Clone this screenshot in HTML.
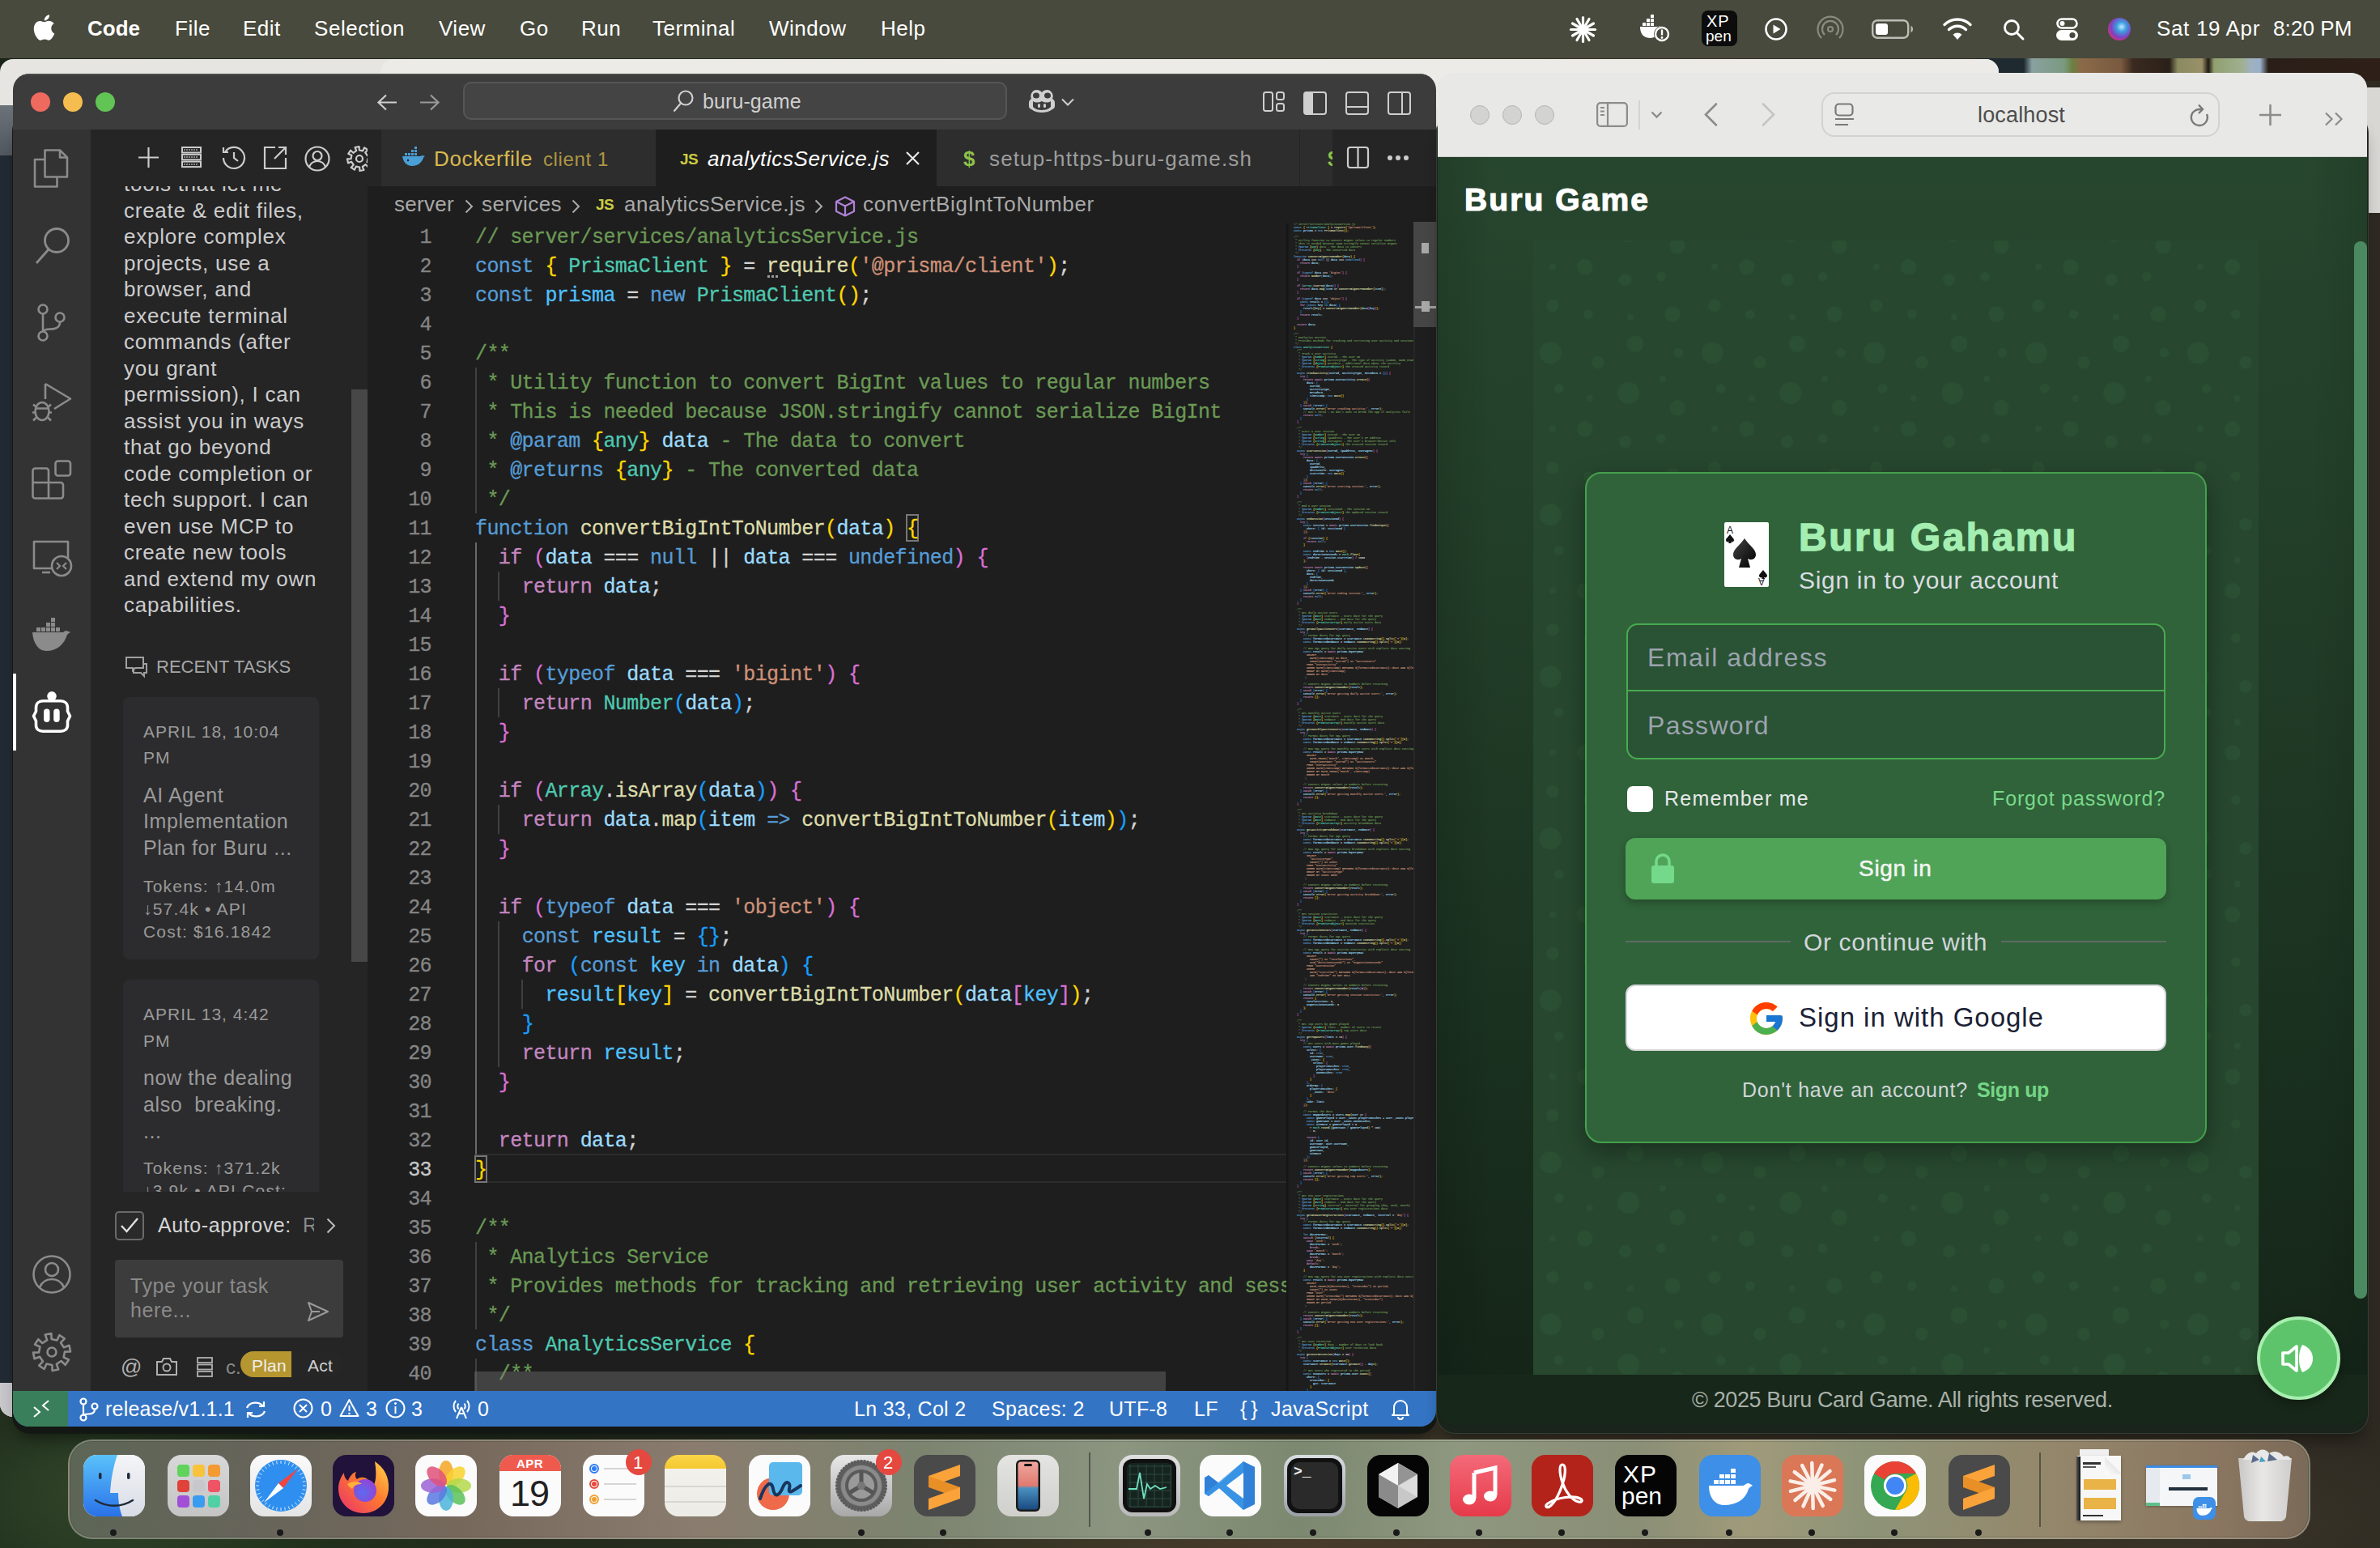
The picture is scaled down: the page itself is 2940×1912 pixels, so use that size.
<!DOCTYPE html>
<html><head><meta charset="utf-8">
<style>
*{box-sizing:border-box;margin:0;padding:0}
html,body{width:2940px;height:1912px;overflow:hidden}
body{position:relative;font-family:"Liberation Sans",sans-serif;background:#2a2e22}
.a{position:absolute}
.t{white-space:pre}
svg{position:absolute;overflow:visible}
</style></head><body>

<div class="a" style="left:0;top:0;width:2940px;height:1912px;background:
 radial-gradient(ellipse 260px 60px at 2700px 80px,#6a6a50 0%,transparent 80%),
 radial-gradient(ellipse 300px 200px at 120px 1840px,#30452a 0%,transparent 90%),radial-gradient(ellipse 500px 160px at 250px 1880px,#22361c 0%,transparent 80%),
 radial-gradient(ellipse 700px 160px at 1600px 1890px,#4a3c2c 0%,transparent 80%),
 radial-gradient(ellipse 500px 160px at 2700px 1880px,#3a3428 0%,transparent 80%),
 linear-gradient(90deg,#1a2416 0%,#283020 35%,#3a3326 65%,#2e2a22 100%)"></div>
<div class="a" style="left:2440px;top:60px;width:500px;height:40px;background:linear-gradient(90deg,#1e2a30 0px,#1e2a30 60px,#8aa0a0 70px,#7a9a80 110px,#6a8040 120px,#8a6a48 130px,#7a5a40 180px,#3a2a20 195px,#2a2018 240px,#8a8a60 250px,#9a9068 280px,#201810 288px,#90a070 295px,#a0b090 330px,#a0b0c0 340px,#9ab0c8 352px,#2a1e18 362px,#2e2018 500px)"></div>
<div class="a" style="left:0px;top:0px;width:2940px;height:72px;background:#484a3d;"></div>
<svg style="left:41px;top:18px;" width="27" height="32" viewBox="0 0 27 32"><path fill="#fff" d="M22.3 17c0-4 3.3-5.9 3.4-6-1.9-2.7-4.8-3.1-5.8-3.1-2.5-.3-4.8 1.4-6.1 1.4-1.3 0-3.2-1.4-5.2-1.3C5.9 8 3.4 9.5 2.1 11.9c-2.8 4.8-.7 12 2 15.9 1.3 1.9 2.9 4.1 5 4 2-.1 2.7-1.3 5.1-1.3s3.1 1.3 5.1 1.2c2.1 0 3.5-1.9 4.8-3.9 1.5-2.2 2.1-4.3 2.2-4.4-.1 0-4-1.5-4-6.4zM18.4 5.3c1.1-1.3 1.8-3.1 1.6-5-1.6.1-3.5 1.1-4.6 2.4-1 1.1-1.9 3-1.7 4.8 1.8.1 3.6-.9 4.7-2.2z"/></svg>
<div class="a t" style="left:108px;top:21.9px;font:normal bold 26px/26px 'Liberation Sans',sans-serif;color:#fff;letter-spacing:0px;">Code</div>
<div class="a t" style="left:216px;top:21.9px;font:normal normal 26px/26px 'Liberation Sans',sans-serif;color:#fff;letter-spacing:0.5px;">File</div>
<div class="a t" style="left:300px;top:21.9px;font:normal normal 26px/26px 'Liberation Sans',sans-serif;color:#fff;letter-spacing:0.5px;">Edit</div>
<div class="a t" style="left:388px;top:21.9px;font:normal normal 26px/26px 'Liberation Sans',sans-serif;color:#fff;letter-spacing:0.55px;">Selection</div>
<div class="a t" style="left:542px;top:21.9px;font:normal normal 26px/26px 'Liberation Sans',sans-serif;color:#fff;letter-spacing:0.5px;">View</div>
<div class="a t" style="left:642px;top:21.9px;font:normal normal 26px/26px 'Liberation Sans',sans-serif;color:#fff;letter-spacing:0.5px;">Go</div>
<div class="a t" style="left:718px;top:21.9px;font:normal normal 26px/26px 'Liberation Sans',sans-serif;color:#fff;letter-spacing:0.5px;">Run</div>
<div class="a t" style="left:806px;top:21.9px;font:normal normal 26px/26px 'Liberation Sans',sans-serif;color:#fff;letter-spacing:0.5px;">Terminal</div>
<div class="a t" style="left:950px;top:21.9px;font:normal normal 26px/26px 'Liberation Sans',sans-serif;color:#fff;letter-spacing:0.5px;">Window</div>
<div class="a t" style="left:1088px;top:21.9px;font:normal normal 26px/26px 'Liberation Sans',sans-serif;color:#fff;letter-spacing:0.5px;">Help</div>
<div class="a t" style="left:2664px;top:21.9px;font:normal normal 26px/26px 'Liberation Sans',sans-serif;color:#fff;letter-spacing:0.66px;">Sat 19 Apr</div>
<div class="a t" style="left:2808px;top:21.9px;font:normal normal 26px/26px 'Liberation Sans',sans-serif;color:#fff;letter-spacing:0.1px;">8:20 PM</div>
<svg style="left:1939px;top:20px;" width="33" height="33" viewBox="0 0 33 33"><line x1="16.5" y1="16.5" x2="31.50" y2="16.50" stroke="#fff" stroke-width="3.2" stroke-linecap="round"/><line x1="16.5" y1="16.5" x2="29.49" y2="24.00" stroke="#fff" stroke-width="3.2" stroke-linecap="round"/><line x1="16.5" y1="16.5" x2="24.00" y2="29.49" stroke="#fff" stroke-width="3.2" stroke-linecap="round"/><line x1="16.5" y1="16.5" x2="16.50" y2="31.50" stroke="#fff" stroke-width="3.2" stroke-linecap="round"/><line x1="16.5" y1="16.5" x2="9.00" y2="29.49" stroke="#fff" stroke-width="3.2" stroke-linecap="round"/><line x1="16.5" y1="16.5" x2="3.51" y2="24.00" stroke="#fff" stroke-width="3.2" stroke-linecap="round"/><line x1="16.5" y1="16.5" x2="1.50" y2="16.50" stroke="#fff" stroke-width="3.2" stroke-linecap="round"/><line x1="16.5" y1="16.5" x2="3.51" y2="9.00" stroke="#fff" stroke-width="3.2" stroke-linecap="round"/><line x1="16.5" y1="16.5" x2="9.00" y2="3.51" stroke="#fff" stroke-width="3.2" stroke-linecap="round"/><line x1="16.5" y1="16.5" x2="16.50" y2="1.50" stroke="#fff" stroke-width="3.2" stroke-linecap="round"/><line x1="16.5" y1="16.5" x2="24.00" y2="3.51" stroke="#fff" stroke-width="3.2" stroke-linecap="round"/><line x1="16.5" y1="16.5" x2="29.49" y2="9.00" stroke="#fff" stroke-width="3.2" stroke-linecap="round"/></svg>
<svg style="left:2024px;top:18px;" width="40" height="34" viewBox="0 0 40 34"><path fill="#fff" d="M2 15h22c1 0 2-1 3-1 1 1 2 2 1 3-1 6-6 12-14 12C6 29 2 23 2 15z"/><rect x="5" y="10" width="4" height="4" fill="#fff"/><rect x="10" y="10" width="4" height="4" fill="#fff"/><rect x="15" y="10" width="4" height="4" fill="#fff"/><rect x="10" y="5" width="4" height="4" fill="#fff"/><rect x="15" y="5" width="4" height="4" fill="#fff"/><rect x="15" y="0" width="4" height="4" fill="#fff"/><circle cx="29" cy="24" r="10" fill="#484a3d"/><circle cx="29" cy="24" r="8" fill="none" stroke="#fff" stroke-width="2.4"/><rect x="27.8" y="18.5" width="2.4" height="7" fill="#fff"/><circle cx="29" cy="28.5" r="1.4" fill="#fff"/></svg>
<div class="a" style="left:2102px;top:13px;width:44px;height:44px;border-radius:8px;background:#0c0c0c"></div>
<div class="a t" style="left:2108px;top:16.0px;font:normal normal 20px/20px 'Liberation Sans',sans-serif;color:#fff;letter-spacing:1px;">XP</div>
<div class="a t" style="left:2107px;top:34.9px;font:normal normal 19px/19px 'Liberation Sans',sans-serif;color:#fff;letter-spacing:0px;">pen</div>
<svg style="left:2180px;top:22px;" width="28" height="28" viewBox="0 0 28 28"><circle cx="14" cy="14" r="12.5" fill="none" stroke="#fff" stroke-width="2.6"/><path d="M10.5 8.5v11l9-5.5z" fill="#fff"/></svg>
<svg style="left:2245px;top:20px;" width="32" height="32" viewBox="0 0 32 32"><g fill="none" stroke="#8a8b80" stroke-width="2.2"><circle cx="16" cy="16" r="3"/><path d="M9 23a10 10 0 1 1 14 0"/><path d="M5 27a15.5 15.5 0 1 1 22 0"/></g></svg>
<svg style="left:2312px;top:24px;" width="52" height="24" viewBox="0 0 52 24"><rect x="1.2" y="1.2" width="44" height="21.6" rx="6" fill="none" stroke="#bdbdb5" stroke-width="2.4"/><rect x="5" y="5" width="15" height="14" rx="3" fill="#fff"/><path d="M48.5 8v8c1.8-.6 2.5-2 2.5-4s-.7-3.4-2.5-4z" fill="#bdbdb5"/></svg>
<svg style="left:2400px;top:22px;" width="36" height="27" viewBox="0 0 36 27"><path fill="#fff" d="M18 27l-5.5-6.2a8 8 0 0 1 11 0z"/><path fill="none" stroke="#fff" stroke-width="3.4" stroke-linecap="round" d="M7.5 14.5a15 15 0 0 1 21 0M2 8.5a23 23 0 0 1 32 0"/></svg>
<svg style="left:2474px;top:23px;" width="27" height="27" viewBox="0 0 27 27"><circle cx="11" cy="11" r="8.5" fill="none" stroke="#fff" stroke-width="2.8"/><path d="M17.5 17.5l7.5 7.5" stroke="#fff" stroke-width="3" stroke-linecap="round"/></svg>
<svg style="left:2540px;top:22px;" width="27" height="28" viewBox="0 0 27 28"><rect x="1.5" y="1.5" width="24" height="11" rx="5.5" fill="none" stroke="#fff" stroke-width="2.6"/><circle cx="7.5" cy="7" r="3" fill="#fff"/><rect x="0" y="15" width="27" height="13" rx="6.5" fill="#fff"/><circle cx="20" cy="21.5" r="3.6" fill="#484a3d"/></svg>
<div class="a" style="left:2604px;top:22px;width:28px;height:28px;border-radius:50%;background:radial-gradient(circle at 60% 40%,#c8e8ff 0%,#3aa0e0 25%,#8040c0 55%,#e03070 80%,#401850 100%)"></div>
<div class="a" style="left:0px;top:73px;width:2469px;height:1677px;border-radius:16px;background:#e6e5e2;overflow:hidden"><div class="a" style="left:0;top:57px;width:20px;height:62px;background:linear-gradient(#6c7279,#52585f)"></div><div class="a" style="left:0;top:119px;width:20px;height:1516px;background:#222a33"></div><div class="a" style="left:0;top:1635px;width:20px;height:42px;background:#c8c8cc"></div></div>
<div class="a" style="left:470px;top:73px;width:1999px;height:60px;border-radius:16px 16px 0 0;background:#ecebe8"></div>
<div class="a" style="left:2880px;top:108px;width:60px;height:155px;border-radius:20px 0 0 0;background:#d8d7d4"></div>
<div class="a" style="left:15px;top:140px;width:1760px;height:1631px;border-radius:22px;background:#141814;box-shadow:0 14px 20px -8px rgba(0,0,0,.45)"></div>
<div class="a" style="left:16px;top:91px;width:1758px;height:1671px;overflow:hidden;border-radius:20px;background:#3c3c3c"><div class="a" style="left:-16px;top:-91px;width:2940px;height:1912px">
<div class="a" style="left:16px;top:91px;width:1758px;height:2px;background:#4a4a4a;"></div>
<div class="a" style="left:38px;top:114px;width:24px;height:24px;border-radius:50%;background:#ee6a5f"></div>
<div class="a" style="left:78px;top:114px;width:24px;height:24px;border-radius:50%;background:#f5bd4f"></div>
<div class="a" style="left:118px;top:114px;width:24px;height:24px;border-radius:50%;background:#61c454"></div>
<svg style="left:466px;top:116px;" width="25" height="21" viewBox="0 0 25 21"><path d="M24 10.5H2M11 1.5l-9.5 9 9.5 9" fill="none" stroke="#cfcfcf" stroke-width="2.2"/></svg>
<svg style="left:518px;top:116px;" width="25" height="21" viewBox="0 0 25 21"><path d="M1 10.5h22M14 1.5l9.5 9-9.5 9" fill="none" stroke="#9a9a9a" stroke-width="2.2"/></svg>
<div class="a" style="left:572px;top:101px;width:672px;height:47px;border-radius:10px;background:#444;border:2px solid #565656"></div>
<svg style="left:831px;top:111px;" width="26" height="28" viewBox="0 0 26 28"><circle cx="16" cy="10" r="8.5" fill="none" stroke="#cfcfcf" stroke-width="2.2"/><path d="M10 16.5L1.5 26.5" stroke="#cfcfcf" stroke-width="2.2"/></svg>
<div class="a t" style="left:868px;top:112.8px;font:normal normal 25px/25px 'Liberation Sans',sans-serif;color:#cfcfcf;letter-spacing:0.1px;">buru-game</div>
<svg style="left:1270px;top:110px;" width="34" height="30" viewBox="0 0 34 30"><path fill="#cfcfcf" d="M17 4c-3-4-10-4-12 0-2 2-2 6-1 8-2 1-3 3-3 5v4c0 2 1 3 3 4 4 3 9 4 13 4s9-1 13-4c2-1 3-2 3-4v-4c0-2-1-4-3-5 1-2 1-6-1-8-2-4-9-4-12 0z"/><ellipse cx="10" cy="8" rx="4" ry="3.5" fill="#3c3c3c"/><ellipse cx="24" cy="8" rx="4" ry="3.5" fill="#3c3c3c"/><path d="M6 15c3 2 7 2 11 0 4 2 8 2 11 0v7c-3 3-7 4-11 4s-8-1-11-4z" fill="#3c3c3c"/><rect x="12" y="18" width="3" height="5" rx="1.5" fill="#cfcfcf"/><rect x="19" y="18" width="3" height="5" rx="1.5" fill="#cfcfcf"/></svg>
<svg style="left:1311px;top:121px;" width="16" height="10" viewBox="0 0 16 10"><path d="M1 1.5l7 7 7-7" fill="none" stroke="#cfcfcf" stroke-width="2"/></svg>
<svg style="left:1560px;top:113px;" width="27" height="25" viewBox="0 0 27 25"><g fill="none" stroke="#cfcfcf" stroke-width="2"><rect x="1" y="1" width="11" height="23" rx="2.5"/><rect x="17" y="1" width="9" height="9" rx="2.5"/><rect x="17" y="15" width="9" height="9" rx="2.5"/></g></svg>
<svg style="left:1610px;top:113px;" width="29" height="28" viewBox="0 0 29 28"><rect x="1" y="1" width="27" height="27" rx="3" fill="none" stroke="#cfcfcf" stroke-width="2"/><path d="M2 2h10v25H2z" fill="#cfcfcf"/></svg>
<svg style="left:1662px;top:113px;" width="29" height="28" viewBox="0 0 29 28"><g fill="none" stroke="#cfcfcf" stroke-width="2"><rect x="1" y="1" width="27" height="27" rx="3"/><path d="M1 19h27"/></g></svg>
<svg style="left:1714px;top:113px;" width="29" height="28" viewBox="0 0 29 28"><g fill="none" stroke="#cfcfcf" stroke-width="2"><rect x="1" y="1" width="27" height="27" rx="3"/><path d="M18 1v27"/></g></svg>
<div class="a" style="left:16px;top:160px;width:96px;height:1558px;background:#333333;"></div>
<svg style="left:40px;top:182px;" width="46" height="52" viewBox="0 0 46 52"><g fill="none" stroke="#8b8b8b" stroke-width="2.6" stroke-linejoin="round"><path d="M15.5 3.5H34L43 12.5V36.5H15.5Z"/><path d="M34 3.5V12.5H43"/><path d="M15.5 15H3V48.5H30.5V36.5"/></g></svg>
<svg style="left:42px;top:280px;" width="46" height="48" viewBox="0 0 46 48"><g fill="none" stroke="#8b8b8b" stroke-width="2.8"><circle cx="28" cy="17" r="14.5"/><path d="M18 28L3 45"/></g></svg>
<svg style="left:44px;top:375px;" width="40" height="50" viewBox="0 0 40 50"><g fill="none" stroke="#8b8b8b" stroke-width="2.6"><circle cx="9" cy="7" r="5.5"/><circle cx="9" cy="40" r="5.5"/><circle cx="30" cy="17" r="5.5"/><path d="M9 12.5v22M30 22.5c0 8-6 9-12 9s-9 2-9 3"/></g></svg>
<svg style="left:39px;top:472px;" width="50" height="50" viewBox="0 0 50 50"><g fill="none" stroke="#8b8b8b" stroke-width="2.6" stroke-linejoin="round" stroke-linecap="butt"><path d="M17 2V21M17 2L48 20.5L28 33"/><ellipse cx="13" cy="36" rx="8.5" ry="11"/><path d="M5 32.5H21M1 37.5H5M21 37.5H25M2 27.5l4 3.5M24 27.5l-4 3.5M2 47.5l4-4M24 47.5l-4-4"/></g></svg>
<svg style="left:39px;top:568px;" width="50" height="50" viewBox="0 0 50 50"><g fill="none" stroke="#8b8b8b" stroke-width="2.6" stroke-linejoin="round"><rect x="29.5" y="1.5" width="18.5" height="18" rx="3"/><path d="M4.5 10.5H18a3 3 0 0 1 3 3V28H36a3 3 0 0 1 3 3V44.5a3 3 0 0 1-3 3H4.5a3 3 0 0 1-3-3V13.5a3 3 0 0 1 3-3ZM1.5 28H21V47.5"/></g></svg>
<svg style="left:40px;top:664px;" width="50" height="50" viewBox="0 0 50 50"><g fill="none" stroke="#8b8b8b" stroke-width="2.6" stroke-linejoin="round"><path d="M26 38H2V5h42v20"/><path d="M12 43h10"/></g><circle cx="36" cy="35" r="12" fill="#333" stroke="#8b8b8b" stroke-width="2.6"/><path d="M30 31l4 4-4 4M42 31l-4 4 4 4" fill="none" stroke="#8b8b8b" stroke-width="2.2"/></svg>
<svg style="left:40px;top:765px;" width="48" height="40" viewBox="0 0 48 40"><g fill="#8b8b8b"><path d="M0 16h37c2 0 3-2 4-2 2 0 4 1 6 2-2 1-3 2-4 3-4 12-12 20-26 20C8 39 1 30 0 16z"/><rect x="5" y="10" width="5" height="5"/><rect x="11" y="10" width="5" height="5"/><rect x="17" y="10" width="5" height="5"/><rect x="23" y="10" width="5" height="5"/><rect x="29" y="10" width="5" height="5"/><rect x="17" y="4" width="5" height="5"/><rect x="23" y="4" width="5" height="5"/><rect x="23" y="-2" width="5" height="5"/></g></svg>
<div class="a" style="left:16px;top:832px;width:4px;height:95px;background:#ffffff;"></div>
<svg style="left:40px;top:852px;" width="48" height="56" viewBox="0 0 48 56"><path d="M13 13.8H35C40 13.8 43.5 17 43.5 22V26.5L46.5 32.5L43.5 38.5V43.5C43.5 48.5 40 51.2 35 51.2H13C8 51.2 4.5 48.5 4.5 43.5V38.5L1.5 32.5L4.5 26.5V22C4.5 17 8 13.8 13 13.8Z" fill="none" stroke="#fff" stroke-width="3.6" stroke-linejoin="round"/><circle cx="24" cy="7.8" r="5.8" fill="#fff"/><rect x="14" y="23.5" width="7.5" height="16.5" rx="3.7" fill="#fff"/><rect x="26.2" y="23.5" width="7.5" height="16.5" rx="3.7" fill="#fff"/></svg>
<svg style="left:40px;top:1550px;" width="48" height="48" viewBox="0 0 48 48"><g fill="none" stroke="#8b8b8b" stroke-width="2.6"><circle cx="24" cy="24" r="22.5"/><circle cx="24" cy="18" r="8"/><path d="M9 40c3-7 9-10 15-10s12 3 15 10"/></g></svg>
<svg style="left:40px;top:1646px;" width="48" height="48" viewBox="0 0 48 48"><g fill="none" stroke="#8b8b8b" stroke-width="2.6" stroke-linejoin="round"><polygon points="45.5,15.8 47.0,23.4 40.0,23.6 38.6,30.5 45.0,33.4 40.7,39.8 35.6,35.0 29.8,38.9 32.2,45.5 24.6,47.0 24.4,40.0 17.5,38.6 14.6,45.0 8.2,40.7 13.0,35.6 9.1,29.8 2.5,32.2 1.0,24.6 8.0,24.4 9.4,17.5 3.0,14.6 7.3,8.2 12.4,13.0 18.2,9.1 15.8,2.5 23.4,1.0 23.6,8.0 30.5,9.4 33.4,3.0 39.8,7.3 35.0,12.4 38.9,18.2"/><circle cx="24" cy="24" r="5.5"/></g></svg>
<div class="a" style="left:112px;top:160px;width:342px;height:1558px;background:#252526;"></div>
<svg style="left:170px;top:181px;" width="27" height="27" viewBox="0 0 27 27"><path d="M13.5 1v25M1 13.5h25" stroke="#cccccc" stroke-width="2.2"/></svg>
<svg style="left:224px;top:181px;" width="25" height="26" viewBox="0 0 25 26"><g fill="none" stroke="#cccccc" stroke-width="2"><rect x="1" y="1" width="23" height="6.5"/><rect x="1" y="9.8" width="23" height="6.5"/><rect x="1" y="18.6" width="23" height="6.5"/></g><g stroke="#cccccc" stroke-width="1.2"><path d="M4 3v2M7 3v2M10 3v2M13 3v2M16 3v2M19 3v2M4 12v2M7 12v2M10 12v2M13 12v2M16 12v2M19 12v2M4 21v2M7 21v2M10 21v2M13 21v2M16 21v2M19 21v2"/></g></svg>
<svg style="left:274px;top:180px;" width="28" height="28" viewBox="0 0 28 28"><g fill="none" stroke="#cccccc" stroke-width="2.2"><path d="M4 8A13 13 0 1 1 2 15"/><path d="M2 2v6h6"/><path d="M15 8v7l5 4"/></g></svg>
<svg style="left:326px;top:181px;" width="28" height="28" viewBox="0 0 28 28"><g fill="none" stroke="#cccccc" stroke-width="2.2"><path d="M14 1H1v26h26V14"/><path d="M13 15L27 1M18 1h9v9"/></g></svg>
<svg style="left:376px;top:180px;" width="32" height="32" viewBox="0 0 32 32"><g fill="none" stroke="#cccccc" stroke-width="2.2"><circle cx="16" cy="16" r="14.5"/><circle cx="16" cy="12.5" r="5.5"/><path d="M6 26c2-5 6-7 10-7s8 2 10 7"/></g></svg>
<div class="a" style="left:424px;top:170px;width:30px;height:50px;overflow:hidden">
<svg style="left:4px;top:10px;" width="32" height="32" viewBox="0 0 32 32"><g fill="none" stroke="#cccccc" stroke-width="2.2" stroke-linejoin="round"><polygon points="30.0,10.6 31.0,15.6 26.5,15.8 25.6,20.2 29.7,22.1 26.9,26.3 23.6,23.2 19.8,25.8 21.4,30.0 16.4,31.0 16.2,26.5 11.8,25.6 9.9,29.7 5.7,26.9 8.8,23.6 6.2,19.8 2.0,21.4 1.0,16.4 5.5,16.2 6.4,11.8 2.3,9.9 5.1,5.7 8.4,8.8 12.2,6.2 10.6,2.0 15.6,1.0 15.8,5.5 20.2,6.4 22.1,2.3 26.3,5.1 23.2,8.4 25.8,12.2"/><circle cx="16" cy="16" r="4"/></g></svg>
</div>
<div class="a" style="left:112px;top:230px;width:322px;height:1242px;overflow:hidden"><div class="a" style="left:-112px;top:-230px;width:600px;height:1500px">
<div class="a t" style="left:153px;top:214.4px;font:normal normal 26px/26px 'Liberation Sans',sans-serif;color:#cccccc;letter-spacing:0.75px;">tools that let me</div>
<div class="a t" style="left:153px;top:246.9px;font:normal normal 26px/26px 'Liberation Sans',sans-serif;color:#cccccc;letter-spacing:0.75px;">create &amp; edit files,</div>
<div class="a t" style="left:153px;top:279.4px;font:normal normal 26px/26px 'Liberation Sans',sans-serif;color:#cccccc;letter-spacing:0.75px;">explore complex</div>
<div class="a t" style="left:153px;top:311.9px;font:normal normal 26px/26px 'Liberation Sans',sans-serif;color:#cccccc;letter-spacing:0.75px;">projects, use a</div>
<div class="a t" style="left:153px;top:344.4px;font:normal normal 26px/26px 'Liberation Sans',sans-serif;color:#cccccc;letter-spacing:0.75px;">browser, and</div>
<div class="a t" style="left:153px;top:376.9px;font:normal normal 26px/26px 'Liberation Sans',sans-serif;color:#cccccc;letter-spacing:0.75px;">execute terminal</div>
<div class="a t" style="left:153px;top:409.4px;font:normal normal 26px/26px 'Liberation Sans',sans-serif;color:#cccccc;letter-spacing:0.75px;">commands (after</div>
<div class="a t" style="left:153px;top:441.9px;font:normal normal 26px/26px 'Liberation Sans',sans-serif;color:#cccccc;letter-spacing:0.75px;">you grant</div>
<div class="a t" style="left:153px;top:474.4px;font:normal normal 26px/26px 'Liberation Sans',sans-serif;color:#cccccc;letter-spacing:0.75px;">permission), I can</div>
<div class="a t" style="left:153px;top:506.9px;font:normal normal 26px/26px 'Liberation Sans',sans-serif;color:#cccccc;letter-spacing:0.75px;">assist you in ways</div>
<div class="a t" style="left:153px;top:539.4px;font:normal normal 26px/26px 'Liberation Sans',sans-serif;color:#cccccc;letter-spacing:0.75px;">that go beyond</div>
<div class="a t" style="left:153px;top:571.9px;font:normal normal 26px/26px 'Liberation Sans',sans-serif;color:#cccccc;letter-spacing:0.75px;">code completion or</div>
<div class="a t" style="left:153px;top:604.4px;font:normal normal 26px/26px 'Liberation Sans',sans-serif;color:#cccccc;letter-spacing:0.75px;">tech support. I can</div>
<div class="a t" style="left:153px;top:636.9px;font:normal normal 26px/26px 'Liberation Sans',sans-serif;color:#cccccc;letter-spacing:0.75px;">even use MCP to</div>
<div class="a t" style="left:153px;top:669.4px;font:normal normal 26px/26px 'Liberation Sans',sans-serif;color:#cccccc;letter-spacing:0.75px;">create new tools</div>
<div class="a t" style="left:153px;top:701.9px;font:normal normal 26px/26px 'Liberation Sans',sans-serif;color:#cccccc;letter-spacing:0.75px;">and extend my own</div>
<div class="a t" style="left:153px;top:734.4px;font:normal normal 26px/26px 'Liberation Sans',sans-serif;color:#cccccc;letter-spacing:0.75px;">capabilities.</div>
<svg style="left:155px;top:811px;" width="27" height="26" viewBox="0 0 27 26"><g fill="none" stroke="#a0a0a0" stroke-width="2"><path d="M1 1h21v13H12l-3 3v-3H1z"/><path d="M10 14v6h9l4 4v-4h3V9h-4"/></g></svg>
<div class="a t" style="left:193px;top:813.3px;font:normal normal 22px/22px 'Liberation Sans',sans-serif;color:#a6a6a6;letter-spacing:0px;">RECENT TASKS</div>
<div class="a" style="left:152px;top:861px;width:242px;height:324px;border-radius:8px;background:#2c2c2e"></div>
<div class="a t" style="left:177px;top:892.6px;font:normal normal 21px/21px 'Liberation Sans',sans-serif;color:#9a9a9a;letter-spacing:1.0px;">APRIL 18, 10:04</div>
<div class="a t" style="left:177px;top:924.6px;font:normal normal 21px/21px 'Liberation Sans',sans-serif;color:#9a9a9a;letter-spacing:1.0px;">PM</div>
<div class="a t" style="left:177px;top:969.8px;font:normal normal 25px/25px 'Liberation Sans',sans-serif;color:#9a9a9a;letter-spacing:0.6px;">AI Agent</div>
<div class="a t" style="left:177px;top:1002.2px;font:normal normal 25px/25px 'Liberation Sans',sans-serif;color:#9a9a9a;letter-spacing:0.6px;">Implementation</div>
<div class="a t" style="left:177px;top:1034.8px;font:normal normal 25px/25px 'Liberation Sans',sans-serif;color:#9a9a9a;letter-spacing:0.6px;">Plan for Buru ...</div>
<div class="a t" style="left:177px;top:1083.7px;font:normal normal 21px/21px 'Liberation Sans',sans-serif;color:#9a9a9a;letter-spacing:1.2px;">Tokens: ↑14.0m</div>
<div class="a t" style="left:177px;top:1111.7px;font:normal normal 21px/21px 'Liberation Sans',sans-serif;color:#9a9a9a;letter-spacing:1.2px;">↓57.4k • API</div>
<div class="a t" style="left:177px;top:1139.7px;font:normal normal 21px/21px 'Liberation Sans',sans-serif;color:#9a9a9a;letter-spacing:1.2px;">Cost: $16.1842</div>
<div class="a" style="left:152px;top:1210px;width:242px;height:300px;border-radius:8px;background:#2c2c2e"></div>
<div class="a t" style="left:177px;top:1242.2px;font:normal normal 21px/21px 'Liberation Sans',sans-serif;color:#9a9a9a;letter-spacing:1.0px;">APRIL 13, 4:42</div>
<div class="a t" style="left:177px;top:1274.7px;font:normal normal 21px/21px 'Liberation Sans',sans-serif;color:#9a9a9a;letter-spacing:1.0px;">PM</div>
<div class="a t" style="left:177px;top:1318.8px;font:normal normal 25px/25px 'Liberation Sans',sans-serif;color:#9a9a9a;letter-spacing:0.6px;">now the dealing</div>
<div class="a t" style="left:177px;top:1351.8px;font:normal normal 25px/25px 'Liberation Sans',sans-serif;color:#9a9a9a;letter-spacing:0.6px;">also  breaking.</div>
<div class="a t" style="left:177px;top:1384.8px;font:normal normal 25px/25px 'Liberation Sans',sans-serif;color:#9a9a9a;letter-spacing:0.6px;">...</div>
<div class="a t" style="left:177px;top:1432.2px;font:normal normal 21px/21px 'Liberation Sans',sans-serif;color:#9a9a9a;letter-spacing:1.2px;">Tokens: ↑371.2k</div>
<div class="a t" style="left:177px;top:1460.2px;font:normal normal 21px/21px 'Liberation Sans',sans-serif;color:#9a9a9a;letter-spacing:1.2px;">↓3.9k • API Cost:</div>
</div></div>
<div class="a" style="left:434px;top:481px;width:20px;height:707px;background:#474747;"></div>
<div class="a" style="left:142px;top:1496px;width:36px;height:36px;border-radius:5px;border:2px solid #6a6a6a;background:#2a2a2a"></div>
<svg style="left:148px;top:1503px;" width="24" height="20" viewBox="0 0 24 20"><path d="M2 11l6.5 7L22 2" fill="none" stroke="#e0e0e0" stroke-width="2.4"/></svg>
<div class="a t" style="left:195px;top:1501.2px;font:normal normal 25px/25px 'Liberation Sans',sans-serif;color:#d4d4d4;letter-spacing:0.6px;">Auto-approve: </div>
<div class="a t" style="left:374px;top:1501.2px;font:normal normal 25px/25px 'Liberation Sans',sans-serif;color:#8a8a8a;letter-spacing:0px;">R</div>
<div class="a" style="left:388px;top:1496px;width:6px;height:36px;background:#252526;"></div>
<svg style="left:403px;top:1504px;" width="12" height="20" viewBox="0 0 12 20"><path d="M1.5 1.5l8.5 8.5-8.5 8.5" fill="none" stroke="#bbb" stroke-width="2"/></svg>
<div class="a" style="left:142px;top:1556px;width:282px;height:96px;border-radius:4px;background:#3c3c3c"></div>
<div class="a t" style="left:161px;top:1576.2px;font:normal normal 25px/25px 'Liberation Sans',sans-serif;color:#8a8a8a;letter-spacing:0.6px;">Type your task</div>
<div class="a t" style="left:161px;top:1605.8px;font:normal normal 25px/25px 'Liberation Sans',sans-serif;color:#8a8a8a;letter-spacing:0.6px;">here...</div>
<svg style="left:379px;top:1607px;" width="28" height="26" viewBox="0 0 28 26"><path d="M2 2l24 11L2 24l4-11z M6 13h10" fill="none" stroke="#9a9a9a" stroke-width="2" stroke-linejoin="round"/></svg>
<div class="a t" style="left:149px;top:1674.9px;font:normal normal 26px/26px 'Liberation Sans',sans-serif;color:#b0b0b0;letter-spacing:0px;">@</div>
<svg style="left:193px;top:1677px;" width="26" height="22" viewBox="0 0 26 22"><g fill="none" stroke="#b0b0b0" stroke-width="2"><path d="M1 5h6l2-4h8l2 4h6v16H1z"/><circle cx="13" cy="12" r="4.5"/></g></svg>
<svg style="left:243px;top:1676px;" width="20" height="25" viewBox="0 0 20 25"><g fill="none" stroke="#b0b0b0" stroke-width="1.8"><rect x="1" y="1" width="18" height="6"/><rect x="1" y="9.5" width="18" height="6"/><rect x="1" y="18" width="18" height="6"/></g></svg>
<div class="a t" style="left:279px;top:1676.6px;font:normal normal 24px/24px 'Liberation Sans',sans-serif;color:#8a8a8a;letter-spacing:0px;">c.</div>
<div class="a" style="left:297px;top:1669px;width:127px;height:32px;border-radius:16px;background:#262626"></div>
<div class="a" style="left:297px;top:1669px;width:63px;height:32px;border-radius:16px 0 0 16px;background:#b6962f"></div>
<div class="a t" style="left:311px;top:1676.2px;font:normal normal 21px/21px 'Liberation Sans',sans-serif;color:#f0f0f0;letter-spacing:0.2px;">Plan</div>
<div class="a t" style="left:380px;top:1676.2px;font:normal normal 21px/21px 'Liberation Sans',sans-serif;color:#d0d0d0;letter-spacing:0.2px;">Act</div>
<div class="a" style="left:454px;top:160px;width:1320px;height:70px;background:#252526;"></div>
<div class="a" style="left:471px;top:160px;width:339px;height:70px;background:#2d2d2d;"></div>
<div class="a" style="left:810px;top:160px;width:347px;height:70px;background:#1e1e1e;"></div>
<div class="a" style="left:1157px;top:160px;width:448px;height:70px;background:#2d2d2d;"></div>
<div class="a" style="left:1606px;top:160px;width:40px;height:70px;background:#2d2d2d;"></div>
<svg style="left:497px;top:184px;" width="29" height="21" viewBox="0 0 29 21"><g fill="#4a9fd6"><path d="M0 9h22c1 0 2-1 3-1 1 0 2 1 3 1-1 1-2 1-2 2-2 6-7 10-14 10C5 21 1 16 0 9z"/><rect x="3" y="5" width="3" height="3"/><rect x="7" y="5" width="3" height="3"/><rect x="11" y="5" width="3" height="3"/><rect x="15" y="5" width="3" height="3"/><rect x="11" y="1" width="3" height="3"/><rect x="15" y="1" width="3" height="3"/><rect x="15" y="-3" width="3" height="3"/></g><circle cx="7" cy="14" r="1.2" fill="#1e1e1e"/></svg>
<div class="a t" style="left:536px;top:182.9px;font:normal normal 26px/26px 'Liberation Sans',sans-serif;color:#d9b950;letter-spacing:0.64px;">Dockerfile</div>
<div class="a t" style="left:671px;top:184.6px;font:normal normal 24px/24px 'Liberation Sans',sans-serif;color:#ae9644;letter-spacing:0.62px;">client 1</div>
<div class="a t" style="left:840px;top:186.8px;font:normal bold 19px/19px 'Liberation Sans',sans-serif;color:#cbcb41;letter-spacing:-0.5px;">JS</div>
<div class="a t" style="left:874px;top:182.9px;font:italic normal 26px/26px 'Liberation Sans',sans-serif;color:#ffffff;letter-spacing:0.59px;">analyticsService.js</div>
<svg style="left:1119px;top:187px;" width="17" height="17" viewBox="0 0 17 17"><path d="M1 1l15 15M16 1L1 16" stroke="#e8e8e8" stroke-width="2.2"/></svg>
<div class="a t" style="left:1190px;top:182.9px;font:normal bold 26px/26px 'Liberation Sans',sans-serif;color:#8dc149;letter-spacing:0px;">$</div>
<div class="a t" style="left:1222px;top:182.9px;font:normal normal 26px/26px 'Liberation Sans',sans-serif;color:#9d9d9d;letter-spacing:1.14px;">setup-https-buru-game.sh</div>
<div class="a t" style="left:1640px;top:182.9px;font:normal bold 26px/26px 'Liberation Sans',sans-serif;color:#8dc149;letter-spacing:0px;">$</div>
<div class="a" style="left:1646px;top:160px;width:128px;height:70px;background:#252526;"></div>
<svg style="left:1664px;top:181px;" width="27" height="27" viewBox="0 0 27 27"><g fill="none" stroke="#cccccc" stroke-width="2.2"><rect x="1" y="1" width="25" height="25" rx="3"/><path d="M13.5 1v25"/></g></svg>
<div class="a" style="left:1714px;top:192px;width:6px;height:6px;border-radius:50%;background:#cccccc"></div>
<div class="a" style="left:1724px;top:192px;width:6px;height:6px;border-radius:50%;background:#cccccc"></div>
<div class="a" style="left:1734px;top:192px;width:6px;height:6px;border-radius:50%;background:#cccccc"></div>
<div class="a" style="left:454px;top:230px;width:1320px;height:1488px;background:#1e1e1e;"></div>
<div class="a t" style="left:487px;top:238.9px;font:normal normal 26px/26px 'Liberation Sans',sans-serif;color:#a9a9a9;letter-spacing:0.29px;">server</div>
<svg style="left:574px;top:246px;" width="11" height="18" viewBox="0 0 11 18"><path d="M1.5 1.5l7.5 7.5-7.5 7.5" fill="none" stroke="#a9a9a9" stroke-width="2"/></svg>
<div class="a t" style="left:595px;top:238.9px;font:normal normal 26px/26px 'Liberation Sans',sans-serif;color:#a9a9a9;letter-spacing:0.46px;">services</div>
<svg style="left:706px;top:246px;" width="11" height="18" viewBox="0 0 11 18"><path d="M1.5 1.5l7.5 7.5-7.5 7.5" fill="none" stroke="#a9a9a9" stroke-width="2"/></svg>
<div class="a t" style="left:736px;top:242.8px;font:normal bold 19px/19px 'Liberation Sans',sans-serif;color:#cbcb41;letter-spacing:-0.5px;">JS</div>
<div class="a t" style="left:771px;top:238.9px;font:normal normal 26px/26px 'Liberation Sans',sans-serif;color:#a9a9a9;letter-spacing:0.53px;">analyticsService.js</div>
<svg style="left:1006px;top:246px;" width="11" height="18" viewBox="0 0 11 18"><path d="M1.5 1.5l7.5 7.5-7.5 7.5" fill="none" stroke="#a9a9a9" stroke-width="2"/></svg>
<svg style="left:1031px;top:242px;" width="26" height="26" viewBox="0 0 26 26"><g fill="none" stroke="#b180d7" stroke-width="2.2" stroke-linejoin="round"><path d="M13 1.5l11 5.5v12l-11 5.5-11-5.5V7z"/><path d="M2 7l11 5.5L24 7M13 12.5v12"/></g></svg>
<div class="a t" style="left:1066px;top:238.9px;font:normal normal 26px/26px 'Liberation Sans',sans-serif;color:#a9a9a9;letter-spacing:0.68px;">convertBigIntToNumber</div>
<div class="a" style="left:586px;top:1425px;width:1004px;height:36px;border:2px solid #2c2c2c;border-left:none;border-right:none"></div>
<div class="a" style="left:586.5px;top:454px;width:2px;height:180px;background:#404040;"></div>
<div class="a" style="left:586.5px;top:670px;width:2px;height:756px;background:#6a6a6a;"></div>
<div class="a" style="left:615.3px;top:706px;width:2px;height:36px;background:#404040;"></div>
<div class="a" style="left:615.3px;top:850px;width:2px;height:36px;background:#404040;"></div>
<div class="a" style="left:615.3px;top:994px;width:2px;height:36px;background:#404040;"></div>
<div class="a" style="left:615.3px;top:1138px;width:2px;height:180px;background:#404040;"></div>
<div class="a" style="left:644.1px;top:1210px;width:2px;height:36px;background:#404040;"></div>
<div class="a" style="left:586.5px;top:1534px;width:2px;height:108px;background:#404040;"></div>
<div class="a" style="left:586.5px;top:1678px;width:2px;height:72px;background:#404040;"></div>
<div class="a" style="left:1118.8px;top:635px;width:16px;height:34px;border:2px solid #777"></div>
<div class="a" style="left:586px;top:1427px;width:16px;height:34px;border:2px solid #777"></div>
<div class="a" style="left:454px;top:276px;width:1136px;height:1442px;overflow:hidden"><div class="a" style="left:-454px;top:-276px;width:2000px;height:2000px">
<div class="a t" style="left:440px;width:93px;text-align:right;top:280.6px;font:25px/25px 'Liberation Mono',monospace;letter-spacing:-0.6px;color:#858585;-webkit-text-stroke:.3px #858585">1</div>
<div class="a t" style="left:587px;top:280.6px;font:25px/25px 'Liberation Mono',monospace;letter-spacing:-0.6px;-webkit-text-stroke:.3px"><span style="color:#6a9955">// server/services/analyticsService.js</span></div>
<div class="a t" style="left:440px;width:93px;text-align:right;top:316.6px;font:25px/25px 'Liberation Mono',monospace;letter-spacing:-0.6px;color:#858585;-webkit-text-stroke:.3px #858585">2</div>
<div class="a t" style="left:587px;top:316.6px;font:25px/25px 'Liberation Mono',monospace;letter-spacing:-0.6px;-webkit-text-stroke:.3px"><span style="color:#569cd6">const</span><span style="color:#d4d4d4"> </span><span style="color:#ffd700">{</span><span style="color:#d4d4d4"> </span><span style="color:#4ec9b0">PrismaClient</span><span style="color:#d4d4d4"> </span><span style="color:#ffd700">}</span><span style="color:#d4d4d4"> = </span><span style="color:#dcdcaa">require</span><span style="color:#ffd700">(</span><span style="color:#ce9178">&#x27;@prisma/client&#x27;</span><span style="color:#ffd700">)</span><span style="color:#d4d4d4">;</span></div>
<div class="a t" style="left:440px;width:93px;text-align:right;top:352.6px;font:25px/25px 'Liberation Mono',monospace;letter-spacing:-0.6px;color:#858585;-webkit-text-stroke:.3px #858585">3</div>
<div class="a t" style="left:587px;top:352.6px;font:25px/25px 'Liberation Mono',monospace;letter-spacing:-0.6px;-webkit-text-stroke:.3px"><span style="color:#569cd6">const</span><span style="color:#d4d4d4"> </span><span style="color:#4fc1ff">prisma</span><span style="color:#d4d4d4"> = </span><span style="color:#569cd6">new</span><span style="color:#d4d4d4"> </span><span style="color:#4ec9b0">PrismaClient</span><span style="color:#ffd700">()</span><span style="color:#d4d4d4">;</span></div>
<div class="a t" style="left:440px;width:93px;text-align:right;top:388.6px;font:25px/25px 'Liberation Mono',monospace;letter-spacing:-0.6px;color:#858585;-webkit-text-stroke:.3px #858585">4</div>
<div class="a t" style="left:440px;width:93px;text-align:right;top:424.6px;font:25px/25px 'Liberation Mono',monospace;letter-spacing:-0.6px;color:#858585;-webkit-text-stroke:.3px #858585">5</div>
<div class="a t" style="left:587px;top:424.6px;font:25px/25px 'Liberation Mono',monospace;letter-spacing:-0.6px;-webkit-text-stroke:.3px"><span style="color:#6a9955">/**</span></div>
<div class="a t" style="left:440px;width:93px;text-align:right;top:460.6px;font:25px/25px 'Liberation Mono',monospace;letter-spacing:-0.6px;color:#858585;-webkit-text-stroke:.3px #858585">6</div>
<div class="a t" style="left:587px;top:460.6px;font:25px/25px 'Liberation Mono',monospace;letter-spacing:-0.6px;-webkit-text-stroke:.3px"><span style="color:#6a9955"> * Utility function to convert BigInt values to regular numbers</span></div>
<div class="a t" style="left:440px;width:93px;text-align:right;top:496.6px;font:25px/25px 'Liberation Mono',monospace;letter-spacing:-0.6px;color:#858585;-webkit-text-stroke:.3px #858585">7</div>
<div class="a t" style="left:587px;top:496.6px;font:25px/25px 'Liberation Mono',monospace;letter-spacing:-0.6px;-webkit-text-stroke:.3px"><span style="color:#6a9955"> * This is needed because JSON.stringify cannot serialize BigInt</span></div>
<div class="a t" style="left:440px;width:93px;text-align:right;top:532.6px;font:25px/25px 'Liberation Mono',monospace;letter-spacing:-0.6px;color:#858585;-webkit-text-stroke:.3px #858585">8</div>
<div class="a t" style="left:587px;top:532.6px;font:25px/25px 'Liberation Mono',monospace;letter-spacing:-0.6px;-webkit-text-stroke:.3px"><span style="color:#6a9955"> * </span><span style="color:#569cd6">@param</span><span style="color:#6a9955"> </span><span style="color:#ffd700">{</span><span style="color:#4ec9b0">any</span><span style="color:#ffd700">}</span><span style="color:#6a9955"> </span><span style="color:#9cdcfe">data</span><span style="color:#6a9955"> - The data to convert</span></div>
<div class="a t" style="left:440px;width:93px;text-align:right;top:568.6px;font:25px/25px 'Liberation Mono',monospace;letter-spacing:-0.6px;color:#858585;-webkit-text-stroke:.3px #858585">9</div>
<div class="a t" style="left:587px;top:568.6px;font:25px/25px 'Liberation Mono',monospace;letter-spacing:-0.6px;-webkit-text-stroke:.3px"><span style="color:#6a9955"> * </span><span style="color:#569cd6">@returns</span><span style="color:#6a9955"> </span><span style="color:#ffd700">{</span><span style="color:#4ec9b0">any</span><span style="color:#ffd700">}</span><span style="color:#6a9955"> - The converted data</span></div>
<div class="a t" style="left:440px;width:93px;text-align:right;top:604.6px;font:25px/25px 'Liberation Mono',monospace;letter-spacing:-0.6px;color:#858585;-webkit-text-stroke:.3px #858585">10</div>
<div class="a t" style="left:587px;top:604.6px;font:25px/25px 'Liberation Mono',monospace;letter-spacing:-0.6px;-webkit-text-stroke:.3px"><span style="color:#6a9955"> */</span></div>
<div class="a t" style="left:440px;width:93px;text-align:right;top:640.6px;font:25px/25px 'Liberation Mono',monospace;letter-spacing:-0.6px;color:#858585;-webkit-text-stroke:.3px #858585">11</div>
<div class="a t" style="left:587px;top:640.6px;font:25px/25px 'Liberation Mono',monospace;letter-spacing:-0.6px;-webkit-text-stroke:.3px"><span style="color:#569cd6">function</span><span style="color:#d4d4d4"> </span><span style="color:#dcdcaa">convertBigIntToNumber</span><span style="color:#ffd700">(</span><span style="color:#9cdcfe">data</span><span style="color:#ffd700">)</span><span style="color:#d4d4d4"> </span><span style="color:#ffd700">{</span></div>
<div class="a t" style="left:440px;width:93px;text-align:right;top:676.6px;font:25px/25px 'Liberation Mono',monospace;letter-spacing:-0.6px;color:#858585;-webkit-text-stroke:.3px #858585">12</div>
<div class="a t" style="left:587px;top:676.6px;font:25px/25px 'Liberation Mono',monospace;letter-spacing:-0.6px;-webkit-text-stroke:.3px"><span style="color:#d4d4d4">  </span><span style="color:#c586c0">if</span><span style="color:#d4d4d4"> </span><span style="color:#da70d6">(</span><span style="color:#9cdcfe">data</span><span style="color:#d4d4d4"> === </span><span style="color:#569cd6">null</span><span style="color:#d4d4d4"> || </span><span style="color:#9cdcfe">data</span><span style="color:#d4d4d4"> === </span><span style="color:#569cd6">undefined</span><span style="color:#da70d6">)</span><span style="color:#d4d4d4"> </span><span style="color:#da70d6">{</span></div>
<div class="a t" style="left:440px;width:93px;text-align:right;top:712.6px;font:25px/25px 'Liberation Mono',monospace;letter-spacing:-0.6px;color:#858585;-webkit-text-stroke:.3px #858585">13</div>
<div class="a t" style="left:587px;top:712.6px;font:25px/25px 'Liberation Mono',monospace;letter-spacing:-0.6px;-webkit-text-stroke:.3px"><span style="color:#d4d4d4">    </span><span style="color:#c586c0">return</span><span style="color:#d4d4d4"> </span><span style="color:#9cdcfe">data</span><span style="color:#d4d4d4">;</span></div>
<div class="a t" style="left:440px;width:93px;text-align:right;top:748.6px;font:25px/25px 'Liberation Mono',monospace;letter-spacing:-0.6px;color:#858585;-webkit-text-stroke:.3px #858585">14</div>
<div class="a t" style="left:587px;top:748.6px;font:25px/25px 'Liberation Mono',monospace;letter-spacing:-0.6px;-webkit-text-stroke:.3px"><span style="color:#d4d4d4">  </span><span style="color:#da70d6">}</span></div>
<div class="a t" style="left:440px;width:93px;text-align:right;top:784.6px;font:25px/25px 'Liberation Mono',monospace;letter-spacing:-0.6px;color:#858585;-webkit-text-stroke:.3px #858585">15</div>
<div class="a t" style="left:440px;width:93px;text-align:right;top:820.6px;font:25px/25px 'Liberation Mono',monospace;letter-spacing:-0.6px;color:#858585;-webkit-text-stroke:.3px #858585">16</div>
<div class="a t" style="left:587px;top:820.6px;font:25px/25px 'Liberation Mono',monospace;letter-spacing:-0.6px;-webkit-text-stroke:.3px"><span style="color:#d4d4d4">  </span><span style="color:#c586c0">if</span><span style="color:#d4d4d4"> </span><span style="color:#da70d6">(</span><span style="color:#569cd6">typeof</span><span style="color:#d4d4d4"> </span><span style="color:#9cdcfe">data</span><span style="color:#d4d4d4"> === </span><span style="color:#ce9178">&#x27;bigint&#x27;</span><span style="color:#da70d6">)</span><span style="color:#d4d4d4"> </span><span style="color:#da70d6">{</span></div>
<div class="a t" style="left:440px;width:93px;text-align:right;top:856.6px;font:25px/25px 'Liberation Mono',monospace;letter-spacing:-0.6px;color:#858585;-webkit-text-stroke:.3px #858585">17</div>
<div class="a t" style="left:587px;top:856.6px;font:25px/25px 'Liberation Mono',monospace;letter-spacing:-0.6px;-webkit-text-stroke:.3px"><span style="color:#d4d4d4">    </span><span style="color:#c586c0">return</span><span style="color:#d4d4d4"> </span><span style="color:#4ec9b0">Number</span><span style="color:#179fff">(</span><span style="color:#9cdcfe">data</span><span style="color:#179fff">)</span><span style="color:#d4d4d4">;</span></div>
<div class="a t" style="left:440px;width:93px;text-align:right;top:892.6px;font:25px/25px 'Liberation Mono',monospace;letter-spacing:-0.6px;color:#858585;-webkit-text-stroke:.3px #858585">18</div>
<div class="a t" style="left:587px;top:892.6px;font:25px/25px 'Liberation Mono',monospace;letter-spacing:-0.6px;-webkit-text-stroke:.3px"><span style="color:#d4d4d4">  </span><span style="color:#da70d6">}</span></div>
<div class="a t" style="left:440px;width:93px;text-align:right;top:928.6px;font:25px/25px 'Liberation Mono',monospace;letter-spacing:-0.6px;color:#858585;-webkit-text-stroke:.3px #858585">19</div>
<div class="a t" style="left:440px;width:93px;text-align:right;top:964.6px;font:25px/25px 'Liberation Mono',monospace;letter-spacing:-0.6px;color:#858585;-webkit-text-stroke:.3px #858585">20</div>
<div class="a t" style="left:587px;top:964.6px;font:25px/25px 'Liberation Mono',monospace;letter-spacing:-0.6px;-webkit-text-stroke:.3px"><span style="color:#d4d4d4">  </span><span style="color:#c586c0">if</span><span style="color:#d4d4d4"> </span><span style="color:#da70d6">(</span><span style="color:#4ec9b0">Array</span><span style="color:#d4d4d4">.</span><span style="color:#dcdcaa">isArray</span><span style="color:#179fff">(</span><span style="color:#9cdcfe">data</span><span style="color:#179fff">)</span><span style="color:#da70d6">)</span><span style="color:#d4d4d4"> </span><span style="color:#da70d6">{</span></div>
<div class="a t" style="left:440px;width:93px;text-align:right;top:1000.6px;font:25px/25px 'Liberation Mono',monospace;letter-spacing:-0.6px;color:#858585;-webkit-text-stroke:.3px #858585">21</div>
<div class="a t" style="left:587px;top:1000.6px;font:25px/25px 'Liberation Mono',monospace;letter-spacing:-0.6px;-webkit-text-stroke:.3px"><span style="color:#d4d4d4">    </span><span style="color:#c586c0">return</span><span style="color:#d4d4d4"> </span><span style="color:#9cdcfe">data</span><span style="color:#d4d4d4">.</span><span style="color:#dcdcaa">map</span><span style="color:#179fff">(</span><span style="color:#9cdcfe">item</span><span style="color:#d4d4d4"> </span><span style="color:#569cd6">=&gt;</span><span style="color:#d4d4d4"> </span><span style="color:#dcdcaa">convertBigIntToNumber</span><span style="color:#ffd700">(</span><span style="color:#9cdcfe">item</span><span style="color:#ffd700">)</span><span style="color:#179fff">)</span><span style="color:#d4d4d4">;</span></div>
<div class="a t" style="left:440px;width:93px;text-align:right;top:1036.5px;font:25px/25px 'Liberation Mono',monospace;letter-spacing:-0.6px;color:#858585;-webkit-text-stroke:.3px #858585">22</div>
<div class="a t" style="left:587px;top:1036.5px;font:25px/25px 'Liberation Mono',monospace;letter-spacing:-0.6px;-webkit-text-stroke:.3px"><span style="color:#d4d4d4">  </span><span style="color:#da70d6">}</span></div>
<div class="a t" style="left:440px;width:93px;text-align:right;top:1072.5px;font:25px/25px 'Liberation Mono',monospace;letter-spacing:-0.6px;color:#858585;-webkit-text-stroke:.3px #858585">23</div>
<div class="a t" style="left:440px;width:93px;text-align:right;top:1108.5px;font:25px/25px 'Liberation Mono',monospace;letter-spacing:-0.6px;color:#858585;-webkit-text-stroke:.3px #858585">24</div>
<div class="a t" style="left:587px;top:1108.5px;font:25px/25px 'Liberation Mono',monospace;letter-spacing:-0.6px;-webkit-text-stroke:.3px"><span style="color:#d4d4d4">  </span><span style="color:#c586c0">if</span><span style="color:#d4d4d4"> </span><span style="color:#da70d6">(</span><span style="color:#569cd6">typeof</span><span style="color:#d4d4d4"> </span><span style="color:#9cdcfe">data</span><span style="color:#d4d4d4"> === </span><span style="color:#ce9178">&#x27;object&#x27;</span><span style="color:#da70d6">)</span><span style="color:#d4d4d4"> </span><span style="color:#da70d6">{</span></div>
<div class="a t" style="left:440px;width:93px;text-align:right;top:1144.5px;font:25px/25px 'Liberation Mono',monospace;letter-spacing:-0.6px;color:#858585;-webkit-text-stroke:.3px #858585">25</div>
<div class="a t" style="left:587px;top:1144.5px;font:25px/25px 'Liberation Mono',monospace;letter-spacing:-0.6px;-webkit-text-stroke:.3px"><span style="color:#d4d4d4">    </span><span style="color:#569cd6">const</span><span style="color:#d4d4d4"> </span><span style="color:#4fc1ff">result</span><span style="color:#d4d4d4"> = </span><span style="color:#179fff">{}</span><span style="color:#d4d4d4">;</span></div>
<div class="a t" style="left:440px;width:93px;text-align:right;top:1180.5px;font:25px/25px 'Liberation Mono',monospace;letter-spacing:-0.6px;color:#858585;-webkit-text-stroke:.3px #858585">26</div>
<div class="a t" style="left:587px;top:1180.5px;font:25px/25px 'Liberation Mono',monospace;letter-spacing:-0.6px;-webkit-text-stroke:.3px"><span style="color:#d4d4d4">    </span><span style="color:#c586c0">for</span><span style="color:#d4d4d4"> </span><span style="color:#179fff">(</span><span style="color:#569cd6">const</span><span style="color:#d4d4d4"> </span><span style="color:#4fc1ff">key</span><span style="color:#d4d4d4"> </span><span style="color:#569cd6">in</span><span style="color:#d4d4d4"> </span><span style="color:#9cdcfe">data</span><span style="color:#179fff">)</span><span style="color:#d4d4d4"> </span><span style="color:#179fff">{</span></div>
<div class="a t" style="left:440px;width:93px;text-align:right;top:1216.5px;font:25px/25px 'Liberation Mono',monospace;letter-spacing:-0.6px;color:#858585;-webkit-text-stroke:.3px #858585">27</div>
<div class="a t" style="left:587px;top:1216.5px;font:25px/25px 'Liberation Mono',monospace;letter-spacing:-0.6px;-webkit-text-stroke:.3px"><span style="color:#d4d4d4">      </span><span style="color:#4fc1ff">result</span><span style="color:#ffd700">[</span><span style="color:#4fc1ff">key</span><span style="color:#ffd700">]</span><span style="color:#d4d4d4"> = </span><span style="color:#dcdcaa">convertBigIntToNumber</span><span style="color:#ffd700">(</span><span style="color:#9cdcfe">data</span><span style="color:#da70d6">[</span><span style="color:#4fc1ff">key</span><span style="color:#da70d6">]</span><span style="color:#ffd700">)</span><span style="color:#d4d4d4">;</span></div>
<div class="a t" style="left:440px;width:93px;text-align:right;top:1252.5px;font:25px/25px 'Liberation Mono',monospace;letter-spacing:-0.6px;color:#858585;-webkit-text-stroke:.3px #858585">28</div>
<div class="a t" style="left:587px;top:1252.5px;font:25px/25px 'Liberation Mono',monospace;letter-spacing:-0.6px;-webkit-text-stroke:.3px"><span style="color:#d4d4d4">    </span><span style="color:#179fff">}</span></div>
<div class="a t" style="left:440px;width:93px;text-align:right;top:1288.5px;font:25px/25px 'Liberation Mono',monospace;letter-spacing:-0.6px;color:#858585;-webkit-text-stroke:.3px #858585">29</div>
<div class="a t" style="left:587px;top:1288.5px;font:25px/25px 'Liberation Mono',monospace;letter-spacing:-0.6px;-webkit-text-stroke:.3px"><span style="color:#d4d4d4">    </span><span style="color:#c586c0">return</span><span style="color:#d4d4d4"> </span><span style="color:#4fc1ff">result</span><span style="color:#d4d4d4">;</span></div>
<div class="a t" style="left:440px;width:93px;text-align:right;top:1324.5px;font:25px/25px 'Liberation Mono',monospace;letter-spacing:-0.6px;color:#858585;-webkit-text-stroke:.3px #858585">30</div>
<div class="a t" style="left:587px;top:1324.5px;font:25px/25px 'Liberation Mono',monospace;letter-spacing:-0.6px;-webkit-text-stroke:.3px"><span style="color:#d4d4d4">  </span><span style="color:#da70d6">}</span></div>
<div class="a t" style="left:440px;width:93px;text-align:right;top:1360.5px;font:25px/25px 'Liberation Mono',monospace;letter-spacing:-0.6px;color:#858585;-webkit-text-stroke:.3px #858585">31</div>
<div class="a t" style="left:440px;width:93px;text-align:right;top:1396.5px;font:25px/25px 'Liberation Mono',monospace;letter-spacing:-0.6px;color:#858585;-webkit-text-stroke:.3px #858585">32</div>
<div class="a t" style="left:587px;top:1396.5px;font:25px/25px 'Liberation Mono',monospace;letter-spacing:-0.6px;-webkit-text-stroke:.3px"><span style="color:#d4d4d4">  </span><span style="color:#c586c0">return</span><span style="color:#d4d4d4"> </span><span style="color:#9cdcfe">data</span><span style="color:#d4d4d4">;</span></div>
<div class="a t" style="left:440px;width:93px;text-align:right;top:1432.5px;font:25px/25px 'Liberation Mono',monospace;letter-spacing:-0.6px;color:#c6c6c6;-webkit-text-stroke:.3px #c6c6c6">33</div>
<div class="a t" style="left:587px;top:1432.5px;font:25px/25px 'Liberation Mono',monospace;letter-spacing:-0.6px;-webkit-text-stroke:.3px"><span style="color:#ffd700">}</span></div>
<div class="a t" style="left:440px;width:93px;text-align:right;top:1468.5px;font:25px/25px 'Liberation Mono',monospace;letter-spacing:-0.6px;color:#858585;-webkit-text-stroke:.3px #858585">34</div>
<div class="a t" style="left:440px;width:93px;text-align:right;top:1504.5px;font:25px/25px 'Liberation Mono',monospace;letter-spacing:-0.6px;color:#858585;-webkit-text-stroke:.3px #858585">35</div>
<div class="a t" style="left:587px;top:1504.5px;font:25px/25px 'Liberation Mono',monospace;letter-spacing:-0.6px;-webkit-text-stroke:.3px"><span style="color:#6a9955">/**</span></div>
<div class="a t" style="left:440px;width:93px;text-align:right;top:1540.5px;font:25px/25px 'Liberation Mono',monospace;letter-spacing:-0.6px;color:#858585;-webkit-text-stroke:.3px #858585">36</div>
<div class="a t" style="left:587px;top:1540.5px;font:25px/25px 'Liberation Mono',monospace;letter-spacing:-0.6px;-webkit-text-stroke:.3px"><span style="color:#6a9955"> * Analytics Service</span></div>
<div class="a t" style="left:440px;width:93px;text-align:right;top:1576.5px;font:25px/25px 'Liberation Mono',monospace;letter-spacing:-0.6px;color:#858585;-webkit-text-stroke:.3px #858585">37</div>
<div class="a t" style="left:587px;top:1576.5px;font:25px/25px 'Liberation Mono',monospace;letter-spacing:-0.6px;-webkit-text-stroke:.3px"><span style="color:#6a9955"> * Provides methods for tracking and retrieving user activity and sessions</span></div>
<div class="a t" style="left:440px;width:93px;text-align:right;top:1612.5px;font:25px/25px 'Liberation Mono',monospace;letter-spacing:-0.6px;color:#858585;-webkit-text-stroke:.3px #858585">38</div>
<div class="a t" style="left:587px;top:1612.5px;font:25px/25px 'Liberation Mono',monospace;letter-spacing:-0.6px;-webkit-text-stroke:.3px"><span style="color:#6a9955"> */</span></div>
<div class="a t" style="left:440px;width:93px;text-align:right;top:1648.5px;font:25px/25px 'Liberation Mono',monospace;letter-spacing:-0.6px;color:#858585;-webkit-text-stroke:.3px #858585">39</div>
<div class="a t" style="left:587px;top:1648.5px;font:25px/25px 'Liberation Mono',monospace;letter-spacing:-0.6px;-webkit-text-stroke:.3px"><span style="color:#569cd6">class</span><span style="color:#d4d4d4"> </span><span style="color:#4ec9b0">AnalyticsService</span><span style="color:#d4d4d4"> </span><span style="color:#ffd700">{</span></div>
<div class="a t" style="left:440px;width:93px;text-align:right;top:1684.5px;font:25px/25px 'Liberation Mono',monospace;letter-spacing:-0.6px;color:#858585;-webkit-text-stroke:.3px #858585">40</div>
<div class="a t" style="left:587px;top:1684.5px;font:25px/25px 'Liberation Mono',monospace;letter-spacing:-0.6px;-webkit-text-stroke:.3px"><span style="color:#d4d4d4">  </span><span style="color:#6a9955">/**</span></div>
<div class="a t" style="left:440px;width:93px;text-align:right;top:1720.5px;font:25px/25px 'Liberation Mono',monospace;letter-spacing:-0.6px;color:#858585;-webkit-text-stroke:.3px #858585">41</div>
<div class="a" style="left:948.0px;top:340px;width:3px;height:3px;background:#9a9a9a;"></div>
<div class="a" style="left:953.0px;top:340px;width:3px;height:3px;background:#9a9a9a;"></div>
<div class="a" style="left:958.0px;top:340px;width:3px;height:3px;background:#9a9a9a;"></div>
</div></div>
<div class="a" style="left:586px;top:1694px;width:854px;height:24px;background:rgba(121,121,121,.4);"></div>
<div class="a" style="left:1590px;top:276px;width:156px;height:1442px;background:#1e1e1e;"></div>
<div class="a" style="left:1589px;top:276px;width:4px;height:1442px;background:linear-gradient(90deg,#121212,#1e1e1e)"></div>
<div class="a" style="left:1598px;top:275px;width:148px;height:1443px;overflow:hidden"><div class="a" style="left:0;top:0;white-space:pre;font:bold 10px/12px 'Liberation Mono',monospace;transform:scale(0.3333);transform-origin:0 0;width:900px"><span style="color:#6a9955">// server/services/analyticsService.js</span>
<span style="color:#569cd6">const</span><span style="color:#d4d4d4"> </span><span style="color:#ffd700">{</span><span style="color:#d4d4d4"> </span><span style="color:#4ec9b0">PrismaClient</span><span style="color:#d4d4d4"> </span><span style="color:#ffd700">}</span><span style="color:#d4d4d4"> </span><span style="color:#d4d4d4">=</span><span style="color:#d4d4d4"> </span><span style="color:#dcdcaa">require</span><span style="color:#ffd700">(</span><span style="color:#ce9178">&#x27;@prisma/client&#x27;</span><span style="color:#ffd700">)</span><span style="color:#d4d4d4">;</span>
<span style="color:#569cd6">const</span><span style="color:#d4d4d4"> </span><span style="color:#9cdcfe">prisma</span><span style="color:#d4d4d4"> </span><span style="color:#d4d4d4">=</span><span style="color:#d4d4d4"> </span><span style="color:#569cd6">new</span><span style="color:#d4d4d4"> </span><span style="color:#dcdcaa">PrismaClient</span><span style="color:#ffd700">(</span><span style="color:#ffd700">)</span><span style="color:#d4d4d4">;</span>

<span style="color:#6a9955">/**</span>
<span style="color:#6a9955"> * Utility function to convert BigInt values to regular numbers</span>
<span style="color:#6a9955"> * This is needed because JSON.stringify cannot serialize BigInt</span>
<span style="color:#6a9955"> * </span><span style="color:#569cd6">@param</span><span style="color:#6a9955"> </span><span style="color:#ffd700">{</span><span style="color:#4ec9b0">any</span><span style="color:#ffd700">}</span><span style="color:#6a9955"> data - The data to convert</span>
<span style="color:#6a9955"> * </span><span style="color:#569cd6">@returns</span><span style="color:#6a9955"> </span><span style="color:#ffd700">{</span><span style="color:#4ec9b0">any</span><span style="color:#ffd700">}</span><span style="color:#6a9955"> - The converted data</span>
<span style="color:#6a9955"> */</span>
<span style="color:#569cd6">function</span><span style="color:#d4d4d4"> </span><span style="color:#dcdcaa">convertBigIntToNumber</span><span style="color:#ffd700">(</span><span style="color:#9cdcfe">data</span><span style="color:#ffd700">)</span><span style="color:#d4d4d4"> </span><span style="color:#ffd700">{</span>
<span style="color:#d4d4d4">  </span><span style="color:#c586c0">if</span><span style="color:#d4d4d4"> </span><span style="color:#da70d6">(</span><span style="color:#9cdcfe">data</span><span style="color:#d4d4d4"> </span><span style="color:#d4d4d4">=</span><span style="color:#d4d4d4">=</span><span style="color:#d4d4d4">=</span><span style="color:#d4d4d4"> </span><span style="color:#569cd6">null</span><span style="color:#d4d4d4"> </span><span style="color:#d4d4d4">|</span><span style="color:#d4d4d4">|</span><span style="color:#d4d4d4"> </span><span style="color:#9cdcfe">data</span><span style="color:#d4d4d4"> </span><span style="color:#d4d4d4">=</span><span style="color:#d4d4d4">=</span><span style="color:#d4d4d4">=</span><span style="color:#d4d4d4"> </span><span style="color:#569cd6">undefined</span><span style="color:#da70d6">)</span><span style="color:#d4d4d4"> </span><span style="color:#da70d6">{</span>
<span style="color:#d4d4d4">    </span><span style="color:#c586c0">return</span><span style="color:#d4d4d4"> </span><span style="color:#9cdcfe">data</span><span style="color:#d4d4d4">;</span>
<span style="color:#d4d4d4">  </span><span style="color:#da70d6">}</span>

<span style="color:#d4d4d4">  </span><span style="color:#c586c0">if</span><span style="color:#d4d4d4"> </span><span style="color:#da70d6">(</span><span style="color:#569cd6">typeof</span><span style="color:#d4d4d4"> </span><span style="color:#9cdcfe">data</span><span style="color:#d4d4d4"> </span><span style="color:#d4d4d4">=</span><span style="color:#d4d4d4">=</span><span style="color:#d4d4d4">=</span><span style="color:#d4d4d4"> </span><span style="color:#ce9178">&#x27;bigint&#x27;</span><span style="color:#da70d6">)</span><span style="color:#d4d4d4"> </span><span style="color:#da70d6">{</span>
<span style="color:#d4d4d4">    </span><span style="color:#c586c0">return</span><span style="color:#d4d4d4"> </span><span style="color:#dcdcaa">Number</span><span style="color:#179fff">(</span><span style="color:#9cdcfe">data</span><span style="color:#179fff">)</span><span style="color:#d4d4d4">;</span>
<span style="color:#d4d4d4">  </span><span style="color:#da70d6">}</span>

<span style="color:#d4d4d4">  </span><span style="color:#c586c0">if</span><span style="color:#d4d4d4"> </span><span style="color:#da70d6">(</span><span style="color:#4ec9b0">Array</span><span style="color:#d4d4d4">.</span><span style="color:#dcdcaa">isArray</span><span style="color:#179fff">(</span><span style="color:#9cdcfe">data</span><span style="color:#179fff">)</span><span style="color:#da70d6">)</span><span style="color:#d4d4d4"> </span><span style="color:#da70d6">{</span>
<span style="color:#d4d4d4">    </span><span style="color:#c586c0">return</span><span style="color:#d4d4d4"> </span><span style="color:#9cdcfe">data</span><span style="color:#d4d4d4">.</span><span style="color:#dcdcaa">map</span><span style="color:#179fff">(</span><span style="color:#9cdcfe">item</span><span style="color:#d4d4d4"> </span><span style="color:#d4d4d4">=</span><span style="color:#d4d4d4">&gt;</span><span style="color:#d4d4d4"> </span><span style="color:#dcdcaa">convertBigIntToNumber</span><span style="color:#ffd700">(</span><span style="color:#9cdcfe">item</span><span style="color:#ffd700">)</span><span style="color:#179fff">)</span><span style="color:#d4d4d4">;</span>
<span style="color:#d4d4d4">  </span><span style="color:#da70d6">}</span>

<span style="color:#d4d4d4">  </span><span style="color:#c586c0">if</span><span style="color:#d4d4d4"> </span><span style="color:#da70d6">(</span><span style="color:#569cd6">typeof</span><span style="color:#d4d4d4"> </span><span style="color:#9cdcfe">data</span><span style="color:#d4d4d4"> </span><span style="color:#d4d4d4">=</span><span style="color:#d4d4d4">=</span><span style="color:#d4d4d4">=</span><span style="color:#d4d4d4"> </span><span style="color:#ce9178">&#x27;object&#x27;</span><span style="color:#da70d6">)</span><span style="color:#d4d4d4"> </span><span style="color:#da70d6">{</span>
<span style="color:#d4d4d4">    </span><span style="color:#569cd6">const</span><span style="color:#d4d4d4"> </span><span style="color:#9cdcfe">result</span><span style="color:#d4d4d4"> </span><span style="color:#d4d4d4">=</span><span style="color:#d4d4d4"> </span><span style="color:#179fff">{</span><span style="color:#179fff">}</span><span style="color:#d4d4d4">;</span>
<span style="color:#d4d4d4">    </span><span style="color:#c586c0">for</span><span style="color:#d4d4d4"> </span><span style="color:#179fff">(</span><span style="color:#569cd6">const</span><span style="color:#d4d4d4"> </span><span style="color:#9cdcfe">key</span><span style="color:#d4d4d4"> </span><span style="color:#569cd6">in</span><span style="color:#d4d4d4"> </span><span style="color:#9cdcfe">data</span><span style="color:#179fff">)</span><span style="color:#d4d4d4"> </span><span style="color:#179fff">{</span>
<span style="color:#d4d4d4">      </span><span style="color:#9cdcfe">result</span><span style="color:#ffd700">[</span><span style="color:#9cdcfe">key</span><span style="color:#ffd700">]</span><span style="color:#d4d4d4"> </span><span style="color:#d4d4d4">=</span><span style="color:#d4d4d4"> </span><span style="color:#dcdcaa">convertBigIntToNumber</span><span style="color:#ffd700">(</span><span style="color:#9cdcfe">data</span><span style="color:#da70d6">[</span><span style="color:#9cdcfe">key</span><span style="color:#da70d6">]</span><span style="color:#ffd700">)</span><span style="color:#d4d4d4">;</span>
<span style="color:#d4d4d4">    </span><span style="color:#179fff">}</span>
<span style="color:#d4d4d4">    </span><span style="color:#c586c0">return</span><span style="color:#d4d4d4"> </span><span style="color:#9cdcfe">result</span><span style="color:#d4d4d4">;</span>
<span style="color:#d4d4d4">  </span><span style="color:#da70d6">}</span>

<span style="color:#d4d4d4">  </span><span style="color:#c586c0">return</span><span style="color:#d4d4d4"> </span><span style="color:#9cdcfe">data</span><span style="color:#d4d4d4">;</span>
<span style="color:#ffd700">}</span>

<span style="color:#6a9955">/**</span>
<span style="color:#6a9955"> * Analytics Service</span>
<span style="color:#6a9955"> * Provides methods for tracking and retrieving user activity and sessions</span>
<span style="color:#6a9955"> */</span>
<span style="color:#569cd6">class</span><span style="color:#d4d4d4"> </span><span style="color:#4ec9b0">AnalyticsService</span><span style="color:#d4d4d4"> </span><span style="color:#ffd700">{</span>
<span style="color:#6a9955">  /**</span>
<span style="color:#6a9955">   * Track a user activity</span>
<span style="color:#6a9955">   * </span><span style="color:#569cd6">@param</span><span style="color:#6a9955"> </span><span style="color:#ffd700">{</span><span style="color:#4ec9b0">number</span><span style="color:#ffd700">}</span><span style="color:#6a9955"> userId - The user ID</span>
<span style="color:#6a9955">   * </span><span style="color:#569cd6">@param</span><span style="color:#6a9955"> </span><span style="color:#ffd700">{</span><span style="color:#4ec9b0">string</span><span style="color:#ffd700">}</span><span style="color:#6a9955"> activityType - The type of activity (LOGIN, GAME_START, etc.)</span>
<span style="color:#6a9955">   * </span><span style="color:#569cd6">@param</span><span style="color:#6a9955"> </span><span style="color:#ffd700">{</span><span style="color:#4ec9b0">Object</span><span style="color:#ffd700">}</span><span style="color:#6a9955"> metadata - Additional data about the activity</span>
<span style="color:#6a9955">   * </span><span style="color:#569cd6">@returns</span><span style="color:#6a9955"> </span><span style="color:#ffd700">{</span><span style="color:#4ec9b0">Promise&lt;Object&gt;</span><span style="color:#ffd700">}</span><span style="color:#6a9955"> The created activity record</span>
<span style="color:#6a9955">   */</span>
<span style="color:#d4d4d4">  </span><span style="color:#569cd6">async</span><span style="color:#d4d4d4"> </span><span style="color:#dcdcaa">trackActivity</span><span style="color:#da70d6">(</span><span style="color:#9cdcfe">userId</span><span style="color:#d4d4d4">,</span><span style="color:#d4d4d4"> </span><span style="color:#9cdcfe">activityType</span><span style="color:#d4d4d4">,</span><span style="color:#d4d4d4"> </span><span style="color:#9cdcfe">metadata</span><span style="color:#d4d4d4"> </span><span style="color:#d4d4d4">=</span><span style="color:#d4d4d4"> </span><span style="color:#179fff">{</span><span style="color:#179fff">}</span><span style="color:#da70d6">)</span><span style="color:#d4d4d4"> </span><span style="color:#da70d6">{</span>
<span style="color:#d4d4d4">    </span><span style="color:#c586c0">try</span><span style="color:#d4d4d4"> </span><span style="color:#179fff">{</span>
<span style="color:#d4d4d4">      </span><span style="color:#c586c0">return</span><span style="color:#d4d4d4"> </span><span style="color:#c586c0">await</span><span style="color:#d4d4d4"> </span><span style="color:#9cdcfe">prisma</span><span style="color:#d4d4d4">.</span><span style="color:#9cdcfe">userActivity</span><span style="color:#d4d4d4">.</span><span style="color:#dcdcaa">create</span><span style="color:#ffd700">(</span><span style="color:#da70d6">{</span>
<span style="color:#d4d4d4">        </span><span style="color:#9cdcfe">data</span><span style="color:#d4d4d4">:</span><span style="color:#d4d4d4"> </span><span style="color:#179fff">{</span>
<span style="color:#d4d4d4">          </span><span style="color:#9cdcfe">userId</span><span style="color:#d4d4d4">,</span>
<span style="color:#d4d4d4">          </span><span style="color:#9cdcfe">activityType</span><span style="color:#d4d4d4">,</span>
<span style="color:#d4d4d4">          </span><span style="color:#9cdcfe">metadata</span><span style="color:#d4d4d4">,</span>
<span style="color:#d4d4d4">          </span><span style="color:#9cdcfe">timestamp</span><span style="color:#d4d4d4">:</span><span style="color:#d4d4d4"> </span><span style="color:#569cd6">new</span><span style="color:#d4d4d4"> </span><span style="color:#dcdcaa">Date</span><span style="color:#ffd700">(</span><span style="color:#ffd700">)</span>
<span style="color:#d4d4d4">        </span><span style="color:#179fff">}</span>
<span style="color:#d4d4d4">      </span><span style="color:#da70d6">}</span><span style="color:#ffd700">)</span><span style="color:#d4d4d4">;</span>
<span style="color:#d4d4d4">    </span><span style="color:#179fff">}</span><span style="color:#d4d4d4"> </span><span style="color:#c586c0">catch</span><span style="color:#d4d4d4"> </span><span style="color:#179fff">(</span><span style="color:#9cdcfe">error</span><span style="color:#179fff">)</span><span style="color:#d4d4d4"> </span><span style="color:#179fff">{</span>
<span style="color:#d4d4d4">      </span><span style="color:#9cdcfe">console</span><span style="color:#d4d4d4">.</span><span style="color:#dcdcaa">error</span><span style="color:#ffd700">(</span><span style="color:#ce9178">&#x27;Error tracking activity:&#x27;</span><span style="color:#d4d4d4">,</span><span style="color:#d4d4d4"> </span><span style="color:#9cdcfe">error</span><span style="color:#ffd700">)</span><span style="color:#d4d4d4">;</span>
<span style="color:#6a9955">      // Don&#x27;t throw - we don&#x27;t want to break the app if analytics fails</span>
<span style="color:#d4d4d4">      </span><span style="color:#c586c0">return</span><span style="color:#d4d4d4"> </span><span style="color:#569cd6">null</span><span style="color:#d4d4d4">;</span>
<span style="color:#d4d4d4">    </span><span style="color:#179fff">}</span>
<span style="color:#d4d4d4">  </span><span style="color:#da70d6">}</span>

<span style="color:#6a9955">  /**</span>
<span style="color:#6a9955">   * Start a user session</span>
<span style="color:#6a9955">   * </span><span style="color:#569cd6">@param</span><span style="color:#6a9955"> </span><span style="color:#ffd700">{</span><span style="color:#4ec9b0">number</span><span style="color:#ffd700">}</span><span style="color:#6a9955"> userId - The user ID</span>
<span style="color:#6a9955">   * </span><span style="color:#569cd6">@param</span><span style="color:#6a9955"> </span><span style="color:#ffd700">{</span><span style="color:#4ec9b0">string</span><span style="color:#ffd700">}</span><span style="color:#6a9955"> ipAddress - The user&#x27;s IP address</span>
<span style="color:#6a9955">   * </span><span style="color:#569cd6">@param</span><span style="color:#6a9955"> </span><span style="color:#ffd700">{</span><span style="color:#4ec9b0">string</span><span style="color:#ffd700">}</span><span style="color:#6a9955"> userAgent - The user&#x27;s browser/device info</span>
<span style="color:#6a9955">   * </span><span style="color:#569cd6">@returns</span><span style="color:#6a9955"> </span><span style="color:#ffd700">{</span><span style="color:#4ec9b0">Promise&lt;Object&gt;</span><span style="color:#ffd700">}</span><span style="color:#6a9955"> The created session record</span>
<span style="color:#6a9955">   */</span>
<span style="color:#d4d4d4">  </span><span style="color:#569cd6">async</span><span style="color:#d4d4d4"> </span><span style="color:#dcdcaa">startSession</span><span style="color:#da70d6">(</span><span style="color:#9cdcfe">userId</span><span style="color:#d4d4d4">,</span><span style="color:#d4d4d4"> </span><span style="color:#9cdcfe">ipAddress</span><span style="color:#d4d4d4">,</span><span style="color:#d4d4d4"> </span><span style="color:#9cdcfe">userAgent</span><span style="color:#da70d6">)</span><span style="color:#d4d4d4"> </span><span style="color:#da70d6">{</span>
<span style="color:#d4d4d4">    </span><span style="color:#c586c0">try</span><span style="color:#d4d4d4"> </span><span style="color:#179fff">{</span>
<span style="color:#d4d4d4">      </span><span style="color:#c586c0">return</span><span style="color:#d4d4d4"> </span><span style="color:#c586c0">await</span><span style="color:#d4d4d4"> </span><span style="color:#9cdcfe">prisma</span><span style="color:#d4d4d4">.</span><span style="color:#9cdcfe">userSession</span><span style="color:#d4d4d4">.</span><span style="color:#dcdcaa">create</span><span style="color:#ffd700">(</span><span style="color:#da70d6">{</span>
<span style="color:#d4d4d4">        </span><span style="color:#9cdcfe">data</span><span style="color:#d4d4d4">:</span><span style="color:#d4d4d4"> </span><span style="color:#179fff">{</span>
<span style="color:#d4d4d4">          </span><span style="color:#9cdcfe">userId</span><span style="color:#d4d4d4">,</span>
<span style="color:#d4d4d4">          </span><span style="color:#9cdcfe">ipAddress</span><span style="color:#d4d4d4">,</span>
<span style="color:#d4d4d4">          </span><span style="color:#9cdcfe">deviceInfo</span><span style="color:#d4d4d4">:</span><span style="color:#d4d4d4"> </span><span style="color:#9cdcfe">userAgent</span><span style="color:#d4d4d4">,</span>
<span style="color:#d4d4d4">          </span><span style="color:#9cdcfe">startTime</span><span style="color:#d4d4d4">:</span><span style="color:#d4d4d4"> </span><span style="color:#569cd6">new</span><span style="color:#d4d4d4"> </span><span style="color:#dcdcaa">Date</span><span style="color:#ffd700">(</span><span style="color:#ffd700">)</span>
<span style="color:#d4d4d4">        </span><span style="color:#179fff">}</span>
<span style="color:#d4d4d4">      </span><span style="color:#da70d6">}</span><span style="color:#ffd700">)</span><span style="color:#d4d4d4">;</span>
<span style="color:#d4d4d4">    </span><span style="color:#179fff">}</span><span style="color:#d4d4d4"> </span><span style="color:#c586c0">catch</span><span style="color:#d4d4d4"> </span><span style="color:#179fff">(</span><span style="color:#9cdcfe">error</span><span style="color:#179fff">)</span><span style="color:#d4d4d4"> </span><span style="color:#179fff">{</span>
<span style="color:#d4d4d4">      </span><span style="color:#9cdcfe">console</span><span style="color:#d4d4d4">.</span><span style="color:#dcdcaa">error</span><span style="color:#ffd700">(</span><span style="color:#ce9178">&#x27;Error starting session:&#x27;</span><span style="color:#d4d4d4">,</span><span style="color:#d4d4d4"> </span><span style="color:#9cdcfe">error</span><span style="color:#ffd700">)</span><span style="color:#d4d4d4">;</span>
<span style="color:#d4d4d4">      </span><span style="color:#c586c0">return</span><span style="color:#d4d4d4"> </span><span style="color:#569cd6">null</span><span style="color:#d4d4d4">;</span>
<span style="color:#d4d4d4">    </span><span style="color:#179fff">}</span>
<span style="color:#d4d4d4">  </span><span style="color:#da70d6">}</span>

<span style="color:#6a9955">  /**</span>
<span style="color:#6a9955">   * End a user session</span>
<span style="color:#6a9955">   * </span><span style="color:#569cd6">@param</span><span style="color:#6a9955"> </span><span style="color:#ffd700">{</span><span style="color:#4ec9b0">number</span><span style="color:#ffd700">}</span><span style="color:#6a9955"> sessionId - The session ID</span>
<span style="color:#6a9955">   * </span><span style="color:#569cd6">@returns</span><span style="color:#6a9955"> </span><span style="color:#ffd700">{</span><span style="color:#4ec9b0">Promise&lt;Object&gt;</span><span style="color:#ffd700">}</span><span style="color:#6a9955"> The updated session record</span>
<span style="color:#6a9955">   */</span>
<span style="color:#d4d4d4">  </span><span style="color:#569cd6">async</span><span style="color:#d4d4d4"> </span><span style="color:#dcdcaa">endSession</span><span style="color:#da70d6">(</span><span style="color:#9cdcfe">sessionId</span><span style="color:#da70d6">)</span><span style="color:#d4d4d4"> </span><span style="color:#da70d6">{</span>
<span style="color:#d4d4d4">    </span><span style="color:#c586c0">try</span><span style="color:#d4d4d4"> </span><span style="color:#179fff">{</span>
<span style="color:#d4d4d4">      </span><span style="color:#569cd6">const</span><span style="color:#d4d4d4"> </span><span style="color:#9cdcfe">session</span><span style="color:#d4d4d4"> </span><span style="color:#d4d4d4">=</span><span style="color:#d4d4d4"> </span><span style="color:#c586c0">await</span><span style="color:#d4d4d4"> </span><span style="color:#9cdcfe">prisma</span><span style="color:#d4d4d4">.</span><span style="color:#9cdcfe">userSession</span><span style="color:#d4d4d4">.</span><span style="color:#dcdcaa">findUnique</span><span style="color:#ffd700">(</span><span style="color:#da70d6">{</span>
<span style="color:#d4d4d4">        </span><span style="color:#9cdcfe">where</span><span style="color:#d4d4d4">:</span><span style="color:#d4d4d4"> </span><span style="color:#179fff">{</span><span style="color:#d4d4d4"> </span><span style="color:#9cdcfe">id</span><span style="color:#d4d4d4">:</span><span style="color:#d4d4d4"> </span><span style="color:#9cdcfe">sessionId</span><span style="color:#d4d4d4"> </span><span style="color:#179fff">}</span>
<span style="color:#d4d4d4">      </span><span style="color:#da70d6">}</span><span style="color:#ffd700">)</span><span style="color:#d4d4d4">;</span>

<span style="color:#d4d4d4">      </span><span style="color:#c586c0">if</span><span style="color:#d4d4d4"> </span><span style="color:#ffd700">(</span><span style="color:#d4d4d4">!</span><span style="color:#9cdcfe">session</span><span style="color:#ffd700">)</span><span style="color:#d4d4d4"> </span><span style="color:#ffd700">{</span>
<span style="color:#d4d4d4">        </span><span style="color:#c586c0">return</span><span style="color:#d4d4d4"> </span><span style="color:#569cd6">null</span><span style="color:#d4d4d4">;</span>
<span style="color:#d4d4d4">      </span><span style="color:#ffd700">}</span>

<span style="color:#d4d4d4">      </span><span style="color:#569cd6">const</span><span style="color:#d4d4d4"> </span><span style="color:#9cdcfe">endTime</span><span style="color:#d4d4d4"> </span><span style="color:#d4d4d4">=</span><span style="color:#d4d4d4"> </span><span style="color:#569cd6">new</span><span style="color:#d4d4d4"> </span><span style="color:#dcdcaa">Date</span><span style="color:#ffd700">(</span><span style="color:#ffd700">)</span><span style="color:#d4d4d4">;</span>
<span style="color:#d4d4d4">      </span><span style="color:#569cd6">const</span><span style="color:#d4d4d4"> </span><span style="color:#9cdcfe">durationSeconds</span><span style="color:#d4d4d4"> </span><span style="color:#d4d4d4">=</span><span style="color:#d4d4d4"> </span><span style="color:#4ec9b0">Math</span><span style="color:#d4d4d4">.</span><span style="color:#dcdcaa">floor</span><span style="color:#ffd700">(</span>
<span style="color:#d4d4d4">        </span><span style="color:#da70d6">(</span><span style="color:#9cdcfe">endTime</span><span style="color:#d4d4d4"> </span><span style="color:#d4d4d4">-</span><span style="color:#d4d4d4"> </span><span style="color:#9cdcfe">session</span><span style="color:#d4d4d4">.</span><span style="color:#9cdcfe">startTime</span><span style="color:#da70d6">)</span><span style="color:#d4d4d4"> </span><span style="color:#d4d4d4">/</span><span style="color:#d4d4d4"> </span><span style="color:#d4d4d4">1</span><span style="color:#d4d4d4">0</span><span style="color:#d4d4d4">0</span><span style="color:#d4d4d4">0</span>
<span style="color:#d4d4d4">      </span><span style="color:#ffd700">)</span><span style="color:#d4d4d4">;</span>

<span style="color:#d4d4d4">      </span><span style="color:#c586c0">return</span><span style="color:#d4d4d4"> </span><span style="color:#c586c0">await</span><span style="color:#d4d4d4"> </span><span style="color:#9cdcfe">prisma</span><span style="color:#d4d4d4">.</span><span style="color:#9cdcfe">userSession</span><span style="color:#d4d4d4">.</span><span style="color:#dcdcaa">update</span><span style="color:#ffd700">(</span><span style="color:#da70d6">{</span>
<span style="color:#d4d4d4">        </span><span style="color:#9cdcfe">where</span><span style="color:#d4d4d4">:</span><span style="color:#d4d4d4"> </span><span style="color:#179fff">{</span><span style="color:#d4d4d4"> </span><span style="color:#9cdcfe">id</span><span style="color:#d4d4d4">:</span><span style="color:#d4d4d4"> </span><span style="color:#9cdcfe">sessionId</span><span style="color:#d4d4d4"> </span><span style="color:#179fff">}</span><span style="color:#d4d4d4">,</span>
<span style="color:#d4d4d4">        </span><span style="color:#9cdcfe">data</span><span style="color:#d4d4d4">:</span><span style="color:#d4d4d4"> </span><span style="color:#179fff">{</span>
<span style="color:#d4d4d4">          </span><span style="color:#9cdcfe">endTime</span><span style="color:#d4d4d4">,</span>
<span style="color:#d4d4d4">          </span><span style="color:#9cdcfe">durationSeconds</span>
<span style="color:#d4d4d4">        </span><span style="color:#179fff">}</span>
<span style="color:#d4d4d4">      </span><span style="color:#da70d6">}</span><span style="color:#ffd700">)</span><span style="color:#d4d4d4">;</span>
<span style="color:#d4d4d4">    </span><span style="color:#179fff">}</span><span style="color:#d4d4d4"> </span><span style="color:#c586c0">catch</span><span style="color:#d4d4d4"> </span><span style="color:#179fff">(</span><span style="color:#9cdcfe">error</span><span style="color:#179fff">)</span><span style="color:#d4d4d4"> </span><span style="color:#179fff">{</span>
<span style="color:#d4d4d4">      </span><span style="color:#9cdcfe">console</span><span style="color:#d4d4d4">.</span><span style="color:#dcdcaa">error</span><span style="color:#ffd700">(</span><span style="color:#ce9178">&#x27;Error ending session:&#x27;</span><span style="color:#d4d4d4">,</span><span style="color:#d4d4d4"> </span><span style="color:#9cdcfe">error</span><span style="color:#ffd700">)</span><span style="color:#d4d4d4">;</span>
<span style="color:#d4d4d4">      </span><span style="color:#c586c0">return</span><span style="color:#d4d4d4"> </span><span style="color:#569cd6">null</span><span style="color:#d4d4d4">;</span>
<span style="color:#d4d4d4">    </span><span style="color:#179fff">}</span>
<span style="color:#d4d4d4">  </span><span style="color:#da70d6">}</span>

<span style="color:#6a9955">  /**</span>
<span style="color:#6a9955">   * Get daily active users</span>
<span style="color:#6a9955">   * </span><span style="color:#569cd6">@param</span><span style="color:#6a9955"> </span><span style="color:#ffd700">{</span><span style="color:#4ec9b0">Date</span><span style="color:#ffd700">}</span><span style="color:#6a9955"> startDate - Start date for the query</span>
<span style="color:#6a9955">   * </span><span style="color:#569cd6">@param</span><span style="color:#6a9955"> </span><span style="color:#ffd700">{</span><span style="color:#4ec9b0">Date</span><span style="color:#ffd700">}</span><span style="color:#6a9955"> endDate - End date for the query</span>
<span style="color:#6a9955">   * </span><span style="color:#569cd6">@returns</span><span style="color:#6a9955"> </span><span style="color:#ffd700">{</span><span style="color:#4ec9b0">Promise&lt;Array&gt;</span><span style="color:#ffd700">}</span><span style="color:#6a9955"> Daily active users data</span>
<span style="color:#6a9955">   */</span>
<span style="color:#d4d4d4">  </span><span style="color:#569cd6">async</span><span style="color:#d4d4d4"> </span><span style="color:#dcdcaa">getDailyActiveUsers</span><span style="color:#da70d6">(</span><span style="color:#9cdcfe">startDate</span><span style="color:#d4d4d4">,</span><span style="color:#d4d4d4"> </span><span style="color:#9cdcfe">endDate</span><span style="color:#da70d6">)</span><span style="color:#d4d4d4"> </span><span style="color:#da70d6">{</span>
<span style="color:#d4d4d4">    </span><span style="color:#c586c0">try</span><span style="color:#d4d4d4"> </span><span style="color:#179fff">{</span>
<span style="color:#6a9955">      // Format dates for SQL query</span>
<span style="color:#d4d4d4">      </span><span style="color:#569cd6">const</span><span style="color:#d4d4d4"> </span><span style="color:#9cdcfe">formattedStartDate</span><span style="color:#d4d4d4"> </span><span style="color:#d4d4d4">=</span><span style="color:#d4d4d4"> </span><span style="color:#9cdcfe">startDate</span><span style="color:#d4d4d4">.</span><span style="color:#dcdcaa">toISOString</span><span style="color:#ffd700">(</span><span style="color:#ffd700">)</span><span style="color:#d4d4d4">.</span><span style="color:#dcdcaa">split</span><span style="color:#ffd700">(</span><span style="color:#ce9178">&#x27;T&#x27;</span><span style="color:#ffd700">)</span><span style="color:#ffd700">[</span><span style="color:#d4d4d4">0</span><span style="color:#ffd700">]</span><span style="color:#d4d4d4">;</span>
<span style="color:#d4d4d4">      </span><span style="color:#569cd6">const</span><span style="color:#d4d4d4"> </span><span style="color:#9cdcfe">formattedEndDate</span><span style="color:#d4d4d4"> </span><span style="color:#d4d4d4">=</span><span style="color:#d4d4d4"> </span><span style="color:#9cdcfe">endDate</span><span style="color:#d4d4d4">.</span><span style="color:#dcdcaa">toISOString</span><span style="color:#ffd700">(</span><span style="color:#ffd700">)</span><span style="color:#d4d4d4">.</span><span style="color:#dcdcaa">split</span><span style="color:#ffd700">(</span><span style="color:#ce9178">&#x27;T&#x27;</span><span style="color:#ffd700">)</span><span style="color:#ffd700">[</span><span style="color:#d4d4d4">0</span><span style="color:#ffd700">]</span><span style="color:#d4d4d4">;</span>

<span style="color:#6a9955">      // Raw SQL query for daily active users with explicit date casting</span>
<span style="color:#d4d4d4">      </span><span style="color:#569cd6">const</span><span style="color:#d4d4d4"> </span><span style="color:#9cdcfe">result</span><span style="color:#d4d4d4"> </span><span style="color:#d4d4d4">=</span><span style="color:#d4d4d4"> </span><span style="color:#c586c0">await</span><span style="color:#d4d4d4"> </span><span style="color:#9cdcfe">prisma</span><span style="color:#d4d4d4">.</span><span style="color:#9cdcfe">$queryRaw</span><span style="color:#ce9178">`</span>
<span style="color:#ce9178">        SELECT</span>
<span style="color:#ce9178">          DATE(timestamp) as date,</span>
<span style="color:#ce9178">          COUNT(DISTINCT &quot;userId&quot;) as &quot;activeUsers&quot;</span>
<span style="color:#ce9178">        FROM &quot;UserActivity&quot;</span>
<span style="color:#ce9178">        WHERE DATE(timestamp) BETWEEN ${formattedStartDate}::date AND ${formattedEndDate}::date</span>
<span style="color:#ce9178">        GROUP BY DATE(timestamp)</span>
<span style="color:#ce9178">        ORDER BY date</span>
<span style="color:#ce9178">      `</span><span style="color:#d4d4d4">;</span>

<span style="color:#6a9955">      // Convert BigInt values to numbers before returning</span>
<span style="color:#d4d4d4">      </span><span style="color:#c586c0">return</span><span style="color:#d4d4d4"> </span><span style="color:#dcdcaa">convertBigIntToNumber</span><span style="color:#ffd700">(</span><span style="color:#9cdcfe">result</span><span style="color:#ffd700">)</span><span style="color:#d4d4d4">;</span>
<span style="color:#d4d4d4">    </span><span style="color:#179fff">}</span><span style="color:#d4d4d4"> </span><span style="color:#c586c0">catch</span><span style="color:#d4d4d4"> </span><span style="color:#179fff">(</span><span style="color:#9cdcfe">error</span><span style="color:#179fff">)</span><span style="color:#d4d4d4"> </span><span style="color:#179fff">{</span>
<span style="color:#d4d4d4">      </span><span style="color:#9cdcfe">console</span><span style="color:#d4d4d4">.</span><span style="color:#dcdcaa">error</span><span style="color:#ffd700">(</span><span style="color:#ce9178">&#x27;Error getting daily active users:&#x27;</span><span style="color:#d4d4d4">,</span><span style="color:#d4d4d4"> </span><span style="color:#9cdcfe">error</span><span style="color:#ffd700">)</span><span style="color:#d4d4d4">;</span>
<span style="color:#d4d4d4">      </span><span style="color:#c586c0">return</span><span style="color:#d4d4d4"> </span><span style="color:#ffd700">[</span><span style="color:#ffd700">]</span><span style="color:#d4d4d4">;</span>
<span style="color:#d4d4d4">    </span><span style="color:#179fff">}</span>
<span style="color:#d4d4d4">  </span><span style="color:#da70d6">}</span>

<span style="color:#6a9955">  /**</span>
<span style="color:#6a9955">   * Get monthly active users</span>
<span style="color:#6a9955">   * </span><span style="color:#569cd6">@param</span><span style="color:#6a9955"> </span><span style="color:#ffd700">{</span><span style="color:#4ec9b0">Date</span><span style="color:#ffd700">}</span><span style="color:#6a9955"> startDate - Start date for the query</span>
<span style="color:#6a9955">   * </span><span style="color:#569cd6">@param</span><span style="color:#6a9955"> </span><span style="color:#ffd700">{</span><span style="color:#4ec9b0">Date</span><span style="color:#ffd700">}</span><span style="color:#6a9955"> endDate - End date for the query</span>
<span style="color:#6a9955">   * </span><span style="color:#569cd6">@returns</span><span style="color:#6a9955"> </span><span style="color:#ffd700">{</span><span style="color:#4ec9b0">Promise&lt;Array&gt;</span><span style="color:#ffd700">}</span><span style="color:#6a9955"> Monthly active users data</span>
<span style="color:#6a9955">   */</span>
<span style="color:#d4d4d4">  </span><span style="color:#569cd6">async</span><span style="color:#d4d4d4"> </span><span style="color:#dcdcaa">getMonthlyActiveUsers</span><span style="color:#da70d6">(</span><span style="color:#9cdcfe">startDate</span><span style="color:#d4d4d4">,</span><span style="color:#d4d4d4"> </span><span style="color:#9cdcfe">endDate</span><span style="color:#da70d6">)</span><span style="color:#d4d4d4"> </span><span style="color:#da70d6">{</span>
<span style="color:#d4d4d4">    </span><span style="color:#c586c0">try</span><span style="color:#d4d4d4"> </span><span style="color:#179fff">{</span>
<span style="color:#6a9955">      // Format dates for SQL query</span>
<span style="color:#d4d4d4">      </span><span style="color:#569cd6">const</span><span style="color:#d4d4d4"> </span><span style="color:#9cdcfe">formattedStartDate</span><span style="color:#d4d4d4"> </span><span style="color:#d4d4d4">=</span><span style="color:#d4d4d4"> </span><span style="color:#9cdcfe">startDate</span><span style="color:#d4d4d4">.</span><span style="color:#dcdcaa">toISOString</span><span style="color:#ffd700">(</span><span style="color:#ffd700">)</span><span style="color:#d4d4d4">.</span><span style="color:#dcdcaa">split</span><span style="color:#ffd700">(</span><span style="color:#ce9178">&#x27;T&#x27;</span><span style="color:#ffd700">)</span><span style="color:#ffd700">[</span><span style="color:#d4d4d4">0</span><span style="color:#ffd700">]</span><span style="color:#d4d4d4">;</span>
<span style="color:#d4d4d4">      </span><span style="color:#569cd6">const</span><span style="color:#d4d4d4"> </span><span style="color:#9cdcfe">formattedEndDate</span><span style="color:#d4d4d4"> </span><span style="color:#d4d4d4">=</span><span style="color:#d4d4d4"> </span><span style="color:#9cdcfe">endDate</span><span style="color:#d4d4d4">.</span><span style="color:#dcdcaa">toISOString</span><span style="color:#ffd700">(</span><span style="color:#ffd700">)</span><span style="color:#d4d4d4">.</span><span style="color:#dcdcaa">split</span><span style="color:#ffd700">(</span><span style="color:#ce9178">&#x27;T&#x27;</span><span style="color:#ffd700">)</span><span style="color:#ffd700">[</span><span style="color:#d4d4d4">0</span><span style="color:#ffd700">]</span><span style="color:#d4d4d4">;</span>

<span style="color:#6a9955">      // Raw SQL query for monthly active users with explicit date casting</span>
<span style="color:#d4d4d4">      </span><span style="color:#569cd6">const</span><span style="color:#d4d4d4"> </span><span style="color:#9cdcfe">result</span><span style="color:#d4d4d4"> </span><span style="color:#d4d4d4">=</span><span style="color:#d4d4d4"> </span><span style="color:#c586c0">await</span><span style="color:#d4d4d4"> </span><span style="color:#9cdcfe">prisma</span><span style="color:#d4d4d4">.</span><span style="color:#9cdcfe">$queryRaw</span><span style="color:#ce9178">`</span>
<span style="color:#ce9178">        SELECT</span>
<span style="color:#ce9178">          DATE_TRUNC(&#x27;month&#x27;, timestamp) as month,</span>
<span style="color:#ce9178">          COUNT(DISTINCT &quot;userId&quot;) as &quot;activeUsers&quot;</span>
<span style="color:#ce9178">        FROM &quot;UserActivity&quot;</span>
<span style="color:#ce9178">        WHERE DATE(timestamp) BETWEEN ${formattedStartDate}::date AND ${formattedEndDate}::date</span>
<span style="color:#ce9178">        GROUP BY DATE_TRUNC(&#x27;month&#x27;, timestamp)</span>
<span style="color:#ce9178">        ORDER BY month</span>
<span style="color:#ce9178">      `</span><span style="color:#d4d4d4">;</span>

<span style="color:#6a9955">      // Convert BigInt values to numbers before returning</span>
<span style="color:#d4d4d4">      </span><span style="color:#c586c0">return</span><span style="color:#d4d4d4"> </span><span style="color:#dcdcaa">convertBigIntToNumber</span><span style="color:#ffd700">(</span><span style="color:#9cdcfe">result</span><span style="color:#ffd700">)</span><span style="color:#d4d4d4">;</span>
<span style="color:#d4d4d4">    </span><span style="color:#179fff">}</span><span style="color:#d4d4d4"> </span><span style="color:#c586c0">catch</span><span style="color:#d4d4d4"> </span><span style="color:#179fff">(</span><span style="color:#9cdcfe">error</span><span style="color:#179fff">)</span><span style="color:#d4d4d4"> </span><span style="color:#179fff">{</span>
<span style="color:#d4d4d4">      </span><span style="color:#9cdcfe">console</span><span style="color:#d4d4d4">.</span><span style="color:#dcdcaa">error</span><span style="color:#ffd700">(</span><span style="color:#ce9178">&#x27;Error getting monthly active users:&#x27;</span><span style="color:#d4d4d4">,</span><span style="color:#d4d4d4"> </span><span style="color:#9cdcfe">error</span><span style="color:#ffd700">)</span><span style="color:#d4d4d4">;</span>
<span style="color:#d4d4d4">      </span><span style="color:#c586c0">return</span><span style="color:#d4d4d4"> </span><span style="color:#ffd700">[</span><span style="color:#ffd700">]</span><span style="color:#d4d4d4">;</span>
<span style="color:#d4d4d4">    </span><span style="color:#179fff">}</span>
<span style="color:#d4d4d4">  </span><span style="color:#da70d6">}</span>

<span style="color:#6a9955">  /**</span>
<span style="color:#6a9955">   * Get activity breakdown</span>
<span style="color:#6a9955">   * </span><span style="color:#569cd6">@param</span><span style="color:#6a9955"> </span><span style="color:#ffd700">{</span><span style="color:#4ec9b0">Date</span><span style="color:#ffd700">}</span><span style="color:#6a9955"> startDate - Start date for the query</span>
<span style="color:#6a9955">   * </span><span style="color:#569cd6">@param</span><span style="color:#6a9955"> </span><span style="color:#ffd700">{</span><span style="color:#4ec9b0">Date</span><span style="color:#ffd700">}</span><span style="color:#6a9955"> endDate - End date for the query</span>
<span style="color:#6a9955">   * </span><span style="color:#569cd6">@returns</span><span style="color:#6a9955"> </span><span style="color:#ffd700">{</span><span style="color:#4ec9b0">Promise&lt;Array&gt;</span><span style="color:#ffd700">}</span><span style="color:#6a9955"> Activity breakdown data</span>
<span style="color:#6a9955">   */</span>
<span style="color:#d4d4d4">  </span><span style="color:#569cd6">async</span><span style="color:#d4d4d4"> </span><span style="color:#dcdcaa">getActivityBreakdown</span><span style="color:#da70d6">(</span><span style="color:#9cdcfe">startDate</span><span style="color:#d4d4d4">,</span><span style="color:#d4d4d4"> </span><span style="color:#9cdcfe">endDate</span><span style="color:#da70d6">)</span><span style="color:#d4d4d4"> </span><span style="color:#da70d6">{</span>
<span style="color:#d4d4d4">    </span><span style="color:#c586c0">try</span><span style="color:#d4d4d4"> </span><span style="color:#179fff">{</span>
<span style="color:#6a9955">      // Format dates for SQL query</span>
<span style="color:#d4d4d4">      </span><span style="color:#569cd6">const</span><span style="color:#d4d4d4"> </span><span style="color:#9cdcfe">formattedStartDate</span><span style="color:#d4d4d4"> </span><span style="color:#d4d4d4">=</span><span style="color:#d4d4d4"> </span><span style="color:#9cdcfe">startDate</span><span style="color:#d4d4d4">.</span><span style="color:#dcdcaa">toISOString</span><span style="color:#ffd700">(</span><span style="color:#ffd700">)</span><span style="color:#d4d4d4">.</span><span style="color:#dcdcaa">split</span><span style="color:#ffd700">(</span><span style="color:#ce9178">&#x27;T&#x27;</span><span style="color:#ffd700">)</span><span style="color:#ffd700">[</span><span style="color:#d4d4d4">0</span><span style="color:#ffd700">]</span><span style="color:#d4d4d4">;</span>
<span style="color:#d4d4d4">      </span><span style="color:#569cd6">const</span><span style="color:#d4d4d4"> </span><span style="color:#9cdcfe">formattedEndDate</span><span style="color:#d4d4d4"> </span><span style="color:#d4d4d4">=</span><span style="color:#d4d4d4"> </span><span style="color:#9cdcfe">endDate</span><span style="color:#d4d4d4">.</span><span style="color:#dcdcaa">toISOString</span><span style="color:#ffd700">(</span><span style="color:#ffd700">)</span><span style="color:#d4d4d4">.</span><span style="color:#dcdcaa">split</span><span style="color:#ffd700">(</span><span style="color:#ce9178">&#x27;T&#x27;</span><span style="color:#ffd700">)</span><span style="color:#ffd700">[</span><span style="color:#d4d4d4">0</span><span style="color:#ffd700">]</span><span style="color:#d4d4d4">;</span>

<span style="color:#6a9955">      // Raw SQL query for activity breakdown with explicit date casting</span>
<span style="color:#d4d4d4">      </span><span style="color:#569cd6">const</span><span style="color:#d4d4d4"> </span><span style="color:#9cdcfe">result</span><span style="color:#d4d4d4"> </span><span style="color:#d4d4d4">=</span><span style="color:#d4d4d4"> </span><span style="color:#c586c0">await</span><span style="color:#d4d4d4"> </span><span style="color:#9cdcfe">prisma</span><span style="color:#d4d4d4">.</span><span style="color:#9cdcfe">$queryRaw</span><span style="color:#ce9178">`</span>
<span style="color:#ce9178">        SELECT</span>
<span style="color:#ce9178">          &quot;activityType&quot;,</span>
<span style="color:#ce9178">          COUNT(*) as count</span>
<span style="color:#ce9178">        FROM &quot;UserActivity&quot;</span>
<span style="color:#ce9178">        WHERE DATE(timestamp) BETWEEN ${formattedStartDate}::date AND ${formattedEndDate}::date</span>
<span style="color:#ce9178">        GROUP BY &quot;activityType&quot;</span>
<span style="color:#ce9178">        ORDER BY count DESC</span>
<span style="color:#ce9178">      `</span><span style="color:#d4d4d4">;</span>

<span style="color:#6a9955">      // Convert BigInt values to numbers before returning</span>
<span style="color:#d4d4d4">      </span><span style="color:#c586c0">return</span><span style="color:#d4d4d4"> </span><span style="color:#dcdcaa">convertBigIntToNumber</span><span style="color:#ffd700">(</span><span style="color:#9cdcfe">result</span><span style="color:#ffd700">)</span><span style="color:#d4d4d4">;</span>
<span style="color:#d4d4d4">    </span><span style="color:#179fff">}</span><span style="color:#d4d4d4"> </span><span style="color:#c586c0">catch</span><span style="color:#d4d4d4"> </span><span style="color:#179fff">(</span><span style="color:#9cdcfe">error</span><span style="color:#179fff">)</span><span style="color:#d4d4d4"> </span><span style="color:#179fff">{</span>
<span style="color:#d4d4d4">      </span><span style="color:#9cdcfe">console</span><span style="color:#d4d4d4">.</span><span style="color:#dcdcaa">error</span><span style="color:#ffd700">(</span><span style="color:#ce9178">&#x27;Error getting activity breakdown:&#x27;</span><span style="color:#d4d4d4">,</span><span style="color:#d4d4d4"> </span><span style="color:#9cdcfe">error</span><span style="color:#ffd700">)</span><span style="color:#d4d4d4">;</span>
<span style="color:#d4d4d4">      </span><span style="color:#c586c0">return</span><span style="color:#d4d4d4"> </span><span style="color:#ffd700">[</span><span style="color:#ffd700">]</span><span style="color:#d4d4d4">;</span>
<span style="color:#d4d4d4">    </span><span style="color:#179fff">}</span>
<span style="color:#d4d4d4">  </span><span style="color:#da70d6">}</span>

<span style="color:#6a9955">  /**</span>
<span style="color:#6a9955">   * Get session statistics</span>
<span style="color:#6a9955">   * </span><span style="color:#569cd6">@param</span><span style="color:#6a9955"> </span><span style="color:#ffd700">{</span><span style="color:#4ec9b0">Date</span><span style="color:#ffd700">}</span><span style="color:#6a9955"> startDate - Start date for the query</span>
<span style="color:#6a9955">   * </span><span style="color:#569cd6">@param</span><span style="color:#6a9955"> </span><span style="color:#ffd700">{</span><span style="color:#4ec9b0">Date</span><span style="color:#ffd700">}</span><span style="color:#6a9955"> endDate - End date for the query</span>
<span style="color:#6a9955">   * </span><span style="color:#569cd6">@returns</span><span style="color:#6a9955"> </span><span style="color:#ffd700">{</span><span style="color:#4ec9b0">Promise&lt;Object&gt;</span><span style="color:#ffd700">}</span><span style="color:#6a9955"> Session statistics</span>
<span style="color:#6a9955">   */</span>
<span style="color:#d4d4d4">  </span><span style="color:#569cd6">async</span><span style="color:#d4d4d4"> </span><span style="color:#dcdcaa">getSessionStats</span><span style="color:#da70d6">(</span><span style="color:#9cdcfe">startDate</span><span style="color:#d4d4d4">,</span><span style="color:#d4d4d4"> </span><span style="color:#9cdcfe">endDate</span><span style="color:#da70d6">)</span><span style="color:#d4d4d4"> </span><span style="color:#da70d6">{</span>
<span style="color:#d4d4d4">    </span><span style="color:#c586c0">try</span><span style="color:#d4d4d4"> </span><span style="color:#179fff">{</span>
<span style="color:#6a9955">      // Format dates for SQL query</span>
<span style="color:#d4d4d4">      </span><span style="color:#569cd6">const</span><span style="color:#d4d4d4"> </span><span style="color:#9cdcfe">formattedStartDate</span><span style="color:#d4d4d4"> </span><span style="color:#d4d4d4">=</span><span style="color:#d4d4d4"> </span><span style="color:#9cdcfe">startDate</span><span style="color:#d4d4d4">.</span><span style="color:#dcdcaa">toISOString</span><span style="color:#ffd700">(</span><span style="color:#ffd700">)</span><span style="color:#d4d4d4">.</span><span style="color:#dcdcaa">split</span><span style="color:#ffd700">(</span><span style="color:#ce9178">&#x27;T&#x27;</span><span style="color:#ffd700">)</span><span style="color:#ffd700">[</span><span style="color:#d4d4d4">0</span><span style="color:#ffd700">]</span><span style="color:#d4d4d4">;</span>
<span style="color:#d4d4d4">      </span><span style="color:#569cd6">const</span><span style="color:#d4d4d4"> </span><span style="color:#9cdcfe">formattedEndDate</span><span style="color:#d4d4d4"> </span><span style="color:#d4d4d4">=</span><span style="color:#d4d4d4"> </span><span style="color:#9cdcfe">endDate</span><span style="color:#d4d4d4">.</span><span style="color:#dcdcaa">toISOString</span><span style="color:#ffd700">(</span><span style="color:#ffd700">)</span><span style="color:#d4d4d4">.</span><span style="color:#dcdcaa">split</span><span style="color:#ffd700">(</span><span style="color:#ce9178">&#x27;T&#x27;</span><span style="color:#ffd700">)</span><span style="color:#ffd700">[</span><span style="color:#d4d4d4">0</span><span style="color:#ffd700">]</span><span style="color:#d4d4d4">;</span>

<span style="color:#6a9955">      // Raw SQL query for session statistics with explicit date casting</span>
<span style="color:#d4d4d4">      </span><span style="color:#569cd6">const</span><span style="color:#d4d4d4"> </span><span style="color:#9cdcfe">result</span><span style="color:#d4d4d4"> </span><span style="color:#d4d4d4">=</span><span style="color:#d4d4d4"> </span><span style="color:#c586c0">await</span><span style="color:#d4d4d4"> </span><span style="color:#9cdcfe">prisma</span><span style="color:#d4d4d4">.</span><span style="color:#9cdcfe">$queryRaw</span><span style="color:#ce9178">`</span>
<span style="color:#ce9178">        SELECT</span>
<span style="color:#ce9178">          COUNT(*) as &quot;totalSessions&quot;,</span>
<span style="color:#ce9178">          AVG(&quot;durationSeconds&quot;) as &quot;avgSessionSeconds&quot;</span>
<span style="color:#ce9178">        FROM &quot;UserSession&quot;</span>
<span style="color:#ce9178">        WHERE</span>
<span style="color:#ce9178">          DATE(&quot;startTime&quot;) BETWEEN ${formattedStartDate}::date AND ${formattedEndDate}::date</span>
<span style="color:#ce9178">          AND &quot;endTime&quot; IS NOT NULL</span>
<span style="color:#ce9178">      `</span><span style="color:#d4d4d4">;</span>

<span style="color:#6a9955">      // Convert BigInt values to numbers before returning</span>
<span style="color:#d4d4d4">      </span><span style="color:#c586c0">return</span><span style="color:#d4d4d4"> </span><span style="color:#dcdcaa">convertBigIntToNumber</span><span style="color:#ffd700">(</span><span style="color:#9cdcfe">result</span><span style="color:#da70d6">[</span><span style="color:#d4d4d4">0</span><span style="color:#da70d6">]</span><span style="color:#ffd700">)</span><span style="color:#d4d4d4">;</span>
<span style="color:#d4d4d4">    </span><span style="color:#179fff">}</span><span style="color:#d4d4d4"> </span><span style="color:#c586c0">catch</span><span style="color:#d4d4d4"> </span><span style="color:#179fff">(</span><span style="color:#9cdcfe">error</span><span style="color:#179fff">)</span><span style="color:#d4d4d4"> </span><span style="color:#179fff">{</span>
<span style="color:#d4d4d4">      </span><span style="color:#9cdcfe">console</span><span style="color:#d4d4d4">.</span><span style="color:#dcdcaa">error</span><span style="color:#ffd700">(</span><span style="color:#ce9178">&#x27;Error getting session statistics:&#x27;</span><span style="color:#d4d4d4">,</span><span style="color:#d4d4d4"> </span><span style="color:#9cdcfe">error</span><span style="color:#ffd700">)</span><span style="color:#d4d4d4">;</span>
<span style="color:#d4d4d4">      </span><span style="color:#c586c0">return</span><span style="color:#d4d4d4"> </span><span style="color:#ffd700">{</span>
<span style="color:#d4d4d4">        </span><span style="color:#9cdcfe">totalSessions</span><span style="color:#d4d4d4">:</span><span style="color:#d4d4d4"> </span><span style="color:#d4d4d4">0</span><span style="color:#d4d4d4">,</span>
<span style="color:#d4d4d4">        </span><span style="color:#9cdcfe">avgSessionSeconds</span><span style="color:#d4d4d4">:</span><span style="color:#d4d4d4"> </span><span style="color:#d4d4d4">0</span>
<span style="color:#d4d4d4">      </span><span style="color:#ffd700">}</span><span style="color:#d4d4d4">;</span>
<span style="color:#d4d4d4">    </span><span style="color:#179fff">}</span>
<span style="color:#d4d4d4">  </span><span style="color:#da70d6">}</span>

<span style="color:#6a9955">  /**</span>
<span style="color:#6a9955">   * Get top users by games played</span>
<span style="color:#6a9955">   * </span><span style="color:#569cd6">@param</span><span style="color:#6a9955"> </span><span style="color:#ffd700">{</span><span style="color:#4ec9b0">number</span><span style="color:#ffd700">}</span><span style="color:#6a9955"> limit - Number of users to return</span>
<span style="color:#6a9955">   * </span><span style="color:#569cd6">@returns</span><span style="color:#6a9955"> </span><span style="color:#ffd700">{</span><span style="color:#4ec9b0">Promise&lt;Array&gt;</span><span style="color:#ffd700">}</span><span style="color:#6a9955"> Top users data</span>
<span style="color:#6a9955">   */</span>
<span style="color:#d4d4d4">  </span><span style="color:#569cd6">async</span><span style="color:#d4d4d4"> </span><span style="color:#dcdcaa">getTopUsers</span><span style="color:#da70d6">(</span><span style="color:#9cdcfe">limit</span><span style="color:#d4d4d4"> </span><span style="color:#d4d4d4">=</span><span style="color:#d4d4d4"> </span><span style="color:#d4d4d4">1</span><span style="color:#d4d4d4">0</span><span style="color:#da70d6">)</span><span style="color:#d4d4d4"> </span><span style="color:#da70d6">{</span>
<span style="color:#d4d4d4">    </span><span style="color:#c586c0">try</span><span style="color:#d4d4d4"> </span><span style="color:#179fff">{</span>
<span style="color:#6a9955">      // Get users with most games played</span>
<span style="color:#d4d4d4">      </span><span style="color:#569cd6">const</span><span style="color:#d4d4d4"> </span><span style="color:#9cdcfe">users</span><span style="color:#d4d4d4"> </span><span style="color:#d4d4d4">=</span><span style="color:#d4d4d4"> </span><span style="color:#c586c0">await</span><span style="color:#d4d4d4"> </span><span style="color:#9cdcfe">prisma</span><span style="color:#d4d4d4">.</span><span style="color:#9cdcfe">user</span><span style="color:#d4d4d4">.</span><span style="color:#dcdcaa">findMany</span><span style="color:#ffd700">(</span><span style="color:#da70d6">{</span>
<span style="color:#d4d4d4">        </span><span style="color:#9cdcfe">select</span><span style="color:#d4d4d4">:</span><span style="color:#d4d4d4"> </span><span style="color:#179fff">{</span>
<span style="color:#d4d4d4">          </span><span style="color:#9cdcfe">id</span><span style="color:#d4d4d4">:</span><span style="color:#d4d4d4"> </span><span style="color:#569cd6">true</span><span style="color:#d4d4d4">,</span>
<span style="color:#d4d4d4">          </span><span style="color:#9cdcfe">username</span><span style="color:#d4d4d4">:</span><span style="color:#d4d4d4"> </span><span style="color:#569cd6">true</span><span style="color:#d4d4d4">,</span>
<span style="color:#d4d4d4">          </span><span style="color:#9cdcfe">_count</span><span style="color:#d4d4d4">:</span><span style="color:#d4d4d4"> </span><span style="color:#ffd700">{</span>
<span style="color:#d4d4d4">            </span><span style="color:#9cdcfe">select</span><span style="color:#d4d4d4">:</span><span style="color:#d4d4d4"> </span><span style="color:#da70d6">{</span>
<span style="color:#d4d4d4">              </span><span style="color:#9cdcfe">player1Matches</span><span style="color:#d4d4d4">:</span><span style="color:#d4d4d4"> </span><span style="color:#569cd6">true</span><span style="color:#d4d4d4">,</span>
<span style="color:#d4d4d4">              </span><span style="color:#9cdcfe">player2Matches</span><span style="color:#d4d4d4">:</span><span style="color:#d4d4d4"> </span><span style="color:#569cd6">true</span><span style="color:#d4d4d4">,</span>
<span style="color:#d4d4d4">              </span><span style="color:#9cdcfe">wonMatches</span><span style="color:#d4d4d4">:</span><span style="color:#d4d4d4"> </span><span style="color:#569cd6">true</span>
<span style="color:#d4d4d4">            </span><span style="color:#da70d6">}</span>
<span style="color:#d4d4d4">          </span><span style="color:#ffd700">}</span>
<span style="color:#d4d4d4">        </span><span style="color:#179fff">}</span><span style="color:#d4d4d4">,</span>
<span style="color:#d4d4d4">        </span><span style="color:#9cdcfe">orderBy</span><span style="color:#d4d4d4">:</span><span style="color:#d4d4d4"> </span><span style="color:#179fff">{</span>
<span style="color:#d4d4d4">          </span><span style="color:#9cdcfe">player1Matches</span><span style="color:#d4d4d4">:</span><span style="color:#d4d4d4"> </span><span style="color:#ffd700">{</span>
<span style="color:#d4d4d4">            </span><span style="color:#9cdcfe">_count</span><span style="color:#d4d4d4">:</span><span style="color:#d4d4d4"> </span><span style="color:#ce9178">&#x27;desc&#x27;</span>
<span style="color:#d4d4d4">          </span><span style="color:#ffd700">}</span>
<span style="color:#d4d4d4">        </span><span style="color:#179fff">}</span><span style="color:#d4d4d4">,</span>
<span style="color:#d4d4d4">        </span><span style="color:#9cdcfe">take</span><span style="color:#d4d4d4">:</span><span style="color:#d4d4d4"> </span><span style="color:#9cdcfe">limit</span>
<span style="color:#d4d4d4">      </span><span style="color:#da70d6">}</span><span style="color:#ffd700">)</span><span style="color:#d4d4d4">;</span>

<span style="color:#6a9955">      // Format the data</span>
<span style="color:#d4d4d4">      </span><span style="color:#569cd6">const</span><span style="color:#d4d4d4"> </span><span style="color:#9cdcfe">mappedUsers</span><span style="color:#d4d4d4"> </span><span style="color:#d4d4d4">=</span><span style="color:#d4d4d4"> </span><span style="color:#9cdcfe">users</span><span style="color:#d4d4d4">.</span><span style="color:#dcdcaa">map</span><span style="color:#ffd700">(</span><span style="color:#9cdcfe">user</span><span style="color:#d4d4d4"> </span><span style="color:#d4d4d4">=</span><span style="color:#d4d4d4">&gt;</span><span style="color:#d4d4d4"> </span><span style="color:#da70d6">{</span>
<span style="color:#d4d4d4">        </span><span style="color:#569cd6">const</span><span style="color:#d4d4d4"> </span><span style="color:#9cdcfe">gamesPlayed</span><span style="color:#d4d4d4"> </span><span style="color:#d4d4d4">=</span><span style="color:#d4d4d4"> </span><span style="color:#9cdcfe">user</span><span style="color:#d4d4d4">.</span><span style="color:#9cdcfe">_count</span><span style="color:#d4d4d4">.</span><span style="color:#9cdcfe">player1Matches</span><span style="color:#d4d4d4"> </span><span style="color:#d4d4d4">+</span><span style="color:#d4d4d4"> </span><span style="color:#9cdcfe">user</span><span style="color:#d4d4d4">.</span><span style="color:#9cdcfe">_count</span><span style="color:#d4d4d4">.</span><span style="color:#9cdcfe">player2Matches</span><span style="color:#d4d4d4">;</span>
<span style="color:#d4d4d4">        </span><span style="color:#569cd6">const</span><span style="color:#d4d4d4"> </span><span style="color:#9cdcfe">gamesWon</span><span style="color:#d4d4d4"> </span><span style="color:#d4d4d4">=</span><span style="color:#d4d4d4"> </span><span style="color:#9cdcfe">user</span><span style="color:#d4d4d4">.</span><span style="color:#9cdcfe">_count</span><span style="color:#d4d4d4">.</span><span style="color:#9cdcfe">wonMatches</span><span style="color:#d4d4d4">;</span>
<span style="color:#d4d4d4">        </span><span style="color:#569cd6">const</span><span style="color:#d4d4d4"> </span><span style="color:#9cdcfe">winRate</span><span style="color:#d4d4d4"> </span><span style="color:#d4d4d4">=</span><span style="color:#d4d4d4"> </span><span style="color:#9cdcfe">gamesPlayed</span><span style="color:#d4d4d4"> </span><span style="color:#d4d4d4">&gt;</span><span style="color:#d4d4d4"> </span><span style="color:#d4d4d4">0</span>
<span style="color:#d4d4d4">          </span><span style="color:#d4d4d4">?</span><span style="color:#d4d4d4"> </span><span style="color:#4ec9b0">Math</span><span style="color:#d4d4d4">.</span><span style="color:#dcdcaa">round</span><span style="color:#179fff">(</span><span style="color:#ffd700">(</span><span style="color:#9cdcfe">gamesWon</span><span style="color:#d4d4d4"> </span><span style="color:#d4d4d4">/</span><span style="color:#d4d4d4"> </span><span style="color:#9cdcfe">gamesPlayed</span><span style="color:#ffd700">)</span><span style="color:#d4d4d4"> </span><span style="color:#d4d4d4">*</span><span style="color:#d4d4d4"> </span><span style="color:#d4d4d4">1</span><span style="color:#d4d4d4">0</span><span style="color:#d4d4d4">0</span><span style="color:#179fff">)</span>
<span style="color:#d4d4d4">          </span><span style="color:#d4d4d4">:</span><span style="color:#d4d4d4"> </span><span style="color:#d4d4d4">0</span><span style="color:#d4d4d4">;</span>

<span style="color:#d4d4d4">        </span><span style="color:#c586c0">return</span><span style="color:#d4d4d4"> </span><span style="color:#179fff">{</span>
<span style="color:#d4d4d4">          </span><span style="color:#9cdcfe">id</span><span style="color:#d4d4d4">:</span><span style="color:#d4d4d4"> </span><span style="color:#9cdcfe">user</span><span style="color:#d4d4d4">.</span><span style="color:#9cdcfe">id</span><span style="color:#d4d4d4">,</span>
<span style="color:#d4d4d4">          </span><span style="color:#9cdcfe">username</span><span style="color:#d4d4d4">:</span><span style="color:#d4d4d4"> </span><span style="color:#9cdcfe">user</span><span style="color:#d4d4d4">.</span><span style="color:#9cdcfe">username</span><span style="color:#d4d4d4">,</span>
<span style="color:#d4d4d4">          </span><span style="color:#9cdcfe">gamesPlayed</span><span style="color:#d4d4d4">,</span>
<span style="color:#d4d4d4">          </span><span style="color:#9cdcfe">gamesWon</span><span style="color:#d4d4d4">,</span>
<span style="color:#d4d4d4">          </span><span style="color:#9cdcfe">winRate</span>
<span style="color:#d4d4d4">        </span><span style="color:#179fff">}</span><span style="color:#d4d4d4">;</span>
<span style="color:#d4d4d4">      </span><span style="color:#da70d6">}</span><span style="color:#ffd700">)</span><span style="color:#d4d4d4">;</span>

<span style="color:#6a9955">      // Convert BigInt values to numbers before returning</span>
<span style="color:#d4d4d4">      </span><span style="color:#c586c0">return</span><span style="color:#d4d4d4"> </span><span style="color:#dcdcaa">convertBigIntToNumber</span><span style="color:#ffd700">(</span><span style="color:#9cdcfe">mappedUsers</span><span style="color:#ffd700">)</span><span style="color:#d4d4d4">;</span>
<span style="color:#d4d4d4">    </span><span style="color:#179fff">}</span><span style="color:#d4d4d4"> </span><span style="color:#c586c0">catch</span><span style="color:#d4d4d4"> </span><span style="color:#179fff">(</span><span style="color:#9cdcfe">error</span><span style="color:#179fff">)</span><span style="color:#d4d4d4"> </span><span style="color:#179fff">{</span>
<span style="color:#d4d4d4">      </span><span style="color:#9cdcfe">console</span><span style="color:#d4d4d4">.</span><span style="color:#dcdcaa">error</span><span style="color:#ffd700">(</span><span style="color:#ce9178">&#x27;Error getting top users:&#x27;</span><span style="color:#d4d4d4">,</span><span style="color:#d4d4d4"> </span><span style="color:#9cdcfe">error</span><span style="color:#ffd700">)</span><span style="color:#d4d4d4">;</span>
<span style="color:#d4d4d4">      </span><span style="color:#c586c0">return</span><span style="color:#d4d4d4"> </span><span style="color:#ffd700">[</span><span style="color:#ffd700">]</span><span style="color:#d4d4d4">;</span>
<span style="color:#d4d4d4">    </span><span style="color:#179fff">}</span>
<span style="color:#d4d4d4">  </span><span style="color:#da70d6">}</span>

<span style="color:#6a9955">  /**</span>
<span style="color:#6a9955">   * Get new user registrations</span>
<span style="color:#6a9955">   * </span><span style="color:#569cd6">@param</span><span style="color:#6a9955"> </span><span style="color:#ffd700">{</span><span style="color:#4ec9b0">Date</span><span style="color:#ffd700">}</span><span style="color:#6a9955"> startDate - Start date for the query</span>
<span style="color:#6a9955">   * </span><span style="color:#569cd6">@param</span><span style="color:#6a9955"> </span><span style="color:#ffd700">{</span><span style="color:#4ec9b0">Date</span><span style="color:#ffd700">}</span><span style="color:#6a9955"> endDate - End date for the query</span>
<span style="color:#6a9955">   * </span><span style="color:#569cd6">@param</span><span style="color:#6a9955"> </span><span style="color:#ffd700">{</span><span style="color:#4ec9b0">string</span><span style="color:#ffd700">}</span><span style="color:#6a9955"> interval - Interval for grouping (day, week, month)</span>
<span style="color:#6a9955">   * </span><span style="color:#569cd6">@returns</span><span style="color:#6a9955"> </span><span style="color:#ffd700">{</span><span style="color:#4ec9b0">Promise&lt;Array&gt;</span><span style="color:#ffd700">}</span><span style="color:#6a9955"> New user registrations data</span>
<span style="color:#6a9955">   */</span>
<span style="color:#d4d4d4">  </span><span style="color:#569cd6">async</span><span style="color:#d4d4d4"> </span><span style="color:#dcdcaa">getNewUserRegistrations</span><span style="color:#da70d6">(</span><span style="color:#9cdcfe">startDate</span><span style="color:#d4d4d4">,</span><span style="color:#d4d4d4"> </span><span style="color:#9cdcfe">endDate</span><span style="color:#d4d4d4">,</span><span style="color:#d4d4d4"> </span><span style="color:#9cdcfe">interval</span><span style="color:#d4d4d4"> </span><span style="color:#d4d4d4">=</span><span style="color:#d4d4d4"> </span><span style="color:#ce9178">&#x27;day&#x27;</span><span style="color:#da70d6">)</span><span style="color:#d4d4d4"> </span><span style="color:#da70d6">{</span>
<span style="color:#d4d4d4">    </span><span style="color:#c586c0">try</span><span style="color:#d4d4d4"> </span><span style="color:#179fff">{</span>
<span style="color:#6a9955">      // Format dates for SQL query</span>
<span style="color:#d4d4d4">      </span><span style="color:#569cd6">const</span><span style="color:#d4d4d4"> </span><span style="color:#9cdcfe">formattedStartDate</span><span style="color:#d4d4d4"> </span><span style="color:#d4d4d4">=</span><span style="color:#d4d4d4"> </span><span style="color:#9cdcfe">startDate</span><span style="color:#d4d4d4">.</span><span style="color:#dcdcaa">toISOString</span><span style="color:#ffd700">(</span><span style="color:#ffd700">)</span><span style="color:#d4d4d4">.</span><span style="color:#dcdcaa">split</span><span style="color:#ffd700">(</span><span style="color:#ce9178">&#x27;T&#x27;</span><span style="color:#ffd700">)</span><span style="color:#ffd700">[</span><span style="color:#d4d4d4">0</span><span style="color:#ffd700">]</span><span style="color:#d4d4d4">;</span>
<span style="color:#d4d4d4">      </span><span style="color:#569cd6">const</span><span style="color:#d4d4d4"> </span><span style="color:#9cdcfe">formattedEndDate</span><span style="color:#d4d4d4"> </span><span style="color:#d4d4d4">=</span><span style="color:#d4d4d4"> </span><span style="color:#9cdcfe">endDate</span><span style="color:#d4d4d4">.</span><span style="color:#dcdcaa">toISOString</span><span style="color:#ffd700">(</span><span style="color:#ffd700">)</span><span style="color:#d4d4d4">.</span><span style="color:#dcdcaa">split</span><span style="color:#ffd700">(</span><span style="color:#ce9178">&#x27;T&#x27;</span><span style="color:#ffd700">)</span><span style="color:#ffd700">[</span><span style="color:#d4d4d4">0</span><span style="color:#ffd700">]</span><span style="color:#d4d4d4">;</span>

<span style="color:#d4d4d4">      </span><span style="color:#569cd6">let</span><span style="color:#d4d4d4"> </span><span style="color:#9cdcfe">dateFormat</span><span style="color:#d4d4d4">;</span>
<span style="color:#d4d4d4">      </span><span style="color:#c586c0">switch</span><span style="color:#d4d4d4"> </span><span style="color:#ffd700">(</span><span style="color:#9cdcfe">interval</span><span style="color:#ffd700">)</span><span style="color:#d4d4d4"> </span><span style="color:#ffd700">{</span>
<span style="color:#d4d4d4">        </span><span style="color:#c586c0">case</span><span style="color:#d4d4d4"> </span><span style="color:#ce9178">&#x27;week&#x27;</span><span style="color:#d4d4d4">:</span>
<span style="color:#d4d4d4">          </span><span style="color:#9cdcfe">dateFormat</span><span style="color:#d4d4d4"> </span><span style="color:#d4d4d4">=</span><span style="color:#d4d4d4"> </span><span style="color:#ce9178">&#x27;week&#x27;</span><span style="color:#d4d4d4">;</span>
<span style="color:#d4d4d4">          </span><span style="color:#c586c0">break</span><span style="color:#d4d4d4">;</span>
<span style="color:#d4d4d4">        </span><span style="color:#c586c0">case</span><span style="color:#d4d4d4"> </span><span style="color:#ce9178">&#x27;month&#x27;</span><span style="color:#d4d4d4">:</span>
<span style="color:#d4d4d4">          </span><span style="color:#9cdcfe">dateFormat</span><span style="color:#d4d4d4"> </span><span style="color:#d4d4d4">=</span><span style="color:#d4d4d4"> </span><span style="color:#ce9178">&#x27;month&#x27;</span><span style="color:#d4d4d4">;</span>
<span style="color:#d4d4d4">          </span><span style="color:#c586c0">break</span><span style="color:#d4d4d4">;</span>
<span style="color:#d4d4d4">        </span><span style="color:#c586c0">case</span><span style="color:#d4d4d4"> </span><span style="color:#ce9178">&#x27;day&#x27;</span><span style="color:#d4d4d4">:</span>
<span style="color:#d4d4d4">        </span><span style="color:#c586c0">default</span><span style="color:#d4d4d4">:</span>
<span style="color:#d4d4d4">          </span><span style="color:#9cdcfe">dateFormat</span><span style="color:#d4d4d4"> </span><span style="color:#d4d4d4">=</span><span style="color:#d4d4d4"> </span><span style="color:#ce9178">&#x27;day&#x27;</span><span style="color:#d4d4d4">;</span>
<span style="color:#d4d4d4">      </span><span style="color:#ffd700">}</span>

<span style="color:#6a9955">      // Raw SQL query for new user registrations with explicit date casting</span>
<span style="color:#d4d4d4">      </span><span style="color:#569cd6">const</span><span style="color:#d4d4d4"> </span><span style="color:#9cdcfe">result</span><span style="color:#d4d4d4"> </span><span style="color:#d4d4d4">=</span><span style="color:#d4d4d4"> </span><span style="color:#c586c0">await</span><span style="color:#d4d4d4"> </span><span style="color:#9cdcfe">prisma</span><span style="color:#d4d4d4">.</span><span style="color:#9cdcfe">$queryRaw</span><span style="color:#ce9178">`</span>
<span style="color:#ce9178">        SELECT</span>
<span style="color:#ce9178">          DATE_TRUNC(${dateFormat}, &quot;createdAt&quot;) as period,</span>
<span style="color:#ce9178">          COUNT(*) as count</span>
<span style="color:#ce9178">        FROM &quot;User&quot;</span>
<span style="color:#ce9178">        WHERE DATE(&quot;createdAt&quot;) BETWEEN ${formattedStartDate}::date AND ${formattedEndDate}::date</span>
<span style="color:#ce9178">        GROUP BY DATE_TRUNC(${dateFormat}, &quot;createdAt&quot;)</span>
<span style="color:#ce9178">        ORDER BY period</span>
<span style="color:#ce9178">      `</span><span style="color:#d4d4d4">;</span>

<span style="color:#6a9955">      // Convert BigInt values to numbers before returning</span>
<span style="color:#d4d4d4">      </span><span style="color:#c586c0">return</span><span style="color:#d4d4d4"> </span><span style="color:#dcdcaa">convertBigIntToNumber</span><span style="color:#ffd700">(</span><span style="color:#9cdcfe">result</span><span style="color:#ffd700">)</span><span style="color:#d4d4d4">;</span>
<span style="color:#d4d4d4">    </span><span style="color:#179fff">}</span><span style="color:#d4d4d4"> </span><span style="color:#c586c0">catch</span><span style="color:#d4d4d4"> </span><span style="color:#179fff">(</span><span style="color:#9cdcfe">error</span><span style="color:#179fff">)</span><span style="color:#d4d4d4"> </span><span style="color:#179fff">{</span>
<span style="color:#d4d4d4">      </span><span style="color:#9cdcfe">console</span><span style="color:#d4d4d4">.</span><span style="color:#dcdcaa">error</span><span style="color:#ffd700">(</span><span style="color:#ce9178">&#x27;Error getting new user registrations:&#x27;</span><span style="color:#d4d4d4">,</span><span style="color:#d4d4d4"> </span><span style="color:#9cdcfe">error</span><span style="color:#ffd700">)</span><span style="color:#d4d4d4">;</span>
<span style="color:#d4d4d4">      </span><span style="color:#c586c0">return</span><span style="color:#d4d4d4"> </span><span style="color:#ffd700">[</span><span style="color:#ffd700">]</span><span style="color:#d4d4d4">;</span>
<span style="color:#d4d4d4">    </span><span style="color:#179fff">}</span>
<span style="color:#d4d4d4">  </span><span style="color:#da70d6">}</span>

<span style="color:#6a9955">  /**</span>
<span style="color:#6a9955">   * Get user retention</span>
<span style="color:#6a9955">   * </span><span style="color:#569cd6">@param</span><span style="color:#6a9955"> </span><span style="color:#ffd700">{</span><span style="color:#4ec9b0">number</span><span style="color:#ffd700">}</span><span style="color:#6a9955"> days - Number of days to look back</span>
<span style="color:#6a9955">   * </span><span style="color:#569cd6">@returns</span><span style="color:#6a9955"> </span><span style="color:#ffd700">{</span><span style="color:#4ec9b0">Promise&lt;Object&gt;</span><span style="color:#ffd700">}</span><span style="color:#6a9955"> User retention data</span>
<span style="color:#6a9955">   */</span>
<span style="color:#d4d4d4">  </span><span style="color:#569cd6">async</span><span style="color:#d4d4d4"> </span><span style="color:#dcdcaa">getUserRetention</span><span style="color:#da70d6">(</span><span style="color:#9cdcfe">days</span><span style="color:#d4d4d4"> </span><span style="color:#d4d4d4">=</span><span style="color:#d4d4d4"> </span><span style="color:#d4d4d4">3</span><span style="color:#d4d4d4">0</span><span style="color:#da70d6">)</span><span style="color:#d4d4d4"> </span><span style="color:#da70d6">{</span>
<span style="color:#d4d4d4">    </span><span style="color:#c586c0">try</span><span style="color:#d4d4d4"> </span><span style="color:#179fff">{</span>
<span style="color:#d4d4d4">      </span><span style="color:#569cd6">const</span><span style="color:#d4d4d4"> </span><span style="color:#9cdcfe">startDate</span><span style="color:#d4d4d4"> </span><span style="color:#d4d4d4">=</span><span style="color:#d4d4d4"> </span><span style="color:#569cd6">new</span><span style="color:#d4d4d4"> </span><span style="color:#dcdcaa">Date</span><span style="color:#ffd700">(</span><span style="color:#ffd700">)</span><span style="color:#d4d4d4">;</span>
<span style="color:#d4d4d4">      </span><span style="color:#9cdcfe">startDate</span><span style="color:#d4d4d4">.</span><span style="color:#dcdcaa">setDate</span><span style="color:#ffd700">(</span><span style="color:#9cdcfe">startDate</span><span style="color:#d4d4d4">.</span><span style="color:#dcdcaa">getDate</span><span style="color:#da70d6">(</span><span style="color:#da70d6">)</span><span style="color:#d4d4d4"> </span><span style="color:#d4d4d4">-</span><span style="color:#d4d4d4"> </span><span style="color:#9cdcfe">days</span><span style="color:#ffd700">)</span><span style="color:#d4d4d4">;</span>

<span style="color:#6a9955">      // Get users who registered in the period</span>
<span style="color:#d4d4d4">      </span><span style="color:#569cd6">const</span><span style="color:#d4d4d4"> </span><span style="color:#9cdcfe">newUsers</span><span style="color:#d4d4d4"> </span><span style="color:#d4d4d4">=</span><span style="color:#d4d4d4"> </span><span style="color:#c586c0">await</span><span style="color:#d4d4d4"> </span><span style="color:#9cdcfe">prisma</span><span style="color:#d4d4d4">.</span><span style="color:#9cdcfe">user</span><span style="color:#d4d4d4">.</span><span style="color:#dcdcaa">count</span><span style="color:#ffd700">(</span><span style="color:#da70d6">{</span>
<span style="color:#d4d4d4">        </span><span style="color:#9cdcfe">where</span><span style="color:#d4d4d4">:</span><span style="color:#d4d4d4"> </span><span style="color:#179fff">{</span>
<span style="color:#d4d4d4">          </span><span style="color:#9cdcfe">createdAt</span><span style="color:#d4d4d4">:</span><span style="color:#d4d4d4"> </span><span style="color:#ffd700">{</span>
<span style="color:#d4d4d4">            </span><span style="color:#9cdcfe">gte</span><span style="color:#d4d4d4">:</span><span style="color:#d4d4d4"> </span><span style="color:#9cdcfe">startDate</span>
<span style="color:#d4d4d4">          </span><span style="color:#ffd700">}</span>
<span style="color:#d4d4d4">        </span><span style="color:#179fff">}</span>
<span style="color:#d4d4d4">      </span><span style="color:#da70d6">}</span><span style="color:#ffd700">)</span><span style="color:#d4d4d4">;</span>
</div></div>
<div class="a" style="left:1746px;top:276px;width:28px;height:1442px;background:#1e1e1e;"></div>
<div class="a" style="left:1746px;top:276px;width:2px;height:1442px;background:#262626;"></div>
<div class="a" style="left:1746px;top:274px;width:28px;height:130px;background:#464646;"></div>
<div class="a" style="left:1756px;top:300px;width:9px;height:13px;background:#a8a8a8;"></div>
<div class="a" style="left:1748px;top:378px;width:26px;height:3px;background:#a0a0a0;"></div>
<div class="a" style="left:1756px;top:372px;width:10px;height:13px;background:#a8a8a8;"></div>
<div class="a" style="left:16px;top:1718px;width:1758px;height:44px;background:#3474c4;"></div>
<div class="a" style="left:16px;top:1718px;width:68px;height:44px;background:#3a7f5b;"></div>
<svg style="left:40px;top:1728px;" width="22" height="24" viewBox="0 0 22 24"><path d="M2 10l7 6-7 6M20 2l-7 6 7 6" fill="none" stroke="#fff" stroke-width="2"/></svg>
<svg style="left:98px;top:1726px;" width="24" height="30" viewBox="0 0 24 30"><g fill="none" stroke="#fff" stroke-width="2.2"><circle cx="5" cy="5" r="3.5"/><circle cx="5" cy="25" r="3.5"/><circle cx="19" cy="11" r="3.5"/><path d="M5 8.5v13M19 14.5c0 5-4 6-8 6s-6 1-6 2"/></g></svg>
<div class="a t" style="left:130px;top:1727.8px;font:normal normal 25px/25px 'Liberation Sans',sans-serif;color:#fff;letter-spacing:0.21px;">release/v1.1.1</div>
<svg style="left:302px;top:1729px;" width="28" height="24" viewBox="0 0 28 24"><g fill="none" stroke="#fff" stroke-width="2.2"><path d="M3 10a11 9 0 0 1 20-2M25 14a11 9 0 0 1-20 2"/><path d="M24 2v6h-6M4 22v-6h6"/></g></svg>
<svg style="left:362px;top:1727px;" width="25" height="25" viewBox="0 0 25 25"><g fill="none" stroke="#fff" stroke-width="2"><circle cx="12.5" cy="12.5" r="11"/><path d="M8 8l9 9M17 8l-9 9"/></g></svg>
<div class="a t" style="left:396px;top:1727.8px;font:normal normal 25px/25px 'Liberation Sans',sans-serif;color:#fff;letter-spacing:0px;">0</div>
<svg style="left:419px;top:1727px;" width="25" height="24" viewBox="0 0 25 24"><path d="M12.5 2L1.5 22h22z M12.5 9v7" fill="none" stroke="#fff" stroke-width="2" stroke-linejoin="round"/><circle cx="12.5" cy="19" r="1.3" fill="#fff"/></svg>
<div class="a t" style="left:452px;top:1727.8px;font:normal normal 25px/25px 'Liberation Sans',sans-serif;color:#fff;letter-spacing:0px;">3</div>
<svg style="left:476px;top:1727px;" width="25" height="25" viewBox="0 0 25 25"><g fill="none" stroke="#fff" stroke-width="2"><circle cx="12.5" cy="12.5" r="11"/><path d="M12.5 10v9"/></g><circle cx="12.5" cy="6.5" r="1.4" fill="#fff"/></svg>
<div class="a t" style="left:508px;top:1727.8px;font:normal normal 25px/25px 'Liberation Sans',sans-serif;color:#fff;letter-spacing:0px;">3</div>
<svg style="left:557px;top:1727px;" width="26" height="26" viewBox="0 0 26 26"><g fill="none" stroke="#fff" stroke-width="2"><path d="M6 3a11 11 0 0 0 0 14M20 3a11 11 0 0 1 0 14M9.5 6.5a6 6 0 0 0 0 7M16.5 6.5a6 6 0 0 1 0 7M13 11L7 25M13 11l6 14M9 19h8"/></g></svg>
<div class="a t" style="left:590px;top:1727.8px;font:normal normal 25px/25px 'Liberation Sans',sans-serif;color:#fff;letter-spacing:0px;">0</div>
<div class="a t" style="left:1055px;top:1727.8px;font:normal normal 25px/25px 'Liberation Sans',sans-serif;color:#fff;letter-spacing:0.3px;">Ln 33, Col 2</div>
<div class="a t" style="left:1225px;top:1727.8px;font:normal normal 25px/25px 'Liberation Sans',sans-serif;color:#fff;letter-spacing:0.4px;">Spaces: 2</div>
<div class="a t" style="left:1370px;top:1727.8px;font:normal normal 25px/25px 'Liberation Sans',sans-serif;color:#fff;letter-spacing:0.3px;">UTF-8</div>
<div class="a t" style="left:1475px;top:1727.8px;font:normal normal 25px/25px 'Liberation Sans',sans-serif;color:#fff;letter-spacing:0.3px;">LF</div>
<div class="a t" style="left:1532px;top:1727.8px;font:normal normal 25px/25px 'Liberation Sans',sans-serif;color:#fff;letter-spacing:-1px;">{ }</div>
<div class="a t" style="left:1570px;top:1727.8px;font:normal normal 25px/25px 'Liberation Sans',sans-serif;color:#fff;letter-spacing:0.4px;">JavaScript</div>
<svg style="left:1718px;top:1727px;" width="24" height="26" viewBox="0 0 24 26"><path d="M4 19V11a8 8 0 0 1 16 0v8l2 2H2z M9 23a3 3 0 0 0 6 0" fill="none" stroke="#fff" stroke-width="2" stroke-linejoin="round"/></svg>
</div></div>
<div class="a" style="left:1774px;top:140px;width:1152px;height:1631px;border-radius:24px;border:1px solid rgba(200,220,200,.15);background:#1a231c;box-shadow:0 14px 20px -8px rgba(0,0,0,.45)"></div>
<div class="a" style="left:1776px;top:90px;width:1148px;height:1670px;overflow:hidden;border-radius:20px;background:linear-gradient(#e8e8e6 0px,#e8e8e6 100px,#25462e 104px,#172719 100%)"><div class="a" style="left:-1776px;top:-90px;width:2940px;height:1912px">
<div class="a" style="left:1776px;top:90px;width:1148px;height:104px;background:#e8e8e6;"></div>
<div class="a" style="left:1776px;top:193px;width:1148px;height:1px;background:#cfcfcd;"></div>
<div class="a" style="left:1816px;top:130px;width:24px;height:24px;border-radius:50%;background:#d3d3d1;border:1px solid #b5b5b3"></div>
<div class="a" style="left:1856px;top:130px;width:24px;height:24px;border-radius:50%;background:#d3d3d1;border:1px solid #b5b5b3"></div>
<div class="a" style="left:1896px;top:130px;width:24px;height:24px;border-radius:50%;background:#d3d3d1;border:1px solid #b5b5b3"></div>
<svg style="left:1972px;top:126px;" width="39" height="31" viewBox="0 0 39 31"><g fill="none" stroke="#8c8c8c" stroke-width="2.2"><rect x="1.1" y="1.1" width="36.8" height="28.8" rx="4"/><path d="M14 1v29"/></g><g stroke="#8c8c8c" stroke-width="2"><path d="M5 7h5M5 11.5h5M5 16h5"/></g></svg>
<div class="a" style="left:2024px;top:124px;width:2px;height:36px;background:#d4d4d2;"></div>
<svg style="left:2039px;top:137px;" width="15" height="10" viewBox="0 0 15 10"><path d="M1.5 1.5l6 6 6-6" fill="none" stroke="#8c8c8c" stroke-width="2.4"/></svg>
<svg style="left:2104px;top:127px;" width="18" height="29" viewBox="0 0 18 29"><path d="M16 1.5L3 14.5l13 13" fill="none" stroke="#8c8c8c" stroke-width="2.6" stroke-linecap="round"/></svg>
<svg style="left:2176px;top:127px;" width="18" height="29" viewBox="0 0 18 29"><path d="M2 1.5l13 13-13 13" fill="none" stroke="#c4c4c2" stroke-width="2.6" stroke-linecap="round"/></svg>
<div class="a" style="left:2250px;top:114px;width:492px;height:55px;border-radius:16px;border:2px solid #d2d2d0;background:#e9e9e7"></div>
<svg style="left:2266px;top:127px;" width="25" height="30" viewBox="0 0 25 30"><g fill="none" stroke="#7a7a7a" stroke-width="2.2"><rect x="1.5" y="1.5" width="21" height="14" rx="4"/></g><g stroke="#7a7a7a" stroke-width="2.2"><path d="M1 20h23M1 27h16"/></g></svg>
<div class="a t" style="left:2443px;top:129.1px;font:normal normal 27px/27px 'Liberation Sans',sans-serif;color:#4d4d4d;letter-spacing:0.16px;">localhost</div>
<svg style="left:2705px;top:128px;" width="24" height="29" viewBox="0 0 24 29"><g fill="none" stroke="#7a7a7a" stroke-width="2.4"><path d="M15 7.5A10 10 0 1 0 21 13"/><path d="M11 1.5l5 5.5-5 5"/></g></svg>
<svg style="left:2790px;top:128px;" width="29" height="28" viewBox="0 0 29 28"><path d="M14.5 1v26M1 14h27" stroke="#8c8c8c" stroke-width="2.6"/></svg>
<svg style="left:2871px;top:138px;" width="26" height="18" viewBox="0 0 26 18"><path d="M2 1.5l7.5 7.5L2 16.5M14 1.5l7.5 7.5L14 16.5" fill="none" stroke="#8c8c8c" stroke-width="2.2"/></svg>
<div class="a" style="left:1776px;top:194px;width:1148px;height:1566px;background:linear-gradient(180deg,#27462e 0%,#23402a 25%,#1d3623 55%,#172a1b 85%,#142418 100%)"></div>
<div class="a" style="left:1776px;top:194px;width:1148px;height:1566px;background:linear-gradient(90deg,rgba(0,0,0,.12) 0%,rgba(0,0,0,0) 6%,rgba(0,0,0,0) 94%,rgba(0,0,0,.1) 100%)"></div>
<div class="a t" style="left:1809px;top:226.8px;font:normal bold 39px/39px 'Liberation Sans',sans-serif;color:#ffffff;letter-spacing:2.1px;-webkit-text-stroke:1.2px #fff">Buru Game</div>
<svg style="left:1894px;top:297px" width="896" height="1401"><defs><pattern id="dots" width="200" height="200" patternUnits="userSpaceOnUse" x="0" y="120"><g fill="#2a4f32"><circle cx="21.3" cy="18.7" r="13.5"/><circle cx="80.0" cy="30.7" r="7.7"/><circle cx="126.0" cy="7.8" r="10.3"/><circle cx="126.0" cy="207.8" r="10.3"/><circle cx="179.6" cy="18.7" r="5.8"/><circle cx="160.0" cy="50.8" r="3.9"/><circle cx="31.7" cy="63.0" r="5.8"/><circle cx="69.8" cy="75.0" r="3.9"/><circle cx="117.8" cy="68.5" r="13.5"/><circle cx="178.0" cy="86.8" r="9.7"/><circle cx="23.9" cy="112.4" r="3.9"/><circle cx="63.7" cy="112.8" r="9.7"/><circle cx="113.7" cy="128.6" r="7.7"/><circle cx="157.9" cy="124.7" r="5.8"/><circle cx="23.9" cy="160.6" r="7.7"/><circle cx="67.8" cy="171.2" r="5.8"/><circle cx="119.9" cy="174.7" r="3.9"/><circle cx="172.2" cy="171.2" r="9.7"/></g></pattern><linearGradient id="mg" x1="0" y1="0" x2="0" y2="1"><stop offset="0" stop-color="#27472f"/><stop offset="1" stop-color="#27482f"/></linearGradient></defs><rect width="896" height="1401" fill="url(#mg)"/><rect width="896" height="1401" fill="url(#dots)"/></svg>
<div class="a" style="left:1776px;top:1698px;width:1148px;height:62px;background:#172719;"></div>
<div class="a t" style="left:2090px;top:1716.0px;font:normal normal 27px/27px 'Liberation Sans',sans-serif;color:#a9b1aa;letter-spacing:-0.38px;">© 2025 Buru Card Game. All rights reserved.</div>
<div class="a" style="left:1958px;top:583px;width:768px;height:829px;border-radius:20px;background:#30633a;border:2px solid #45a04e;box-shadow:0 10px 30px rgba(0,0,0,.35)"></div>
<div class="a" style="left:2130px;top:645px;width:55px;height:80px;background:#fff;border-radius:2px"></div>
<div class="a t" style="left:2133px;top:648.8px;font:normal normal 12px/12px 'Liberation Sans',sans-serif;color:#111;letter-spacing:0px;">A</div>
<svg style="left:2132px;top:660px;" width="10" height="11" viewBox="0 0 10 11"><path d="M5 0C3 3 0 5 0 7c0 2 2 3 4 2l-1 2h4l-1-2c2 1 4 0 4-2 0-2-3-4-5-7z" fill="#111"/></svg>
<svg style="left:2141px;top:665px;" width="28" height="36" viewBox="0 0 28 36"><defs><linearGradient id="sp" x1="0" y1="0" x2="1" y2="1"><stop offset="0" stop-color="#444"/><stop offset="1" stop-color="#000"/></linearGradient></defs><path d="M14 0C9 8 0 13 0 20c0 5 5 8 10 5l-3 11h14l-3-11c5 3 10 0 10-5 0-7-9-12-14-20z" fill="url(#sp)"/></svg>
<svg style="left:2173px;top:704px;" width="10" height="11" viewBox="0 0 10 11"><path d="M5 0C3 3 0 5 0 7c0 2 2 3 4 2l-1 2h4l-1-2c2 1 4 0 4-2 0-2-3-4-5-7z" fill="#111"/></svg>
<div class="a t" style="left:2172px;top:712px;font:12px/12px 'Liberation Sans';color:#111;transform:rotate(180deg)">A</div>
<div class="a t" style="left:2222px;top:640.2px;font:normal bold 48px/48px 'Liberation Sans',sans-serif;color:#a4eeb1;letter-spacing:2.5px;-webkit-text-stroke:1.4px #a4eeb1">Buru Gahamu</div>
<div class="a t" style="left:2222px;top:701.5px;font:normal normal 30px/30px 'Liberation Sans',sans-serif;color:#dadde2;letter-spacing:0.69px;">Sign in to your account</div>
<div class="a" style="left:2009px;top:770px;width:666px;height:168px;border-radius:14px;background:#2a5234;border:2px solid #49aa52"></div>
<div class="a" style="left:2011px;top:852px;width:662px;height:2px;background:#49aa52;"></div>
<div class="a t" style="left:2035px;top:795.8px;font:normal normal 32px/32px 'Liberation Sans',sans-serif;color:#9ba3ae;letter-spacing:1.56px;">Email address</div>
<div class="a t" style="left:2035px;top:879.8px;font:normal normal 32px/32px 'Liberation Sans',sans-serif;color:#9ba3ae;letter-spacing:1.31px;">Password</div>
<div class="a" style="left:2010px;top:971px;width:32px;height:32px;border-radius:7px;background:#fff"></div>
<div class="a t" style="left:2056px;top:973.8px;font:normal normal 25px/25px 'Liberation Sans',sans-serif;color:#e6e8ea;letter-spacing:1.24px;">Remember me</div>
<div class="a t" style="left:2461px;top:973.8px;font:normal normal 25px/25px 'Liberation Sans',sans-serif;color:#79d98a;letter-spacing:0.87px;">Forgot password?</div>
<div class="a" style="left:2008px;top:1035px;width:668px;height:76px;border-radius:12px;background:#50a458;box-shadow:0 4px 10px rgba(0,0,0,.25)"></div>
<svg style="left:2040px;top:1055px;" width="28" height="37" viewBox="0 0 28 37"><path d="M6 14V9a8 8 0 0 1 16 0v5" fill="none" stroke="#74d98a" stroke-width="3.6"/><rect x="0" y="14" width="28" height="22" rx="3" fill="#74d98a"/></svg>
<div class="a t" style="left:2296px;top:1059.2px;font:normal normal 28px/28px 'Liberation Sans',sans-serif;color:#f4f6f4;letter-spacing:0.7px;-webkit-text-stroke:.5px #f4f6f4">Sign in</div>
<div class="a" style="left:2008px;top:1162px;width:204px;height:2px;background:#5d6a66;"></div>
<div class="a" style="left:2472px;top:1162px;width:204px;height:2px;background:#5d6a66;"></div>
<div class="a t" style="left:2228px;top:1148.5px;font:normal normal 30px/30px 'Liberation Sans',sans-serif;color:#d2d6da;letter-spacing:0.64px;">Or continue with</div>
<div class="a" style="left:2008px;top:1216px;width:668px;height:82px;border-radius:12px;background:#fff;border:2px solid #d4d6da"></div>
<svg style="left:2158px;top:1234px;" width="48" height="48" viewBox="0 0 48 48"><g><path d="M43.6 20.5H42V20H24v8h11.3C33.7 32.7 29.2 36 24 36c-6.6 0-12-5.4-12-12s5.4-12 12-12c3.1 0 5.8 1.2 7.9 3.1l5.7-5.7C34 6.1 29.3 4 24 4 13 4 4 13 4 24s9 20 20 20 20-9 20-20c0-1.3-.1-2.4-.4-3.5z" fill="#FFC107"/><path d="M6.3 14.7l6.6 4.8C14.7 15.1 19 12 24 12c3.1 0 5.8 1.2 7.9 3.1l5.7-5.7C34 6.1 29.3 4 24 4 16.3 4 9.7 8.3 6.3 14.7z" fill="#FF3D00"/><path d="M24 44c5.2 0 9.9-2 13.4-5.2l-6.2-5.2C29.2 35.1 26.7 36 24 36c-5.2 0-9.6-3.3-11.3-7.9l-6.5 5C9.5 39.6 16.2 44 24 44z" fill="#4CAF50"/><path d="M43.6 20.5H42V20H24v8h11.3c-.8 2.2-2.2 4.2-4.1 5.6l6.2 5.2C37 39.2 44 34 44 24c0-1.3-.1-2.4-.4-3.5z" fill="#1976D2"/></g></svg>
<div class="a t" style="left:2222px;top:1240.0px;font:normal normal 33px/33px 'Liberation Sans',sans-serif;color:#1b2134;letter-spacing:0.98px;">Sign in with Google</div>
<div class="a t" style="left:2152px;top:1333.8px;font:normal normal 25px/25px 'Liberation Sans',sans-serif;color:#d2d6da;letter-spacing:0.77px;">Don&#x27;t have an account?</div>
<div class="a t" style="left:2442px;top:1333.8px;font:normal bold 25px/25px 'Liberation Sans',sans-serif;color:#74d685;letter-spacing:-0.38px;">Sign up</div>
<div class="a" style="left:2908px;top:298px;width:16px;height:1306px;border-radius:8px;background:#4b8a60"></div>
<div class="a" style="left:2788px;top:1626px;width:103px;height:103px;border-radius:50%;background:#5ec46c;border:4px solid #a8eeb0;box-shadow:0 4px 12px rgba(0,0,0,.3)"></div>
<svg style="left:2816px;top:1655px;" width="46" height="46" viewBox="0 0 46 46"><path d="M4 16h7l10-8v30l-10-8H4z" fill="none" stroke="#fff" stroke-width="3.6" stroke-linejoin="round"/><path d="M28 6c9 3 13 10 13 17s-4 14-13 17c-3-5-4-11-4-17s1-12 4-17z" fill="#fff"/></svg>
</div></div>
<div class="a" style="left:84px;top:1778px;width:2770px;height:123px;border-radius:30px;background:linear-gradient(90deg,#5d6656 0%,#66645a 8%,#77695c 18%,#8a7c6e 28%,#7c8470 38%,#8b9580 47%,#7d8870 55%,#8e977f 62%,#8a8f76 70%,#a09a7a 75%,#8e9478 80%,#94886c 88%,#8a7660 96%,#7a6a58 100%);border:2px solid rgba(200,205,190,.3);box-shadow:inset 0 0 0 1px rgba(0,0,0,.15)"></div>
<div class="a" style="left:103px;top:1797px;width:76px;height:76px;border-radius:17px;background:#e6e9ef;overflow:hidden;"><svg width="76" height="76" style="position:absolute;left:0;top:0"><defs><linearGradient id="fb" x1="0" y1="0" x2="0" y2="1"><stop offset="0" stop-color="#5ac2fb"/><stop offset="1" stop-color="#2a72e8"/></linearGradient><linearGradient id="fw" x1="0" y1="0" x2="0" y2="1"><stop offset="0" stop-color="#f4f5f7"/><stop offset="1" stop-color="#d8dce6"/></linearGradient></defs><rect width="76" height="76" fill="url(#fw)"/><path d="M0 0H42C37 14 34 30 33 47H43C43 58 45 68 48 76H0Z" fill="url(#fb)"/><path d="M15 56c14 9 32 9 46 0" fill="none" stroke="#1f2b3a" stroke-width="2.6" stroke-linecap="round"/><rect x="19" y="22" width="3.5" height="8" rx="1.7" fill="#1f2b3a"/><rect x="54" y="22" width="3.5" height="8" rx="1.7" fill="#1f2b3a"/></svg></div>
<div class="a" style="left:136px;top:1889px;width:8px;height:8px;border-radius:50%;background:#1a1a1a"></div>
<div class="a" style="left:207px;top:1797px;width:76px;height:76px;border-radius:17px;background:linear-gradient(#d8d8d8,#c4c4c4);overflow:hidden;"><svg width="76" height="76"><rect x="12" y="12" width="15" height="15" rx="4" fill="#5fd35a"/><rect x="31" y="12" width="15" height="15" rx="4" fill="#f8c33a"/><rect x="50" y="12" width="15" height="15" rx="4" fill="#f39a32"/><rect x="12" y="31" width="15" height="15" rx="4" fill="#e0423a"/><rect x="31" y="31" width="15" height="15" rx="4" fill="#c8c8cc"/><rect x="50" y="31" width="15" height="15" rx="4" fill="#ef5465"/><rect x="12" y="50" width="15" height="15" rx="4" fill="#a24fd8"/><rect x="31" y="50" width="15" height="15" rx="4" fill="#3a9cf0"/><rect x="50" y="50" width="15" height="15" rx="4" fill="#4fd1a5"/></svg></div>
<div class="a" style="left:309px;top:1797px;width:76px;height:76px;border-radius:17px;background:linear-gradient(#fafafa,#e4e4e4);overflow:hidden;"><svg width="76" height="76"><circle cx="38" cy="38" r="32" fill="#2f8ff0"/><circle cx="38" cy="38" r="32" fill="url(#sg)"/><line x1="65.0" y1="38.0" x2="69.0" y2="38.0" stroke="#fff" stroke-width="1" opacity=".8"/><line x1="64.6" y1="42.7" x2="68.5" y2="43.4" stroke="#fff" stroke-width="1" opacity=".8"/><line x1="63.4" y1="47.2" x2="67.1" y2="48.6" stroke="#fff" stroke-width="1" opacity=".8"/><line x1="61.4" y1="51.5" x2="64.8" y2="53.5" stroke="#fff" stroke-width="1" opacity=".8"/><line x1="58.7" y1="55.4" x2="61.7" y2="57.9" stroke="#fff" stroke-width="1" opacity=".8"/><line x1="55.4" y1="58.7" x2="57.9" y2="61.7" stroke="#fff" stroke-width="1" opacity=".8"/><line x1="51.5" y1="61.4" x2="53.5" y2="64.8" stroke="#fff" stroke-width="1" opacity=".8"/><line x1="47.2" y1="63.4" x2="48.6" y2="67.1" stroke="#fff" stroke-width="1" opacity=".8"/><line x1="42.7" y1="64.6" x2="43.4" y2="68.5" stroke="#fff" stroke-width="1" opacity=".8"/><line x1="38.0" y1="65.0" x2="38.0" y2="69.0" stroke="#fff" stroke-width="1" opacity=".8"/><line x1="33.3" y1="64.6" x2="32.6" y2="68.5" stroke="#fff" stroke-width="1" opacity=".8"/><line x1="28.8" y1="63.4" x2="27.4" y2="67.1" stroke="#fff" stroke-width="1" opacity=".8"/><line x1="24.5" y1="61.4" x2="22.5" y2="64.8" stroke="#fff" stroke-width="1" opacity=".8"/><line x1="20.6" y1="58.7" x2="18.1" y2="61.7" stroke="#fff" stroke-width="1" opacity=".8"/><line x1="17.3" y1="55.4" x2="14.3" y2="57.9" stroke="#fff" stroke-width="1" opacity=".8"/><line x1="14.6" y1="51.5" x2="11.2" y2="53.5" stroke="#fff" stroke-width="1" opacity=".8"/><line x1="12.6" y1="47.2" x2="8.9" y2="48.6" stroke="#fff" stroke-width="1" opacity=".8"/><line x1="11.4" y1="42.7" x2="7.5" y2="43.4" stroke="#fff" stroke-width="1" opacity=".8"/><line x1="11.0" y1="38.0" x2="7.0" y2="38.0" stroke="#fff" stroke-width="1" opacity=".8"/><line x1="11.4" y1="33.3" x2="7.5" y2="32.6" stroke="#fff" stroke-width="1" opacity=".8"/><line x1="12.6" y1="28.8" x2="8.9" y2="27.4" stroke="#fff" stroke-width="1" opacity=".8"/><line x1="14.6" y1="24.5" x2="11.2" y2="22.5" stroke="#fff" stroke-width="1" opacity=".8"/><line x1="17.3" y1="20.6" x2="14.3" y2="18.1" stroke="#fff" stroke-width="1" opacity=".8"/><line x1="20.6" y1="17.3" x2="18.1" y2="14.3" stroke="#fff" stroke-width="1" opacity=".8"/><line x1="24.5" y1="14.6" x2="22.5" y2="11.2" stroke="#fff" stroke-width="1" opacity=".8"/><line x1="28.8" y1="12.6" x2="27.4" y2="8.9" stroke="#fff" stroke-width="1" opacity=".8"/><line x1="33.3" y1="11.4" x2="32.6" y2="7.5" stroke="#fff" stroke-width="1" opacity=".8"/><line x1="38.0" y1="11.0" x2="38.0" y2="7.0" stroke="#fff" stroke-width="1" opacity=".8"/><line x1="42.7" y1="11.4" x2="43.4" y2="7.5" stroke="#fff" stroke-width="1" opacity=".8"/><line x1="47.2" y1="12.6" x2="48.6" y2="8.9" stroke="#fff" stroke-width="1" opacity=".8"/><line x1="51.5" y1="14.6" x2="53.5" y2="11.2" stroke="#fff" stroke-width="1" opacity=".8"/><line x1="55.4" y1="17.3" x2="57.9" y2="14.3" stroke="#fff" stroke-width="1" opacity=".8"/><line x1="58.7" y1="20.6" x2="61.7" y2="18.1" stroke="#fff" stroke-width="1" opacity=".8"/><line x1="61.4" y1="24.5" x2="64.8" y2="22.5" stroke="#fff" stroke-width="1" opacity=".8"/><line x1="63.4" y1="28.8" x2="67.1" y2="27.4" stroke="#fff" stroke-width="1" opacity=".8"/><line x1="64.6" y1="33.3" x2="68.5" y2="32.6" stroke="#fff" stroke-width="1" opacity=".8"/><path d="M59 17L41 41 35 35z" fill="#f2453d"/><path d="M17 59L35 35 41 41z" fill="#fff"/></svg></div>
<div class="a" style="left:342px;top:1889px;width:8px;height:8px;border-radius:50%;background:#1a1a1a"></div>
<div class="a" style="left:411px;top:1797px;width:76px;height:76px;border-radius:17px;background:#20123a;overflow:hidden;"><svg width="76" height="76"><defs><linearGradient id="ffo" x1="1" y1="0" x2="0" y2="1"><stop offset="0" stop-color="#ffd54a"/><stop offset=".45" stop-color="#ff7a2e"/><stop offset="1" stop-color="#e8306e"/></linearGradient><radialGradient id="ffp" cx=".4" cy=".6" r=".7"><stop offset="0" stop-color="#5b6bf0"/><stop offset="1" stop-color="#9b3fd0"/></radialGradient></defs><path d="M52 8c12 8 18 20 17 34-1 18-15 30-31 30C20 72 7 58 7 42c0-8 3-15 7-20 0 5 2 8 5 10 2-6 6-10 10-11-2 4-1 7 1 9 4-3 10-3 14 1 3 3 4 8 3 12 6-6 8-16 5-35z" fill="url(#ffo)"/><circle cx="40" cy="44" r="14" fill="url(#ffp)"/><path d="M18 36c6-4 14-4 18 0-6 0-10 2-12 6-3-2-5-4-6-6z" fill="#ffb03a"/></svg></div>
<div class="a" style="left:513px;top:1797px;width:76px;height:76px;border-radius:17px;background:#fbfbfb;overflow:hidden;"><svg width="76" height="76"><ellipse cx="38" cy="22" rx="9" ry="15" fill="#f5a623" opacity=".85" transform="rotate(0 38 38)"/><ellipse cx="38" cy="22" rx="9" ry="15" fill="#f8d12f" opacity=".85" transform="rotate(45 38 38)"/><ellipse cx="38" cy="22" rx="9" ry="15" fill="#b3d84a" opacity=".85" transform="rotate(90 38 38)"/><ellipse cx="38" cy="22" rx="9" ry="15" fill="#5cc15a" opacity=".85" transform="rotate(135 38 38)"/><ellipse cx="38" cy="22" rx="9" ry="15" fill="#4bb4d8" opacity=".85" transform="rotate(180 38 38)"/><ellipse cx="38" cy="22" rx="9" ry="15" fill="#5978e0" opacity=".85" transform="rotate(225 38 38)"/><ellipse cx="38" cy="22" rx="9" ry="15" fill="#9a63d6" opacity=".85" transform="rotate(270 38 38)"/><ellipse cx="38" cy="22" rx="9" ry="15" fill="#e0517a" opacity=".85" transform="rotate(315 38 38)"/></svg></div>
<div class="a" style="left:617px;top:1797px;width:76px;height:76px;border-radius:17px;background:#fbfbfb;overflow:hidden;"><div class="a" style="left:0;top:0;width:76px;height:20px;background:#ee5b4e"></div><div class="a t" style="left:21px;top:3px;font:bold 15px/15px 'Liberation Sans';color:#fff;letter-spacing:.5px">APR</div><div class="a t" style="left:13px;top:25px;font:normal 45px/45px 'Liberation Sans';color:#222;letter-spacing:-1px">19</div></div>
<div class="a" style="left:720px;top:1797px;width:76px;height:76px;border-radius:17px;background:#fbfbfb;overflow:hidden;"><svg width="76" height="76"><circle cx="14" cy="17" r="5" fill="none" stroke="#2f7cf6" stroke-width="2"/><circle cx="14" cy="17" r="3" fill="#2f7cf6"/><line x1="26" y1="17" x2="66" y2="17" stroke="#c8c8c8" stroke-width="1.5"/><circle cx="14" cy="36" r="5" fill="none" stroke="#e64a3c" stroke-width="2"/><circle cx="14" cy="36" r="3" fill="#e64a3c"/><line x1="26" y1="36" x2="66" y2="36" stroke="#c8c8c8" stroke-width="1.5"/><circle cx="14" cy="55" r="5" fill="none" stroke="#f0a030" stroke-width="2"/><circle cx="14" cy="55" r="3" fill="#f0a030"/><line x1="26" y1="55" x2="66" y2="55" stroke="#c8c8c8" stroke-width="1.5"/></svg></div>
<div class="a" style="left:773px;top:1790px;width:32px;height:32px;border-radius:50%;background:#e5483f"></div>
<div class="a t" style="left:782px;top:1796.3px;font:normal normal 22px/22px 'Liberation Sans',sans-serif;color:#fff;letter-spacing:0px;">1</div>
<div class="a" style="left:821px;top:1797px;width:76px;height:76px;border-radius:17px;background:linear-gradient(#f9d548 0%,#f5c830 22%,#f3f1ec 22%,#ecebe6 100%);overflow:hidden;"><svg width="76" height="76"><line x1="0" y1="39" x2="76" y2="39" stroke="#d0cfca" stroke-width="1.5"/><line x1="0" y1="58" x2="76" y2="58" stroke="#d0cfca" stroke-width="1.5"/></svg></div>
<div class="a" style="left:925px;top:1797px;width:76px;height:76px;border-radius:17px;background:#fbfbfb;overflow:hidden;"><svg width="76" height="76"><circle cx="30" cy="48" r="20" fill="#ef6a4a"/><rect x="25" y="9" width="41" height="41" rx="5" fill="#5ab8ec"/><path d="M14 54c6-18 14-24 16-12s8 8 12-2 10-6 8 2 8 0 14-4" fill="none" stroke="#18365e" stroke-width="4" stroke-linecap="round"/></svg></div>
<div class="a" style="left:1026px;top:1797px;width:76px;height:76px;border-radius:17px;background:linear-gradient(#e8e8e8,#a8a8a8);overflow:hidden;"><svg width="76" height="76"><circle cx="38" cy="38" r="31" fill="#6a6a6a"/><rect x="36.5" y="6" width="3" height="6" fill="#5a5a5a" transform="rotate(0.0 38 38)"/><rect x="36.5" y="6" width="3" height="6" fill="#5a5a5a" transform="rotate(7.5 38 38)"/><rect x="36.5" y="6" width="3" height="6" fill="#5a5a5a" transform="rotate(15.0 38 38)"/><rect x="36.5" y="6" width="3" height="6" fill="#5a5a5a" transform="rotate(22.5 38 38)"/><rect x="36.5" y="6" width="3" height="6" fill="#5a5a5a" transform="rotate(30.0 38 38)"/><rect x="36.5" y="6" width="3" height="6" fill="#5a5a5a" transform="rotate(37.5 38 38)"/><rect x="36.5" y="6" width="3" height="6" fill="#5a5a5a" transform="rotate(45.0 38 38)"/><rect x="36.5" y="6" width="3" height="6" fill="#5a5a5a" transform="rotate(52.5 38 38)"/><rect x="36.5" y="6" width="3" height="6" fill="#5a5a5a" transform="rotate(60.0 38 38)"/><rect x="36.5" y="6" width="3" height="6" fill="#5a5a5a" transform="rotate(67.5 38 38)"/><rect x="36.5" y="6" width="3" height="6" fill="#5a5a5a" transform="rotate(75.0 38 38)"/><rect x="36.5" y="6" width="3" height="6" fill="#5a5a5a" transform="rotate(82.5 38 38)"/><rect x="36.5" y="6" width="3" height="6" fill="#5a5a5a" transform="rotate(90.0 38 38)"/><rect x="36.5" y="6" width="3" height="6" fill="#5a5a5a" transform="rotate(97.5 38 38)"/><rect x="36.5" y="6" width="3" height="6" fill="#5a5a5a" transform="rotate(105.0 38 38)"/><rect x="36.5" y="6" width="3" height="6" fill="#5a5a5a" transform="rotate(112.5 38 38)"/><rect x="36.5" y="6" width="3" height="6" fill="#5a5a5a" transform="rotate(120.0 38 38)"/><rect x="36.5" y="6" width="3" height="6" fill="#5a5a5a" transform="rotate(127.5 38 38)"/><rect x="36.5" y="6" width="3" height="6" fill="#5a5a5a" transform="rotate(135.0 38 38)"/><rect x="36.5" y="6" width="3" height="6" fill="#5a5a5a" transform="rotate(142.5 38 38)"/><rect x="36.5" y="6" width="3" height="6" fill="#5a5a5a" transform="rotate(150.0 38 38)"/><rect x="36.5" y="6" width="3" height="6" fill="#5a5a5a" transform="rotate(157.5 38 38)"/><rect x="36.5" y="6" width="3" height="6" fill="#5a5a5a" transform="rotate(165.0 38 38)"/><rect x="36.5" y="6" width="3" height="6" fill="#5a5a5a" transform="rotate(172.5 38 38)"/><rect x="36.5" y="6" width="3" height="6" fill="#5a5a5a" transform="rotate(180.0 38 38)"/><rect x="36.5" y="6" width="3" height="6" fill="#5a5a5a" transform="rotate(187.5 38 38)"/><rect x="36.5" y="6" width="3" height="6" fill="#5a5a5a" transform="rotate(195.0 38 38)"/><rect x="36.5" y="6" width="3" height="6" fill="#5a5a5a" transform="rotate(202.5 38 38)"/><rect x="36.5" y="6" width="3" height="6" fill="#5a5a5a" transform="rotate(210.0 38 38)"/><rect x="36.5" y="6" width="3" height="6" fill="#5a5a5a" transform="rotate(217.5 38 38)"/><rect x="36.5" y="6" width="3" height="6" fill="#5a5a5a" transform="rotate(225.0 38 38)"/><rect x="36.5" y="6" width="3" height="6" fill="#5a5a5a" transform="rotate(232.5 38 38)"/><rect x="36.5" y="6" width="3" height="6" fill="#5a5a5a" transform="rotate(240.0 38 38)"/><rect x="36.5" y="6" width="3" height="6" fill="#5a5a5a" transform="rotate(247.5 38 38)"/><rect x="36.5" y="6" width="3" height="6" fill="#5a5a5a" transform="rotate(255.0 38 38)"/><rect x="36.5" y="6" width="3" height="6" fill="#5a5a5a" transform="rotate(262.5 38 38)"/><rect x="36.5" y="6" width="3" height="6" fill="#5a5a5a" transform="rotate(270.0 38 38)"/><rect x="36.5" y="6" width="3" height="6" fill="#5a5a5a" transform="rotate(277.5 38 38)"/><rect x="36.5" y="6" width="3" height="6" fill="#5a5a5a" transform="rotate(285.0 38 38)"/><rect x="36.5" y="6" width="3" height="6" fill="#5a5a5a" transform="rotate(292.5 38 38)"/><rect x="36.5" y="6" width="3" height="6" fill="#5a5a5a" transform="rotate(300.0 38 38)"/><rect x="36.5" y="6" width="3" height="6" fill="#5a5a5a" transform="rotate(307.5 38 38)"/><rect x="36.5" y="6" width="3" height="6" fill="#5a5a5a" transform="rotate(315.0 38 38)"/><rect x="36.5" y="6" width="3" height="6" fill="#5a5a5a" transform="rotate(322.5 38 38)"/><rect x="36.5" y="6" width="3" height="6" fill="#5a5a5a" transform="rotate(330.0 38 38)"/><rect x="36.5" y="6" width="3" height="6" fill="#5a5a5a" transform="rotate(337.5 38 38)"/><rect x="36.5" y="6" width="3" height="6" fill="#5a5a5a" transform="rotate(345.0 38 38)"/><rect x="36.5" y="6" width="3" height="6" fill="#5a5a5a" transform="rotate(352.5 38 38)"/><circle cx="38" cy="38" r="25" fill="#8a8a8a"/><circle cx="38" cy="38" r="20" fill="#5a5a5a"/><circle cx="38" cy="38" r="16" fill="#9a9a9a"/><path d="M38 38V20M38 38l15 9M38 38l-15 9" stroke="#555" stroke-width="5"/><circle cx="38" cy="38" r="5" fill="#777"/></svg></div>
<div class="a" style="left:1060px;top:1889px;width:8px;height:8px;border-radius:50%;background:#1a1a1a"></div>
<div class="a" style="left:1082px;top:1790px;width:32px;height:32px;border-radius:50%;background:#e5483f"></div>
<div class="a t" style="left:1091px;top:1796.3px;font:normal normal 22px/22px 'Liberation Sans',sans-serif;color:#fff;letter-spacing:0px;">2</div>
<div class="a" style="left:1129px;top:1797px;width:76px;height:76px;border-radius:17px;background:#4a4a4a;overflow:hidden;"><svg width="76" height="76"><path d="M57 12L18 26v14l39-14z" fill="#f9a33a"/><path d="M18 40l39 14v0L57 40 18 26z" fill="#e88f26"/><path d="M57 40L18 54v14l39-14z" fill="#f9a33a"/></svg></div>
<div class="a" style="left:1161px;top:1889px;width:8px;height:8px;border-radius:50%;background:#1a1a1a"></div>
<div class="a" style="left:1232px;top:1797px;width:76px;height:76px;border-radius:17px;background:linear-gradient(#e4e4e2,#cfcfcc);overflow:hidden;"><svg width="76" height="76"><rect x="23" y="6" width="30" height="64" rx="6" fill="#1a1a1a"/><rect x="25.5" y="8.5" width="25" height="59" rx="4" fill="url(#iph)"/><defs><linearGradient id="iph" x1="0" y1="0" x2="0" y2="1"><stop offset="0" stop-color="#f0a8a0"/><stop offset=".5" stop-color="#e07a70"/><stop offset=".55" stop-color="#4a90c0"/><stop offset="1" stop-color="#1a4a80"/></linearGradient></defs><rect x="33" y="11" width="10" height="3" rx="1.5" fill="#111"/></svg></div>
<div class="a" style="left:1345px;top:1794px;width:2px;height:92px;background:rgba(40,40,30,.55);"></div>
<div class="a" style="left:1382px;top:1797px;width:76px;height:76px;border-radius:17px;background:linear-gradient(#e0e0e0,#b8b8b8);overflow:hidden;"><svg width="76" height="76"><rect x="5" y="5" width="66" height="66" rx="12" fill="#111"/><rect x="10" y="10" width="56" height="56" rx="6" fill="#16241f"/><line x1="14" y1="12" x2="14" y2="64" stroke="#2a4a40" stroke-width="1"/><line x1="24" y1="12" x2="24" y2="64" stroke="#2a4a40" stroke-width="1"/><line x1="34" y1="12" x2="34" y2="64" stroke="#2a4a40" stroke-width="1"/><line x1="44" y1="12" x2="44" y2="64" stroke="#2a4a40" stroke-width="1"/><line x1="54" y1="12" x2="54" y2="64" stroke="#2a4a40" stroke-width="1"/><line x1="64" y1="12" x2="64" y2="64" stroke="#2a4a40" stroke-width="1"/><line x1="12" y1="14" x2="64" y2="14" stroke="#2a4a40" stroke-width="1"/><line x1="12" y1="24" x2="64" y2="24" stroke="#2a4a40" stroke-width="1"/><line x1="12" y1="34" x2="64" y2="34" stroke="#2a4a40" stroke-width="1"/><line x1="12" y1="44" x2="64" y2="44" stroke="#2a4a40" stroke-width="1"/><line x1="12" y1="54" x2="64" y2="54" stroke="#2a4a40" stroke-width="1"/><line x1="12" y1="64" x2="64" y2="64" stroke="#2a4a40" stroke-width="1"/><path d="M12 42h10l4-20 5 32 4-18 4 6 6-4 6 4 8-2" fill="none" stroke="#6fe0c0" stroke-width="1.8"/></svg></div>
<div class="a" style="left:1414px;top:1889px;width:8px;height:8px;border-radius:50%;background:#1a1a1a"></div>
<div class="a" style="left:1482px;top:1797px;width:76px;height:76px;border-radius:17px;background:#fbfbfb;overflow:hidden;"><svg width="76" height="76"><path d="M54 8l14 7v46l-14 7-30-27-13 10-5-3V28l5-3 13 10z" fill="#2f80d6"/><path d="M54 8v60L24 41l-13 10-5-3 48-40z" fill="#3d9be9" opacity=".7"/><path d="M54 22v32L33 38z" fill="#fbfbfb"/></svg></div>
<div class="a" style="left:1515px;top:1889px;width:8px;height:8px;border-radius:50%;background:#1a1a1a"></div>
<div class="a" style="left:1586px;top:1797px;width:76px;height:76px;border-radius:17px;background:linear-gradient(#d8dde2,#9aa0a6);overflow:hidden;"><div class="a" style="left:4px;top:4px;width:68px;height:68px;border-radius:14px;background:#111"></div><div class="a" style="left:9px;top:9px;width:58px;height:58px;border-radius:10px;background:#2a2a2a"></div><div class="a t" style="left:12px;top:12px;font:bold 18px/18px 'Liberation Mono';color:#eee">&gt;_</div></div>
<div class="a" style="left:1618px;top:1889px;width:8px;height:8px;border-radius:50%;background:#1a1a1a"></div>
<div class="a" style="left:1689px;top:1797px;width:76px;height:76px;border-radius:17px;background:#050505;overflow:hidden;"><svg width="76" height="76"><path d="M38 10l24 14v28L38 66 14 52V24z" fill="#c8c8c8"/><path d="M38 10l24 14-24 14-24-14z" fill="#f2f2f2"/><path d="M38 38v28L14 52V24z" fill="#8a8a8a"/><path d="M38 38l24-14v28z" fill="#dcdcdc"/><path d="M38 10v28l24-14z" fill="#555" opacity=".6"/></svg></div>
<div class="a" style="left:1721px;top:1889px;width:8px;height:8px;border-radius:50%;background:#1a1a1a"></div>
<div class="a" style="left:1791px;top:1797px;width:76px;height:76px;border-radius:17px;background:linear-gradient(#f46a78,#e63a4a);overflow:hidden;"><svg width="76" height="76"><path d="M30 22l26-6v34" fill="none" stroke="#fff" stroke-width="5"/><path d="M30 22v32" stroke="#fff" stroke-width="5"/><ellipse cx="24" cy="55" rx="8" ry="6.5" fill="#fff"/><ellipse cx="50" cy="51" rx="8" ry="6.5" fill="#fff"/></svg></div>
<div class="a" style="left:1823px;top:1889px;width:8px;height:8px;border-radius:50%;background:#1a1a1a"></div>
<div class="a" style="left:1892px;top:1797px;width:76px;height:76px;border-radius:17px;background:#b3231a;overflow:hidden;"><svg width="76" height="76"><path d="M38 12c-4 0-4 10 0 22 4 12 12 22 20 24 4 1 6-2 2-4-8-4-28-2-40 6-4 3-2 6 2 4 8-6 14-20 18-34 2-10 2-18-2-18z" fill="none" stroke="#fff" stroke-width="3.2"/></svg></div>
<div class="a" style="left:1925px;top:1889px;width:8px;height:8px;border-radius:50%;background:#1a1a1a"></div>
<div class="a" style="left:1995px;top:1797px;width:76px;height:76px;border-radius:17px;background:#050505;overflow:hidden;"><div class="a t" style="left:10px;top:9px;font:normal 30px/30px 'Liberation Sans';color:#fff;letter-spacing:1px">XP</div><div class="a t" style="left:8px;top:36px;font:normal 30px/30px 'Liberation Sans';color:#fff">pen</div></div>
<div class="a" style="left:2028px;top:1889px;width:8px;height:8px;border-radius:50%;background:#1a1a1a"></div>
<div class="a" style="left:2099px;top:1797px;width:76px;height:76px;border-radius:17px;background:#3d8fe8;overflow:hidden;"><svg width="76" height="76"><path d="M12 38h42c2 0 4-3 6-3 2 0 5 2 6 3-2 1-4 2-5 4-4 14-16 20-30 20-12 0-19-10-19-24z" fill="#fff"/><g fill="#fff"><rect x="18" y="31" width="6" height="5"/><rect x="25" y="31" width="6" height="5"/><rect x="32" y="31" width="6" height="5"/><rect x="39" y="31" width="6" height="5"/><rect x="25" y="24" width="6" height="5"/><rect x="32" y="24" width="6" height="5"/><rect x="39" y="24" width="6" height="5"/><rect x="39" y="17" width="6" height="5"/></g></svg></div>
<div class="a" style="left:2132px;top:1889px;width:8px;height:8px;border-radius:50%;background:#1a1a1a"></div>
<div class="a" style="left:2201px;top:1797px;width:76px;height:76px;border-radius:17px;background:#d97757;overflow:hidden;"><svg width="76" height="76"><line x1="38" y1="38" x2="65.4" y2="43.6" stroke="#fbeee8" stroke-width="4.5" stroke-linecap="round"/><line x1="38" y1="38" x2="60.3" y2="54.9" stroke="#fbeee8" stroke-width="4.5" stroke-linecap="round"/><line x1="38" y1="38" x2="50.8" y2="62.9" stroke="#fbeee8" stroke-width="4.5" stroke-linecap="round"/><line x1="38" y1="38" x2="38.7" y2="66.0" stroke="#fbeee8" stroke-width="4.5" stroke-linecap="round"/><line x1="38" y1="38" x2="26.5" y2="63.5" stroke="#fbeee8" stroke-width="4.5" stroke-linecap="round"/><line x1="38" y1="38" x2="16.5" y2="56.0" stroke="#fbeee8" stroke-width="4.5" stroke-linecap="round"/><line x1="38" y1="38" x2="10.9" y2="44.9" stroke="#fbeee8" stroke-width="4.5" stroke-linecap="round"/><line x1="38" y1="38" x2="10.6" y2="32.4" stroke="#fbeee8" stroke-width="4.5" stroke-linecap="round"/><line x1="38" y1="38" x2="15.7" y2="21.1" stroke="#fbeee8" stroke-width="4.5" stroke-linecap="round"/><line x1="38" y1="38" x2="25.2" y2="13.1" stroke="#fbeee8" stroke-width="4.5" stroke-linecap="round"/><line x1="38" y1="38" x2="37.3" y2="10.0" stroke="#fbeee8" stroke-width="4.5" stroke-linecap="round"/><line x1="38" y1="38" x2="49.5" y2="12.5" stroke="#fbeee8" stroke-width="4.5" stroke-linecap="round"/><line x1="38" y1="38" x2="59.5" y2="20.0" stroke="#fbeee8" stroke-width="4.5" stroke-linecap="round"/><line x1="38" y1="38" x2="65.1" y2="31.1" stroke="#fbeee8" stroke-width="4.5" stroke-linecap="round"/></svg></div>
<div class="a" style="left:2234px;top:1889px;width:8px;height:8px;border-radius:50%;background:#1a1a1a"></div>
<div class="a" style="left:2303px;top:1797px;width:76px;height:76px;border-radius:17px;background:#fbfbfb;overflow:hidden;"><svg width="76" height="76"><circle cx="38" cy="38" r="30" fill="#34a853"/><path d="M38 8a30 30 0 0 1 26 15H38a15 15 0 0 0-13 7.5L12 23A30 30 0 0 1 38 8z" fill="#ea4335"/><path d="M64 23a30 30 0 0 1-26 45l13-22.5A15 15 0 0 0 51 30z" fill="#fbbc04"/><circle cx="38" cy="38" r="14" fill="#fff"/><circle cx="38" cy="38" r="11" fill="#4285f4"/></svg></div>
<div class="a" style="left:2336px;top:1889px;width:8px;height:8px;border-radius:50%;background:#1a1a1a"></div>
<div class="a" style="left:2407px;top:1797px;width:76px;height:76px;border-radius:17px;background:#4a4a4a;overflow:hidden;"><svg width="76" height="76"><path d="M57 12L18 26v14l39-14z" fill="#f9a33a"/><path d="M18 40l39 14v0L57 40 18 26z" fill="#e88f26"/><path d="M57 40L18 54v14l39-14z" fill="#f9a33a"/></svg></div>
<div class="a" style="left:2440px;top:1889px;width:8px;height:8px;border-radius:50%;background:#1a1a1a"></div>
<div class="a" style="left:2519px;top:1794px;width:2px;height:92px;background:rgba(40,40,30,.55);"></div>
<div class="a" style="left:2569px;top:1790px;width:36px;height:12px;background:#f0f0f0;box-shadow:0 1px 2px rgba(0,0,0,.2)"></div>
<div class="a" style="left:2566px;top:1798px;width:54px;height:80px;background:#f7f7f7;box-shadow:0 2px 4px rgba(0,0,0,.3)"></div>
<div class="a" style="left:2565px;top:1799px;width:5px;height:79px;background:linear-gradient(90deg,#555,#111);"></div>
<div class="a" style="left:2573px;top:1806px;width:22px;height:3px;background:#333;"></div>
<div class="a" style="left:2573px;top:1811px;width:16px;height:2px;background:#555;"></div>
<div class="a" style="left:2574px;top:1827px;width:40px;height:13px;background:#e9b347;"></div>
<div class="a" style="left:2574px;top:1850px;width:40px;height:14px;background:#e9b347;"></div>
<div class="a" style="left:2573px;top:1871px;width:25px;height:2px;background:#333;"></div>
<div class="a" style="left:2600px;top:1799px;width:20px;height:22px;background:linear-gradient(225deg,transparent 48%,#e8e8e8 50%,#fff 100%)"></div>
<div class="a" style="left:2651px;top:1810px;width:88px;height:50px;background:#f4f6f8;box-shadow:0 1px 3px rgba(0,0,0,.25)"></div>
<div class="a" style="left:2651px;top:1810px;width:88px;height:3px;background:#3b8be6;"></div>
<div class="a" style="left:2651px;top:1813px;width:17px;height:47px;background:#e6e9ee;"></div>
<div class="a" style="left:2651px;top:1856px;width:17px;height:4px;background:#5fbf8a;"></div>
<div class="a" style="left:2679px;top:1837px;width:48px;height:4px;background:#23303d;"></div>
<div class="a" style="left:2696px;top:1821px;width:10px;height:6px;background:#9cc8ec;"></div>
<div class="a" style="left:2709px;top:1849px;width:28px;height:28px;border-radius:7px;background:#3d8fe8"></div>
<svg style="left:2709px;top:1849px" width="28" height="28" viewBox="0 0 76 76"><path d="M12 38h42c2 0 4-3 6-3 2 0 5 2 6 3-2 1-4 2-5 4-4 14-16 20-30 20-12 0-19-10-19-24z" fill="#fff"/><g fill="#fff"><rect x="18" y="31" width="6" height="5"/><rect x="25" y="31" width="6" height="5"/><rect x="32" y="31" width="6" height="5"/><rect x="39" y="31" width="6" height="5"/><rect x="32" y="24" width="6" height="5"/><rect x="39" y="24" width="6" height="5"/></g></svg>
<svg style="left:2763px;top:1789px" width="70" height="90" viewBox="0 0 70 90"><defs><linearGradient id="tr" x1="0" y1="0" x2="1" y2="0"><stop offset="0" stop-color="#cfcfcf"/><stop offset=".45" stop-color="#f2f2f2"/><stop offset="1" stop-color="#d6d6d6"/></linearGradient></defs><path d="M2 12h66l-7 72c-1 4-4 6-8 6H17c-4 0-7-2-8-6z" fill="url(#tr)" opacity=".92"/><path d="M8 14c4-8 10-12 16-8 4-6 12-6 16 0 6-4 14-2 18 4 4-2 8 0 9 4z" fill="#e8e8e8"/><path d="M20 8l8 6-10 4zM40 6l10 8-12 2z" fill="#5a6a8a"/><path d="M30 10l6 6-8 1z" fill="#4aa0c0"/></svg>
</body></html>
